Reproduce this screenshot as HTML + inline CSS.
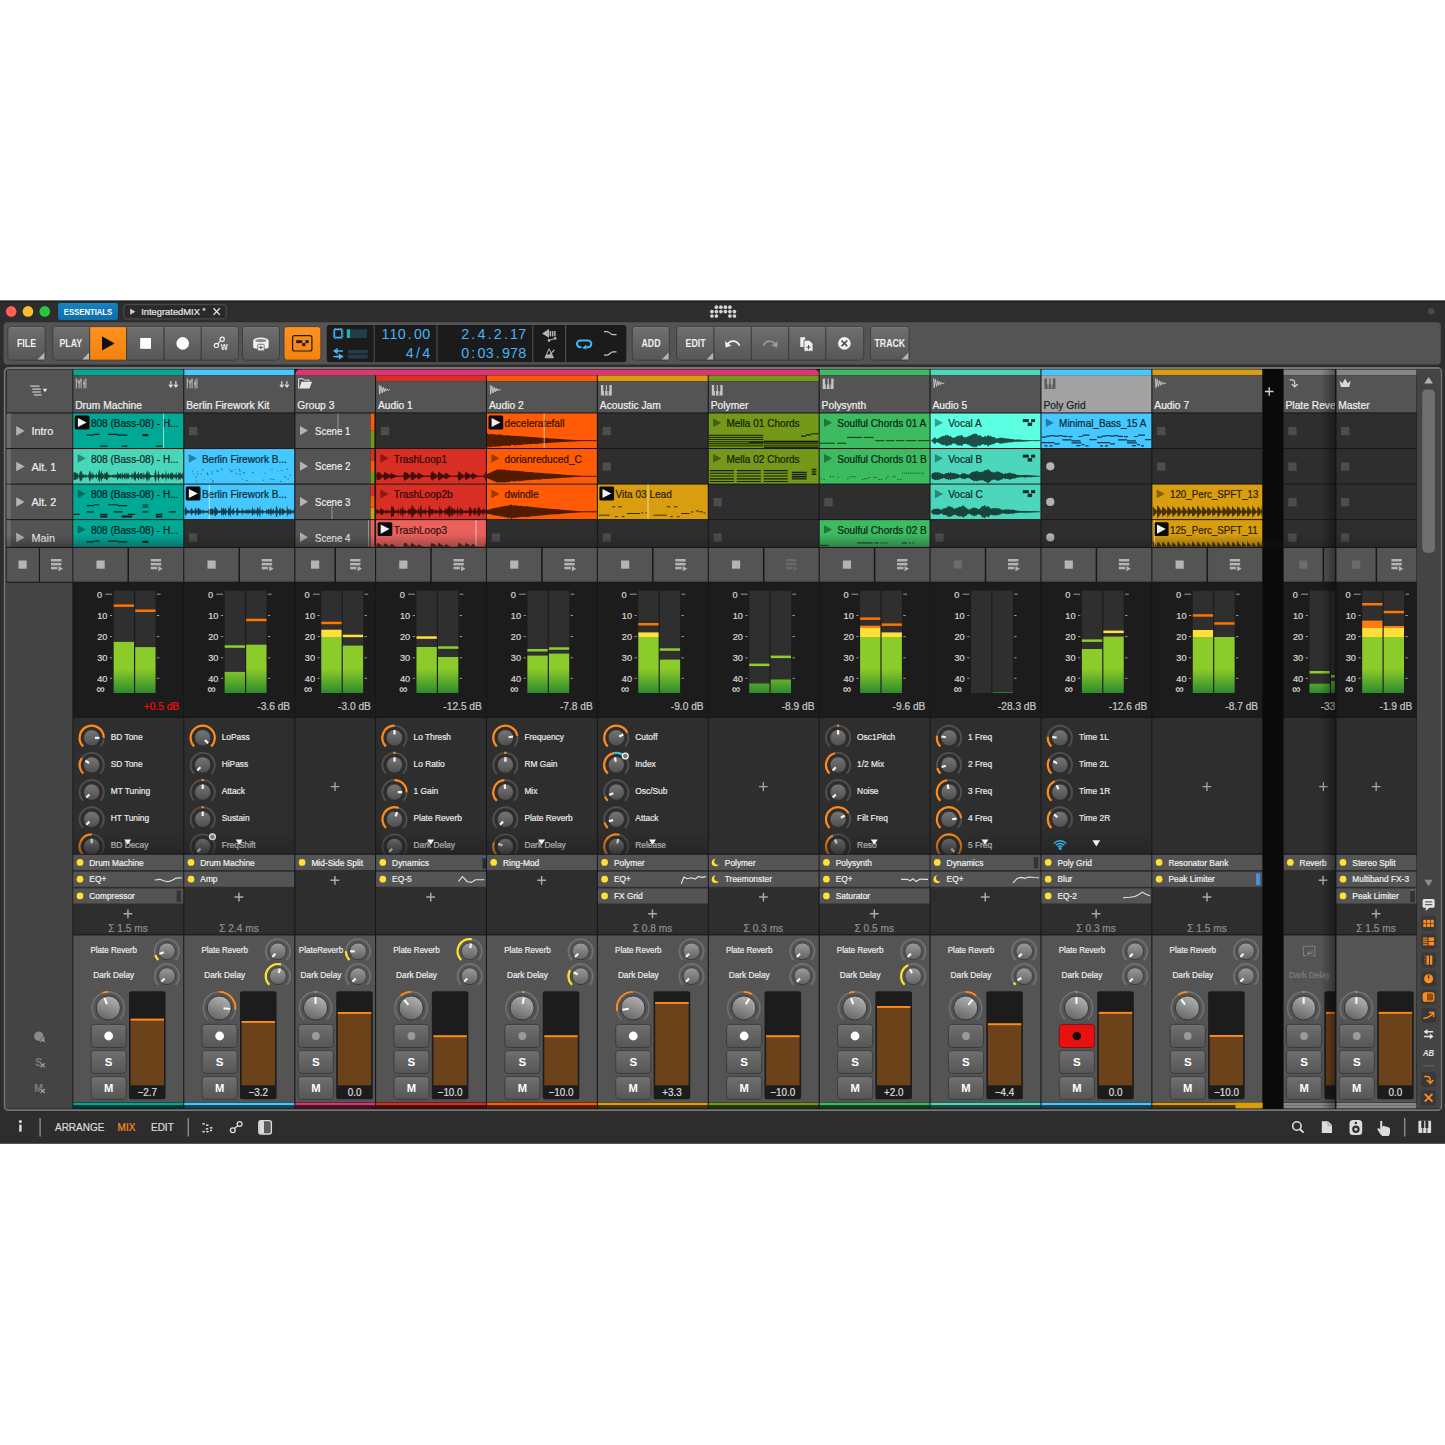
<!DOCTYPE html>
<html><head><meta charset="utf-8"><title>Bitwig Studio - IntegratedMIX</title>
<style>
html,body{margin:0;padding:0;background:#fff;}
svg{display:block;font-family:"Liberation Sans",sans-serif;}
text{font-family:"Liberation Sans",sans-serif;}
</style></head><body>
<svg width="1445" height="1445" viewBox="0 0 1445 1445">
<defs>
<linearGradient id="gBtn" x1="0" y1="0" x2="0" y2="1"><stop offset="0" stop-color="#717171"/><stop offset="0.2" stop-color="#6a6a6a"/><stop offset="1" stop-color="#565656"/></linearGradient>
<linearGradient id="gBtnO" x1="0" y1="0" x2="0" y2="1"><stop offset="0" stop-color="#ff9220"/><stop offset="1" stop-color="#f5820f"/></linearGradient>
<linearGradient id="gMeter" gradientUnits="userSpaceOnUse" x1="0" y1="669" x2="0" y2="693"><stop offset="0" stop-color="#8bcb2a"/><stop offset="1" stop-color="#2c8a2e"/></linearGradient>
<linearGradient id="gKnob" x1="0" y1="0" x2="0" y2="1"><stop offset="0" stop-color="#777"/><stop offset="1" stop-color="#4e4e4e"/></linearGradient>
<linearGradient id="gKnobL" x1="0" y1="0" x2="0" y2="1"><stop offset="0" stop-color="#9c9c9c"/><stop offset="1" stop-color="#626262"/></linearGradient>
<linearGradient id="gPan" x1="0.7" y1="0" x2="0.3" y2="1"><stop offset="0" stop-color="#b4b4b4"/><stop offset="1" stop-color="#646464"/></linearGradient>
<linearGradient id="gFadeK" gradientUnits="userSpaceOnUse" x1="0" y1="832" x2="0" y2="854"><stop offset="0" stop-color="#1c1c1c" stop-opacity="0"/><stop offset="1" stop-color="#1c1c1c" stop-opacity="0.5"/></linearGradient>
<linearGradient id="gFadeC" gradientUnits="userSpaceOnUse" x1="0" y1="534" x2="0" y2="547"><stop offset="0" stop-color="#1a1a1a" stop-opacity="0"/><stop offset="1" stop-color="#1a1a1a" stop-opacity="0.35"/></linearGradient>
<linearGradient id="gShadR" x1="0" y1="0" x2="1" y2="0"><stop offset="0" stop-color="#000" stop-opacity="0"/><stop offset="1" stop-color="#000" stop-opacity="0.38"/></linearGradient>
<linearGradient id="gEss" x1="0" y1="0" x2="0" y2="1"><stop offset="0" stop-color="#1583c4"/><stop offset="1" stop-color="#0f6ea8"/></linearGradient>
<clipPath id="clipMain"><rect x="5.6" y="368.8" width="1435" height="740"/></clipPath>
</defs>
<rect x="0" y="300.6" width="1445" height="843.2" fill="#2d2d2d"/>
<rect x="0" y="300.6" width="1445" height="1" fill="#1c1c1c"/>
<circle cx="11.2" cy="311.4" r="5.3" fill="#ff5f57"/>
<circle cx="27.95" cy="311.4" r="5.3" fill="#febc2e"/>
<circle cx="44.8" cy="311.4" r="5.3" fill="#2ac83f"/>
<rect x="58.1" y="302.9" width="59.8" height="17" rx="2.5" fill="url(#gEss)"/>
<text transform="translate(88 315.2) scale(0.865 1)" font-size="8.9" fill="#ffffff" text-anchor="middle" font-weight="bold">ESSENTIALS</text>
<rect x="123.9" y="304.7" width="102.3" height="14.2" rx="2.2" fill="#2a2a2a" stroke="#555" stroke-width="0.9"/>
<path d="M130.2 308.6L135.4 311.7L130.2 314.8Z" fill="#cfcfcf"/>
<text transform="translate(141.2 315.2) scale(0.945 1)" font-size="9.9" fill="#e8e8e8" stroke="#e8e8e8" stroke-width="0.22">IntegratedMIX</text>
<text transform="translate(202.6 313.4) scale(0.93 1)" font-size="8" fill="#e8e8e8" stroke="#e8e8e8" stroke-width="0.22">*</text>
<path d="M213.5 308.2L219.8 314.9M219.8 308.2L213.5 314.9" fill="none" stroke="#e8e8e8" stroke-width="1.3"/>
<circle cx="716.4" cy="307.2" r="1.85" fill="#d4d4d4"/>
<circle cx="720.9" cy="307.2" r="1.85" fill="#d4d4d4"/>
<circle cx="725.4" cy="307.2" r="1.85" fill="#d4d4d4"/>
<circle cx="729.9" cy="307.2" r="1.85" fill="#d4d4d4"/>
<circle cx="711.9" cy="311.6" r="1.85" fill="#d4d4d4"/>
<circle cx="716.4" cy="311.6" r="1.85" fill="#d4d4d4"/>
<circle cx="720.9" cy="311.6" r="1.85" fill="#d4d4d4"/>
<circle cx="725.4" cy="311.6" r="1.85" fill="#d4d4d4"/>
<circle cx="729.9" cy="311.6" r="1.85" fill="#d4d4d4"/>
<circle cx="734.4" cy="311.6" r="1.85" fill="#d4d4d4"/>
<circle cx="711.9" cy="316" r="1.85" fill="#d4d4d4"/>
<circle cx="716.4" cy="316" r="1.85" fill="#d4d4d4"/>
<circle cx="729.9" cy="316" r="1.85" fill="#d4d4d4"/>
<circle cx="734.4" cy="316" r="1.85" fill="#d4d4d4"/>
<circle cx="1431.2" cy="311.3" r="3.3" fill="#4a4a4a"/>
<rect x="3.6" y="322.3" width="1437.2" height="42.3" rx="4" fill="#545454"/>
<path d="M11 326.6H42Q45.2 326.6 45.2 329.8V357Q45.2 360.2 42 360.2H11Q7.8 360.2 7.8 357V329.8Q7.8 326.6 11 326.6Z" fill="url(#gBtn)" stroke="#3c3c3c" stroke-width="0.9"/>
<line x1="9.8" y1="327.5" x2="43.2" y2="327.5" stroke="#7c7c7c" stroke-width="0.8"/>
<text transform="translate(26.5 347.3) scale(0.88 1)" font-size="10" fill="#f0f0f0" text-anchor="middle" font-weight="bold">FILE</text>
<path d="M44.4 352.6L44.4 359.4L37.6 359.4Z" fill="#b4b4b4"/>
<path d="M55.9 326.6H89.7V360.2H55.9Q52.7 360.2 52.7 357V329.8Q52.7 326.6 55.9 326.6Z" fill="url(#gBtn)" stroke="#3c3c3c" stroke-width="0.9"/>
<line x1="54.7" y1="327.5" x2="89.2" y2="327.5" stroke="#7c7c7c" stroke-width="0.8"/>
<text transform="translate(70.8 347.3) scale(0.88 1)" font-size="10" fill="#f0f0f0" text-anchor="middle" font-weight="bold">PLAY</text>
<path d="M89.1 352.6L89.1 359.4L82.3 359.4Z" fill="#b4b4b4"/>
<path d="M89.7 326.6H126.6V360.2H89.7V326.6Z" fill="url(#gBtnO)" stroke="#3c3c3c" stroke-width="0.9"/>
<path d="M102 336.2L114.6 343.4L102 350.6Z" fill="#111"/>
<path d="M126.6 326.6H164.1V360.2H126.6V326.6Z" fill="url(#gBtn)" stroke="#3c3c3c" stroke-width="0.9"/>
<line x1="127.1" y1="327.5" x2="163.6" y2="327.5" stroke="#7c7c7c" stroke-width="0.8"/>
<rect x="140.2" y="338" width="10.8" height="10.8" fill="#fff"/>
<path d="M164.1 326.6H201.3V360.2H164.1V326.6Z" fill="url(#gBtn)" stroke="#3c3c3c" stroke-width="0.9"/>
<line x1="164.6" y1="327.5" x2="200.8" y2="327.5" stroke="#7c7c7c" stroke-width="0.8"/>
<circle cx="182.7" cy="343.4" r="6.3" fill="#fff"/>
<path d="M201.3 326.6H235.3Q238.5 326.6 238.5 329.8V357Q238.5 360.2 235.3 360.2H201.3V326.6Z" fill="url(#gBtn)" stroke="#3c3c3c" stroke-width="0.9"/>
<line x1="201.8" y1="327.5" x2="236.5" y2="327.5" stroke="#7c7c7c" stroke-width="0.8"/>
<circle cx="216.4" cy="345.4" r="2.1" fill="none" stroke="#eee" stroke-width="1.2"/>
<circle cx="222.2" cy="339.2" r="2.1" fill="none" stroke="#eee" stroke-width="1.2"/>
<line x1="217.8" y1="343.9" x2="220.8" y2="340.7" stroke="#eee" stroke-width="1.2"/>
<text transform="translate(224.2 349.6) scale(0.9 1)" font-size="8.2" fill="#eee" text-anchor="middle" font-weight="bold">W</text>
<path d="M245.7 326.6H276.3Q279.5 326.6 279.5 329.8V357Q279.5 360.2 276.3 360.2H245.7Q242.5 360.2 242.5 357V329.8Q242.5 326.6 245.7 326.6Z" fill="url(#gBtn)" stroke="#3c3c3c" stroke-width="0.9"/>
<line x1="244.5" y1="327.5" x2="277.5" y2="327.5" stroke="#7c7c7c" stroke-width="0.8"/>
<path d="M253.2 340.5V347.2C253.2 349.6 268.6 349.6 268.6 347.2V340.5Z" fill="#f0f0f0"/>
<ellipse cx="260.9" cy="340.5" rx="7.7" ry="3" fill="#f0f0f0"/>
<ellipse cx="260.9" cy="340.6" rx="5.6" ry="1.7" fill="#8a8a8a"/>
<rect x="257.7" y="344.3" width="6.5" height="6.5" rx="0.8" fill="#f0f0f0" stroke="#666" stroke-width="0.8"/>
<path d="M259.1 347.5H262.8M260.95 345.7V349.3" fill="none" stroke="#555" stroke-width="1"/>
<path d="M287.2 326.6H317.7Q320.9 326.6 320.9 329.8V357Q320.9 360.2 317.7 360.2H287.2Q284 360.2 284 357V329.8Q284 326.6 287.2 326.6Z" fill="url(#gBtnO)" stroke="#3c3c3c" stroke-width="0.9"/>
<rect x="292.6" y="335.7" width="19.3" height="15.3" rx="2" fill="none" stroke="#1a1a1a" stroke-width="1.2"/>
<rect x="296.2" y="340.2" width="6" height="2.9" fill="#1a1a1a"/>
<rect x="302.2" y="343.1" width="3.2" height="3" fill="#1a1a1a"/>
<rect x="305.4" y="340.2" width="3.2" height="2.9" fill="#1a1a1a"/>
<rect x="326.7" y="324.9" width="299.6" height="37.4" rx="3" fill="#1b1b1b"/>
<line x1="374.2" y1="324.9" x2="374.2" y2="362.3" stroke="#4c4c4c" stroke-width="1.2"/>
<line x1="437" y1="324.9" x2="437" y2="362.3" stroke="#4c4c4c" stroke-width="1.2"/>
<line x1="532.8" y1="324.9" x2="532.8" y2="362.3" stroke="#4c4c4c" stroke-width="1.2"/>
<line x1="565.6" y1="324.9" x2="565.6" y2="362.3" stroke="#4c4c4c" stroke-width="1.2"/>
<rect x="334.5" y="329.7" width="7.3" height="7.7" rx="0.8" fill="none" stroke="#46b4f5" stroke-width="1.3"/>
<rect x="333.3" y="328.5" width="9.7" height="10.1" rx="1.6" fill="none" stroke="#46b4f5" stroke-width="1.0" stroke-dasharray="0.9 0.75"/>
<rect x="346.8" y="329.3" width="20.2" height="8.7" fill="#233c4a"/>
<rect x="346.8" y="329.3" width="3.2" height="8.7" fill="#21b3a8"/>
<path d="M343 351H336.5M343.2 356.6H336" fill="none" stroke="#46b4f5" stroke-width="1.5"/>
<path d="M333 351L337.6 347.8V354.2ZM343.4 356.6L338.8 353.4V359.8Z" fill="#46b4f5"/>
<path d="M333.4 356.6H339" fill="none" stroke="#46b4f5" stroke-width="1.5"/>
<rect x="347.8" y="349.9" width="19.9" height="3.6" fill="#233c4a"/>
<rect x="347.8" y="354.7" width="19.9" height="3.8" fill="#233c4a"/>
<text x="381.4 389.55 397.7 407.84 414 422.15" y="339.3" font-size="14.3" fill="#46b4f5">110.00</text>
<text x="405.85 415.99 422.15" y="358.4" font-size="14.3" fill="#46b4f5">4/4</text>
<text x="461.2 471.34 477.5 487.64 493.8 503.94 510.1 518.25" y="339.3" font-size="14.3" fill="#46b4f5">2.4.2.17</text>
<text x="461.2 471.34 477.5 485.65 495.79 501.95 510.1 518.25" y="358.4" font-size="14.3" fill="#46b4f5">0:03.978</text>
<path d="M542.1 333.4L549 328.9V337.7Z" fill="#b4b4b4"/>
<rect x="549.6" y="331" width="1.5" height="5.3" fill="#b4b4b4"/>
<rect x="551.85" y="331" width="1.5" height="5.3" fill="#b4b4b4"/>
<rect x="554.1" y="331" width="1.5" height="5.3" fill="#b4b4b4"/>
<circle cx="549" cy="340.4" r="1.3" fill="#b4b4b4"/>
<circle cx="555.2" cy="338.4" r="1.3" fill="#b4b4b4"/>
<line x1="549" y1="340.4" x2="555.2" y2="338.4" stroke="#b4b4b4" stroke-width="1"/>
<path d="M545 357.8L549.1 348.8L553.4 357.8Z" fill="none" stroke="#b4b4b4" stroke-width="1"/>
<path d="M545 357.8L546.4 354.6H552L553.4 357.8Z" fill="#b4b4b4"/>
<line x1="549.4" y1="355.2" x2="554.4" y2="349.8" stroke="#b4b4b4" stroke-width="1.2"/>
<path d="M581.4 347.3H580.4A3.45 3.45 0 0 1 580.4 340.4H587.9A3.45 3.45 0 0 1 587.9 347.3H586.4" fill="none" stroke="#46b4f5" stroke-width="2"/>
<path d="M582.2 347.9L586.4 344.4V349.6Z" fill="#46b4f5"/>
<path d="M604 331.7H607C609.8 331.7 610.2 334.6 613 334.6H616.5" fill="none" stroke="#c4c4c4" stroke-width="1.2"/>
<path d="M604 355.1H607C609.8 355.1 610.2 351.9 613 351.9H616.5" fill="none" stroke="#c4c4c4" stroke-width="1.2"/>
<path d="M635.5 326.6H666.2Q669.4 326.6 669.4 329.8V357Q669.4 360.2 666.2 360.2H635.5Q632.3 360.2 632.3 357V329.8Q632.3 326.6 635.5 326.6Z" fill="url(#gBtn)" stroke="#3c3c3c" stroke-width="0.9"/>
<line x1="634.3" y1="327.5" x2="667.4" y2="327.5" stroke="#7c7c7c" stroke-width="0.8"/>
<text transform="translate(651 347.3) scale(0.88 1)" font-size="10" fill="#f0f0f0" text-anchor="middle" font-weight="bold">ADD</text>
<path d="M668.6 352.6L668.6 359.4L661.8 359.4Z" fill="#b4b4b4"/>
<path d="M679.8 326.6H714V360.2H679.8Q676.6 360.2 676.6 357V329.8Q676.6 326.6 679.8 326.6Z" fill="url(#gBtn)" stroke="#3c3c3c" stroke-width="0.9"/>
<line x1="678.6" y1="327.5" x2="713.5" y2="327.5" stroke="#7c7c7c" stroke-width="0.8"/>
<text transform="translate(695.6 347.3) scale(0.88 1)" font-size="10" fill="#f0f0f0" text-anchor="middle" font-weight="bold">EDIT</text>
<path d="M713.4 352.6L713.4 359.4L706.6 359.4Z" fill="#b4b4b4"/>
<path d="M714 326.6H751.4V360.2H714V326.6Z" fill="url(#gBtn)" stroke="#3c3c3c" stroke-width="0.9"/>
<line x1="714.5" y1="327.5" x2="750.9" y2="327.5" stroke="#7c7c7c" stroke-width="0.8"/>
<path d="M726.8 345.6C729.5 339.8 736.5 339.6 739.6 345.6" fill="none" stroke="#f0f0f0" stroke-width="1.8"/>
<path d="M725 341.3L725.6 347.6L731.4 345.8Z" fill="#f0f0f0"/>
<path d="M751.4 326.6H788.8V360.2H751.4V326.6Z" fill="url(#gBtn)" stroke="#3c3c3c" stroke-width="0.9"/>
<line x1="751.9" y1="327.5" x2="788.3" y2="327.5" stroke="#7c7c7c" stroke-width="0.8"/>
<path d="M763.2 345.6C766.3 339.6 773.3 339.8 776 345.6" fill="none" stroke="#9a9a9a" stroke-width="1.6"/>
<path d="M777.8 341.3L777.2 347.6L771.4 345.8Z" fill="#9a9a9a"/>
<path d="M788.8 326.6H825.9V360.2H788.8V326.6Z" fill="url(#gBtn)" stroke="#3c3c3c" stroke-width="0.9"/>
<line x1="789.3" y1="327.5" x2="825.4" y2="327.5" stroke="#7c7c7c" stroke-width="0.8"/>
<path d="M800.3 337.2H805.2V347H800.3Z" fill="#f0f0f0"/>
<path d="M804 340.2H809.4L813 343.8V351.2H804Z" fill="#f0f0f0" stroke="#5a5a5a" stroke-width="0.8"/>
<path d="M806.3 347.2H810.7M808.5 345V349.4" fill="none" stroke="#555" stroke-width="1"/>
<path d="M825.9 326.6H860.5Q863.7 326.6 863.7 329.8V357Q863.7 360.2 860.5 360.2H825.9V326.6Z" fill="url(#gBtn)" stroke="#3c3c3c" stroke-width="0.9"/>
<line x1="826.4" y1="327.5" x2="861.7" y2="327.5" stroke="#7c7c7c" stroke-width="0.8"/>
<circle cx="844.4" cy="343.4" r="6.3" fill="#f0f0f0"/>
<path d="M841.5 340.5L847.3 346.3M847.3 340.5L841.5 346.3" fill="none" stroke="#444" stroke-width="1.6"/>
<path d="M873.7 326.6H906Q909.2 326.6 909.2 329.8V357Q909.2 360.2 906 360.2H873.7Q870.5 360.2 870.5 357V329.8Q870.5 326.6 873.7 326.6Z" fill="url(#gBtn)" stroke="#3c3c3c" stroke-width="0.9"/>
<line x1="872.5" y1="327.5" x2="907.2" y2="327.5" stroke="#7c7c7c" stroke-width="0.8"/>
<text transform="translate(889.8 347.3) scale(0.88 1)" font-size="10" fill="#f0f0f0" text-anchor="middle" font-weight="bold">TRACK</text>
<path d="M908.4 352.6L908.4 359.4L901.6 359.4Z" fill="#b4b4b4"/>
<rect x="4.7" y="368" width="1436.6" height="742.2" rx="4" fill="#181818" stroke="#757575" stroke-width="1.8"/>
<rect x="6.6" y="369.5" width="65.8" height="42.9" fill="#545454"/>
<line x1="30.2" y1="386.1" x2="39.6" y2="386.1" stroke="#d8d8d8" stroke-width="1.1"/>
<line x1="32.3" y1="389.05" x2="40.8" y2="389.05" stroke="#d8d8d8" stroke-width="1.1"/>
<line x1="32.3" y1="392" x2="40.8" y2="392" stroke="#d8d8d8" stroke-width="1.1"/>
<line x1="33.8" y1="394.95" x2="41.8" y2="394.95" stroke="#d8d8d8" stroke-width="1.1"/>
<path d="M42.8 388.7H47.2L45 392.2Z" fill="#e8e8e8"/>
<rect x="6.6" y="413.5" width="65.8" height="34.5" fill="#545454"/>
<rect x="6.6" y="413.5" width="4.2" height="34.5" fill="#6c6c6c"/>
<path d="M16.2 426.1L24.6 430.9L16.2 435.7Z" fill="#b4b4b4"/>
<text transform="translate(31.5 435.1) scale(0.98 1)" font-size="11.1" fill="#ececec" stroke="#ececec" stroke-width="0.22">Intro</text>
<rect x="6.6" y="449.05" width="65.8" height="34.5" fill="#545454"/>
<rect x="6.6" y="449.05" width="4.2" height="34.5" fill="#6c6c6c"/>
<path d="M16.2 461.65L24.6 466.45L16.2 471.25Z" fill="#b4b4b4"/>
<text transform="translate(31.5 470.65) scale(0.98 1)" font-size="11.1" fill="#ececec" stroke="#ececec" stroke-width="0.22">Alt. 1</text>
<rect x="6.6" y="484.6" width="65.8" height="34.5" fill="#545454"/>
<rect x="6.6" y="484.6" width="4.2" height="34.5" fill="#6c6c6c"/>
<path d="M16.2 497.2L24.6 502L16.2 506.8Z" fill="#b4b4b4"/>
<text transform="translate(31.5 506.2) scale(0.98 1)" font-size="11.1" fill="#ececec" stroke="#ececec" stroke-width="0.22">Alt. 2</text>
<rect x="6.6" y="520.15" width="65.8" height="26.7" fill="#545454"/>
<rect x="6.6" y="520.15" width="4.2" height="26.7" fill="#6c6c6c"/>
<path d="M16.2 532.75L24.6 537.55L16.2 542.35Z" fill="#b4b4b4"/>
<text transform="translate(31.5 541.75) scale(0.98 1)" font-size="11.1" fill="#ececec" stroke="#ececec" stroke-width="0.22">Main</text>
<rect x="6.6" y="548" width="32.3" height="33.7" fill="#545454"/>
<rect x="40" y="548" width="32.4" height="33.7" fill="#545454"/>
<rect x="18.5" y="560.5" width="8.2" height="8.2" fill="#b4b4b4"/>
<rect x="51" y="559" width="10.4" height="2.5" fill="#b4b4b4"/>
<rect x="51" y="562.9" width="10.4" height="2.5" fill="#b4b4b4"/>
<rect x="51" y="566.8" width="6.4" height="2.5" fill="#b4b4b4"/>
<path d="M58.5 566.1L63 568.7L58.5 571.3Z" fill="#b4b4b4"/>
<rect x="5.7" y="582.7" width="66.7" height="525.9" fill="#444444"/>
<circle cx="38.8" cy="1036.2" r="4.7" fill="#8a8a8a"/>
<path d="M40.5 1037.8L44.8 1041.8M44.8 1037.8L40.5 1041.8" fill="none" stroke="#444" stroke-width="2.4"/>
<path d="M40.5 1037.8L44.8 1041.8M44.8 1037.8L40.5 1041.8" fill="none" stroke="#a0a0a0" stroke-width="1.2"/>
<text transform="translate(38.8 1066.2) scale(0.95 1)" font-size="11.2" fill="#7c7c7c" text-anchor="middle" font-weight="bold">S</text>
<path d="M40.5 1063.3L44.8 1067.3M44.8 1063.3L40.5 1067.3" fill="none" stroke="#444" stroke-width="2.4"/>
<path d="M40.5 1063.3L44.8 1067.3M44.8 1063.3L40.5 1067.3" fill="none" stroke="#a0a0a0" stroke-width="1.2"/>
<text transform="translate(38.6 1092.4) scale(0.92 1)" font-size="11.4" fill="#7c7c7c" text-anchor="middle" font-weight="bold">M</text>
<path d="M40.5 1089L44.8 1093M44.8 1089L40.5 1093" fill="none" stroke="#444" stroke-width="2.4"/>
<path d="M40.5 1089L44.8 1093M44.8 1089L40.5 1093" fill="none" stroke="#a0a0a0" stroke-width="1.2"/>
<rect x="1416.8" y="368.9" width="23.5" height="739.7" fill="#444444"/>
<rect x="1422.3" y="389.4" width="12.6" height="163.4" rx="4.5" fill="#707070"/>
<path d="M1428.6 377L1433 383.6H1424.2Z" fill="#b0b0b0"/>
<rect x="1262.6" y="368.9" width="21" height="739.7" fill="#0a0a0a"/>
<path d="M1264.9 391.5H1273.5M1269.2 387.2V395.8" fill="none" stroke="#d0d0d0" stroke-width="1.4"/>
<g clip-path="url(#clipMain)">
<rect x="73.3" y="369.5" width="109.9" height="5.7" fill="#00a896"/>
<rect x="73.3" y="375.2" width="109.9" height="37.2" fill="#545454"/>
<rect x="184.3" y="369.5" width="109.9" height="5.7" fill="#44c8ff"/>
<rect x="184.3" y="375.2" width="109.9" height="37.2" fill="#545454"/>
<rect x="295.4" y="375.2" width="79.6" height="37.2" fill="#545454"/>
<rect x="376.1" y="375.4" width="109.8" height="5.8" fill="#d92e24"/>
<rect x="376.1" y="381.2" width="109.8" height="31.2" fill="#545454"/>
<rect x="487" y="375.4" width="109.8" height="5.8" fill="#ff5a05"/>
<rect x="487" y="381.2" width="109.8" height="31.2" fill="#545454"/>
<rect x="597.9" y="375.4" width="109.8" height="5.8" fill="#d99d10"/>
<rect x="597.9" y="381.2" width="109.8" height="31.2" fill="#545454"/>
<rect x="708.8" y="375.4" width="109.8" height="5.8" fill="#73981a"/>
<rect x="708.8" y="381.2" width="109.8" height="31.2" fill="#545454"/>
<rect x="819.7" y="369.5" width="109.8" height="5.7" fill="#3cbb60"/>
<rect x="819.7" y="375.2" width="109.8" height="37.2" fill="#545454"/>
<rect x="930.6" y="369.5" width="109.8" height="5.7" fill="#4cd6bb"/>
<rect x="930.6" y="375.2" width="109.8" height="37.2" fill="#545454"/>
<rect x="1041.5" y="369.5" width="109.8" height="5.7" fill="#44c8ff"/>
<rect x="1041.5" y="375.2" width="109.8" height="37.2" fill="#a2a2a2"/>
<rect x="1152.4" y="369.5" width="109.8" height="5.7" fill="#d99d10"/>
<rect x="1152.4" y="375.2" width="109.8" height="37.2" fill="#545454"/>
<rect x="1283.6" y="369.5" width="51.4" height="5.7" fill="#858585"/>
<rect x="1283.6" y="375.2" width="51.4" height="37.2" fill="#545454"/>
<rect x="1336.3" y="369.5" width="80.1" height="5.7" fill="#858585"/>
<rect x="1336.3" y="375.2" width="80.1" height="37.2" fill="#545454"/>
<path d="M295.4 375.3V374.6Q295.4 369.4 300.6 369.4H813.8Q818.9 369.4 818.9 374.6V375.3Z" fill="#d93672"/>
<line x1="76.3" y1="378.4" x2="76.3" y2="388.4" stroke="#bdbdbd" stroke-width="1"/>
<line x1="79.1" y1="379.8" x2="79.1" y2="388.4" stroke="#bdbdbd" stroke-width="1"/>
<line x1="81.1" y1="378.4" x2="81.1" y2="388.4" stroke="#bdbdbd" stroke-width="1"/>
<line x1="84.1" y1="379.8" x2="84.1" y2="388.4" stroke="#bdbdbd" stroke-width="1"/>
<line x1="85.9" y1="378.4" x2="85.9" y2="388.4" stroke="#bdbdbd" stroke-width="1"/>
<path d="M76.3 379.4L79.1 383.4L81.1 379.4" fill="none" stroke="#bdbdbd" stroke-width="0.9"/>
<path d="M83.1 383.6H85.1" fill="none" stroke="#bdbdbd" stroke-width="1.6"/>
<path d="M170.8 381V386.6M168.9 384.6L170.8 387L172.7 384.6" fill="none" stroke="#e0e0e0" stroke-width="1.1"/>
<path d="M175.9 381V386.6M174 384.6L175.9 387L177.8 384.6" fill="none" stroke="#e0e0e0" stroke-width="1.1"/>
<text transform="translate(75.2 408.7) scale(0.925 1)" font-size="11.1" fill="#f0f0f0" stroke="#f0f0f0" stroke-width="0.22">Drum Machine</text>
<line x1="187.3" y1="378.4" x2="187.3" y2="388.4" stroke="#bdbdbd" stroke-width="1"/>
<line x1="190.1" y1="379.8" x2="190.1" y2="388.4" stroke="#bdbdbd" stroke-width="1"/>
<line x1="192.1" y1="378.4" x2="192.1" y2="388.4" stroke="#bdbdbd" stroke-width="1"/>
<line x1="195.1" y1="379.8" x2="195.1" y2="388.4" stroke="#bdbdbd" stroke-width="1"/>
<line x1="196.9" y1="378.4" x2="196.9" y2="388.4" stroke="#bdbdbd" stroke-width="1"/>
<path d="M187.3 379.4L190.1 383.4L192.1 379.4" fill="none" stroke="#bdbdbd" stroke-width="0.9"/>
<path d="M194.1 383.6H196.1" fill="none" stroke="#bdbdbd" stroke-width="1.6"/>
<path d="M281.8 381V386.6M279.9 384.6L281.8 387L283.7 384.6" fill="none" stroke="#e0e0e0" stroke-width="1.1"/>
<path d="M286.9 381V386.6M285 384.6L286.9 387L288.8 384.6" fill="none" stroke="#e0e0e0" stroke-width="1.1"/>
<text transform="translate(186.2 408.7) scale(0.925 1)" font-size="11.1" fill="#f0f0f0" stroke="#f0f0f0" stroke-width="0.22">Berlin Firework Kit</text>
<path d="M298.6 388.6V378.8H303L304.2 380.1H309.2V381.2" fill="none" stroke="#e6e6e6" stroke-width="1"/>
<path d="M299.2 388.6L301.6 381.7H312L309.6 388.6Z" fill="#e6e6e6"/>
<text transform="translate(297.3 408.7) scale(0.925 1)" font-size="11.1" fill="#f0f0f0" stroke="#f0f0f0" stroke-width="0.22">Group 3</text>
<path d="M379.2 384.9L379.7 394.2L380.9 385.9L382.1 393L383.2 387.3L384.2 391.9L385.2 388.3L386.2 391L387.2 389L388.2 390.3L389.8 389.6" fill="none" stroke="#c8c8c8" stroke-width="0.95" stroke-linejoin="round"/>
<text transform="translate(378 408.7) scale(0.925 1)" font-size="11.1" fill="#f0f0f0" stroke="#f0f0f0" stroke-width="0.22">Audio 1</text>
<path d="M490.1 384.9L490.6 394.2L491.8 385.9L493 393L494.1 387.3L495.1 391.9L496.1 388.3L497.1 391L498.1 389L499.1 390.3L500.7 389.6" fill="none" stroke="#c8c8c8" stroke-width="0.95" stroke-linejoin="round"/>
<text transform="translate(488.9 408.7) scale(0.925 1)" font-size="11.1" fill="#f0f0f0" stroke="#f0f0f0" stroke-width="0.22">Audio 2</text>
<rect x="600.9" y="385" width="10.9" height="10.6" rx="0.6" fill="#c4c4c4"/>
<rect x="604" y="384.8" width="1.1" height="10.4" fill="#545454"/>
<rect x="607.6" y="384.8" width="1.1" height="10.4" fill="#545454"/>
<rect x="603.3" y="384.8" width="2.5" height="6.2" fill="#545454"/>
<rect x="606.9" y="384.8" width="2.5" height="6.2" fill="#545454"/>
<text transform="translate(599.8 408.7) scale(0.925 1)" font-size="11.1" fill="#f0f0f0" stroke="#f0f0f0" stroke-width="0.22">Acoustic Jam</text>
<rect x="711.8" y="385" width="10.9" height="10.6" rx="0.6" fill="#c4c4c4"/>
<rect x="714.9" y="384.8" width="1.1" height="10.4" fill="#545454"/>
<rect x="718.5" y="384.8" width="1.1" height="10.4" fill="#545454"/>
<rect x="714.2" y="384.8" width="2.5" height="6.2" fill="#545454"/>
<rect x="717.8" y="384.8" width="2.5" height="6.2" fill="#545454"/>
<text transform="translate(710.7 408.7) scale(0.925 1)" font-size="11.1" fill="#f0f0f0" stroke="#f0f0f0" stroke-width="0.22">Polymer</text>
<rect x="822.7" y="378.4" width="10.9" height="10.6" rx="0.6" fill="#c4c4c4"/>
<rect x="825.8" y="378.2" width="1.1" height="10.4" fill="#545454"/>
<rect x="829.4" y="378.2" width="1.1" height="10.4" fill="#545454"/>
<rect x="825.1" y="378.2" width="2.5" height="6.2" fill="#545454"/>
<rect x="828.7" y="378.2" width="2.5" height="6.2" fill="#545454"/>
<text transform="translate(821.6 408.7) scale(0.925 1)" font-size="11.1" fill="#f0f0f0" stroke="#f0f0f0" stroke-width="0.22">Polysynth</text>
<path d="M933.7 378.3L934.2 387.6L935.4 379.3L936.6 386.4L937.7 380.7L938.7 385.3L939.7 381.7L940.7 384.4L941.7 382.4L942.7 383.7L944.3 383" fill="none" stroke="#c8c8c8" stroke-width="0.95" stroke-linejoin="round"/>
<text transform="translate(932.5 408.7) scale(0.925 1)" font-size="11.1" fill="#f0f0f0" stroke="#f0f0f0" stroke-width="0.22">Audio 5</text>
<rect x="1044.5" y="378.4" width="10.9" height="10.6" rx="0.6" fill="#5a5a5a"/>
<rect x="1047.6" y="378.2" width="1.1" height="10.4" fill="#a2a2a2"/>
<rect x="1051.2" y="378.2" width="1.1" height="10.4" fill="#a2a2a2"/>
<rect x="1046.9" y="378.2" width="2.5" height="6.2" fill="#a2a2a2"/>
<rect x="1050.5" y="378.2" width="2.5" height="6.2" fill="#a2a2a2"/>
<text transform="translate(1043.4 408.7) scale(0.925 1)" font-size="11.1" fill="#1c1c1c" stroke="#1c1c1c" stroke-width="0.22">Poly Grid</text>
<path d="M1155.5 378.3L1156 387.6L1157.2 379.3L1158.4 386.4L1159.5 380.7L1160.5 385.3L1161.5 381.7L1162.5 384.4L1163.5 382.4L1164.5 383.7L1166.1 383" fill="none" stroke="#c8c8c8" stroke-width="0.95" stroke-linejoin="round"/>
<text transform="translate(1154.3 408.7) scale(0.925 1)" font-size="11.1" fill="#f0f0f0" stroke="#f0f0f0" stroke-width="0.22">Audio 7</text>
<path d="M1289.6 379.8H1292.2C1294.8 379.8 1294.8 382.2 1294.8 386.4" fill="none" stroke="#d4d4d4" stroke-width="1.2"/>
<path d="M1291.8 384L1294.8 387L1297.8 384" fill="none" stroke="#d4d4d4" stroke-width="1.2"/>
<clipPath id="cpPR"><rect x="1283.6" y="368" width="51.4" height="742"/></clipPath><g clip-path="url(#cpPR)">
<text transform="translate(1285.5 408.7) scale(0.925 1)" font-size="11.1" fill="#f0f0f0" stroke="#f0f0f0" stroke-width="0.22">Plate Reverb</text>
</g>
<path d="M1339.5 380.8L1342.5 383.2L1345.1 378.6L1347.7 383.2L1350.7 380.8L1349.3 387H1340.9Z" fill="#d8d8d8"/>
<text transform="translate(1338.2 408.7) scale(0.925 1)" font-size="11.1" fill="#f0f0f0" stroke="#f0f0f0" stroke-width="0.22">Master</text>
<rect x="73.3" y="413.5" width="109.9" height="34.5" fill="#2e2e2e"/>
<rect x="78" y="426.9" width="8.3" height="8.3" fill="#4d4d4d"/>
<rect x="73.3" y="449.05" width="109.9" height="34.5" fill="#2e2e2e"/>
<rect x="78" y="462.45" width="8.3" height="8.3" fill="#4d4d4d"/>
<rect x="73.3" y="484.6" width="109.9" height="34.5" fill="#2e2e2e"/>
<rect x="78" y="498" width="8.3" height="8.3" fill="#4d4d4d"/>
<rect x="73.3" y="520.15" width="109.9" height="26.7" fill="#2e2e2e"/>
<rect x="78" y="533.55" width="8.3" height="8.3" fill="#4d4d4d"/>
<rect x="184.3" y="413.5" width="109.9" height="34.5" fill="#2e2e2e"/>
<rect x="189" y="426.9" width="8.3" height="8.3" fill="#4d4d4d"/>
<rect x="184.3" y="449.05" width="109.9" height="34.5" fill="#2e2e2e"/>
<rect x="189" y="462.45" width="8.3" height="8.3" fill="#4d4d4d"/>
<rect x="184.3" y="484.6" width="109.9" height="34.5" fill="#2e2e2e"/>
<rect x="189" y="498" width="8.3" height="8.3" fill="#4d4d4d"/>
<rect x="184.3" y="520.15" width="109.9" height="26.7" fill="#2e2e2e"/>
<rect x="189" y="533.55" width="8.3" height="8.3" fill="#4d4d4d"/>
<rect x="376.1" y="413.5" width="109.8" height="34.5" fill="#2e2e2e"/>
<rect x="380.8" y="426.9" width="8.3" height="8.3" fill="#4d4d4d"/>
<rect x="376.1" y="449.05" width="109.8" height="34.5" fill="#2e2e2e"/>
<rect x="380.8" y="462.45" width="8.3" height="8.3" fill="#4d4d4d"/>
<rect x="376.1" y="484.6" width="109.8" height="34.5" fill="#2e2e2e"/>
<rect x="380.8" y="498" width="8.3" height="8.3" fill="#4d4d4d"/>
<rect x="376.1" y="520.15" width="109.8" height="26.7" fill="#2e2e2e"/>
<rect x="380.8" y="533.55" width="8.3" height="8.3" fill="#4d4d4d"/>
<rect x="487" y="413.5" width="109.8" height="34.5" fill="#2e2e2e"/>
<rect x="491.7" y="426.9" width="8.3" height="8.3" fill="#4d4d4d"/>
<rect x="487" y="449.05" width="109.8" height="34.5" fill="#2e2e2e"/>
<rect x="491.7" y="462.45" width="8.3" height="8.3" fill="#4d4d4d"/>
<rect x="487" y="484.6" width="109.8" height="34.5" fill="#2e2e2e"/>
<rect x="491.7" y="498" width="8.3" height="8.3" fill="#4d4d4d"/>
<rect x="487" y="520.15" width="109.8" height="26.7" fill="#2e2e2e"/>
<rect x="491.7" y="533.55" width="8.3" height="8.3" fill="#4d4d4d"/>
<rect x="597.9" y="413.5" width="109.8" height="34.5" fill="#2e2e2e"/>
<rect x="602.6" y="426.9" width="8.3" height="8.3" fill="#4d4d4d"/>
<rect x="597.9" y="449.05" width="109.8" height="34.5" fill="#2e2e2e"/>
<rect x="602.6" y="462.45" width="8.3" height="8.3" fill="#4d4d4d"/>
<rect x="597.9" y="484.6" width="109.8" height="34.5" fill="#2e2e2e"/>
<rect x="602.6" y="498" width="8.3" height="8.3" fill="#4d4d4d"/>
<rect x="597.9" y="520.15" width="109.8" height="26.7" fill="#2e2e2e"/>
<rect x="602.6" y="533.55" width="8.3" height="8.3" fill="#4d4d4d"/>
<rect x="708.8" y="413.5" width="109.8" height="34.5" fill="#2e2e2e"/>
<rect x="713.5" y="426.9" width="8.3" height="8.3" fill="#4d4d4d"/>
<rect x="708.8" y="449.05" width="109.8" height="34.5" fill="#2e2e2e"/>
<rect x="713.5" y="462.45" width="8.3" height="8.3" fill="#4d4d4d"/>
<rect x="708.8" y="484.6" width="109.8" height="34.5" fill="#2e2e2e"/>
<rect x="713.5" y="498" width="8.3" height="8.3" fill="#4d4d4d"/>
<rect x="708.8" y="520.15" width="109.8" height="26.7" fill="#2e2e2e"/>
<rect x="713.5" y="533.55" width="8.3" height="8.3" fill="#4d4d4d"/>
<rect x="819.7" y="413.5" width="109.8" height="34.5" fill="#2e2e2e"/>
<rect x="824.4" y="426.9" width="8.3" height="8.3" fill="#4d4d4d"/>
<rect x="819.7" y="449.05" width="109.8" height="34.5" fill="#2e2e2e"/>
<rect x="824.4" y="462.45" width="8.3" height="8.3" fill="#4d4d4d"/>
<rect x="819.7" y="484.6" width="109.8" height="34.5" fill="#2e2e2e"/>
<rect x="824.4" y="498" width="8.3" height="8.3" fill="#4d4d4d"/>
<rect x="819.7" y="520.15" width="109.8" height="26.7" fill="#2e2e2e"/>
<rect x="824.4" y="533.55" width="8.3" height="8.3" fill="#4d4d4d"/>
<rect x="930.6" y="413.5" width="109.8" height="34.5" fill="#2e2e2e"/>
<rect x="935.3" y="426.9" width="8.3" height="8.3" fill="#4d4d4d"/>
<rect x="930.6" y="449.05" width="109.8" height="34.5" fill="#2e2e2e"/>
<rect x="935.3" y="462.45" width="8.3" height="8.3" fill="#4d4d4d"/>
<rect x="930.6" y="484.6" width="109.8" height="34.5" fill="#2e2e2e"/>
<rect x="935.3" y="498" width="8.3" height="8.3" fill="#4d4d4d"/>
<rect x="930.6" y="520.15" width="109.8" height="26.7" fill="#2e2e2e"/>
<rect x="935.3" y="533.55" width="8.3" height="8.3" fill="#4d4d4d"/>
<rect x="1041.5" y="413.5" width="109.8" height="34.5" fill="#2e2e2e"/>
<rect x="1046.2" y="426.9" width="8.3" height="8.3" fill="#4d4d4d"/>
<rect x="1041.5" y="449.05" width="109.8" height="34.5" fill="#2e2e2e"/>
<circle cx="1050.3" cy="466.35" r="4.1" fill="#b4b4b4"/>
<rect x="1041.5" y="484.6" width="109.8" height="34.5" fill="#2e2e2e"/>
<circle cx="1050.3" cy="501.9" r="4.1" fill="#b4b4b4"/>
<rect x="1041.5" y="520.15" width="109.8" height="26.7" fill="#2e2e2e"/>
<circle cx="1050.3" cy="537.45" r="4.1" fill="#b4b4b4"/>
<rect x="1152.4" y="413.5" width="109.8" height="34.5" fill="#2e2e2e"/>
<rect x="1157.1" y="426.9" width="8.3" height="8.3" fill="#4d4d4d"/>
<rect x="1152.4" y="449.05" width="109.8" height="34.5" fill="#2e2e2e"/>
<rect x="1157.1" y="462.45" width="8.3" height="8.3" fill="#4d4d4d"/>
<rect x="1152.4" y="484.6" width="109.8" height="34.5" fill="#2e2e2e"/>
<rect x="1157.1" y="498" width="8.3" height="8.3" fill="#4d4d4d"/>
<rect x="1152.4" y="520.15" width="109.8" height="26.7" fill="#2e2e2e"/>
<rect x="1157.1" y="533.55" width="8.3" height="8.3" fill="#4d4d4d"/>
<rect x="1283.6" y="413.5" width="51.4" height="34.5" fill="#2e2e2e"/>
<rect x="1288.3" y="426.9" width="8.3" height="8.3" fill="#4d4d4d"/>
<rect x="1283.6" y="449.05" width="51.4" height="34.5" fill="#2e2e2e"/>
<rect x="1288.3" y="462.45" width="8.3" height="8.3" fill="#4d4d4d"/>
<rect x="1283.6" y="484.6" width="51.4" height="34.5" fill="#2e2e2e"/>
<rect x="1288.3" y="498" width="8.3" height="8.3" fill="#4d4d4d"/>
<rect x="1283.6" y="520.15" width="51.4" height="26.7" fill="#2e2e2e"/>
<rect x="1288.3" y="533.55" width="8.3" height="8.3" fill="#4d4d4d"/>
<rect x="1336.3" y="413.5" width="80.1" height="34.5" fill="#2e2e2e"/>
<rect x="1341" y="426.9" width="8.3" height="8.3" fill="#4d4d4d"/>
<rect x="1336.3" y="449.05" width="80.1" height="34.5" fill="#2e2e2e"/>
<rect x="1341" y="462.45" width="8.3" height="8.3" fill="#4d4d4d"/>
<rect x="1336.3" y="484.6" width="80.1" height="34.5" fill="#2e2e2e"/>
<rect x="1341" y="498" width="8.3" height="8.3" fill="#4d4d4d"/>
<rect x="1336.3" y="520.15" width="80.1" height="26.7" fill="#2e2e2e"/>
<rect x="1341" y="533.55" width="8.3" height="8.3" fill="#4d4d4d"/>
<rect x="73.3" y="413.5" width="109.9" height="34.5" fill="#00a896"/>
<clipPath id="cl0_0"><rect x="73.3" y="413.5" width="109.9" height="34.5"/></clipPath>
<g clip-path="url(#cl0_0)">
<line x1="86.7" y1="435.2" x2="93.9" y2="435.2" stroke="#00211e" stroke-width="1.2"/>
<line x1="93.9" y1="434.4" x2="99.4" y2="434.4" stroke="#00211e" stroke-width="1.2"/>
<line x1="108.2" y1="434.4" x2="117.7" y2="434.4" stroke="#00211e" stroke-width="1.2"/>
<line x1="117.7" y1="435.2" x2="127.3" y2="435.2" stroke="#00211e" stroke-width="1.2"/>
<line x1="142.4" y1="435.2" x2="148.3" y2="435.2" stroke="#00211e" stroke-width="2.2"/>
<line x1="100.2" y1="446.1" x2="107.4" y2="446.1" stroke="#00211e" stroke-width="1.2"/>
<line x1="121.7" y1="446.1" x2="127.3" y2="446.1" stroke="#00211e" stroke-width="1.2"/>
<line x1="155.9" y1="446.1" x2="162.3" y2="446.1" stroke="#00211e" stroke-width="1.2"/>
<rect x="74.8" y="415.5" width="14.7" height="13.9" rx="1.5" fill="#0a0a0a"/>
<path d="M77.9 417.9L86.7 422.45L77.9 427Z" fill="#f4f4f4"/>
<text transform="translate(90.9 427.2) scale(0.915 1)" font-size="11" fill="#00211e" stroke="#00211e" stroke-width="0.22">808 (Bass-08) - H...</text>
<line x1="163.6" y1="413.5" x2="163.6" y2="448" stroke="#ffffff" stroke-width="0.8" opacity="0.75"/>
</g>
<rect x="73.3" y="449.05" width="109.9" height="34.5" fill="#4ad6b8"/>
<clipPath id="cl0_1"><rect x="73.3" y="449.05" width="109.9" height="34.5"/></clipPath>
<g clip-path="url(#cl0_1)">
<path d="M73.3 472.81L74.15 472.29L75 472.5L75.85 472.15L76.7 473.71L77.55 472.7L78.4 475.7L79.25 474.41L80.1 470.51L80.95 472.6L81.8 470.14L82.65 475.3L83.5 474.11L84.35 475.24L85.2 474.4L86.05 474.47L86.9 475.76L87.75 475.44L88.6 475.12L89.45 470.73L90.3 471.61L91.15 475.15L92 471.39L92.85 475.36L93.7 473.68L94.55 475.62L95.4 475.77L96.25 472.97L97.1 475.45L97.95 475.29L98.8 470.06L99.65 470.59L100.5 474.71L101.35 469.8L102.2 473.74L103.05 473.35L103.9 475.5L104.75 472.62L105.6 473.92L106.45 471.85L107.3 471.62L108.15 474.84L109 474.42L109.85 475.14L110.7 475.24L111.55 475.48L112.4 475.11L113.25 474.17L114.1 475.77L114.95 473.97L115.8 475.1L116.65 474.99L117.5 471.53L118.35 473.74L119.2 474.59L120.05 473.83L120.9 472.69L121.75 475.61L122.6 472.07L123.45 475.77L124.3 473.6L125.15 472.62L126 475.57L126.85 471.76L127.7 474.38L128.55 473.03L129.4 475.44L130.25 475.51L131.1 475.43L131.95 472.23L132.8 475.59L133.65 473.56L134.5 472.01L135.35 471.11L136.2 474.63L137.05 474.43L137.9 473.41L138.75 471.68L139.6 475.44L140.45 473.01L141.3 473.22L142.15 473.12L143 475.74L143.85 471.86L144.7 475.5L145.55 474.63L146.4 472.83L147.25 469.99L148.1 474.6L148.95 471.03L149.8 474.17L150.65 475.27L151.5 475.33L152.35 475.59L153.2 475.63L154.05 475.4L154.9 472.5L155.75 469.17L156.6 475.16L157.45 475.42L158.3 470.5L159.15 474.25L160 475L160.85 475.51L161.7 474.3L162.55 472.63L163.4 474.32L164.25 474.23L165.1 475.36L165.95 470.03L166.8 475.44L167.65 474.11L168.5 472.51L169.35 475.65L170.2 473.79L171.05 472.36L171.9 473.78L172.75 472.22L173.6 475.35L174.45 473.99L175.3 475.19L176.15 471.15L177 474.99L177.85 474.63L178.7 472.06L179.55 473.16L180.4 472.17L181.25 474.61L182.1 474.13L182.95 472.12L182.95 480.06L182.1 478.15L181.25 477.75L180.4 479.81L179.55 479.05L178.7 480.44L177.85 477.86L177 477.44L176.15 480.96L175.3 477.2L174.45 478.2L173.6 477.05L172.75 480.15L171.9 478.67L171.05 479.77L170.2 478.63L169.35 476.83L168.5 479.82L167.65 478.28L166.8 477.03L165.95 481.88L165.1 477.1L164.25 478.06L163.4 478.03L162.55 479.75L161.7 478.11L160.85 476.91L160 477.49L159.15 478.15L158.3 481.64L157.45 476.96L156.6 477.27L155.75 482.53L154.9 479.82L154.05 477.03L153.2 476.86L152.35 476.88L151.5 477.14L150.65 477.13L149.8 478.22L148.95 481.27L148.1 477.86L147.25 481.9L146.4 479.59L145.55 477.83L144.7 476.96L143.85 480.63L143 476.75L142.15 479.16L141.3 479.07L140.45 479.08L139.6 477.04L138.75 480.78L137.9 478.86L137.05 477.98L136.2 477.8L135.35 481.18L134.5 479.96L133.65 478.85L132.8 476.87L131.95 480.07L131.1 476.99L130.25 476.95L129.4 477.04L128.55 479.29L127.7 478.04L126.85 480.08L126 476.84L125.15 479.58L124.3 478.76L123.45 476.67L122.6 480.24L121.75 476.86L120.9 479.29L120.05 478.48L119.2 477.71L118.35 478.4L117.5 480.36L116.65 477.38L115.8 477.26L114.95 478.25L114.1 476.66L113.25 478.16L112.4 477.29L111.55 476.97L110.7 477.2L109.85 477.24L109 478.06L108.15 477.45L107.3 480.46L106.45 480.18L105.6 478.38L104.75 479.39L103.9 476.98L103.05 478.88L102.2 478.39L101.35 482.33L100.5 477.58L99.65 481.53L98.8 481.83L97.95 477.15L97.1 477.04L96.25 479.44L95.4 476.69L94.55 476.86L93.7 478.68L92.85 477.06L92 480.48L91.15 477.28L90.3 480.59L89.45 481.73L88.6 477.38L87.75 477.01L86.9 476.69L86.05 478L85.2 477.82L84.35 477.12L83.5 478.25L82.65 477.15L81.8 481.58L80.95 479.7L80.1 481.89L79.25 477.92L78.4 476.75L77.55 479.39L76.7 478.52L75.85 480.34L75 479.65L74.15 480.19L73.3 479.64Z" fill="#17443a"/>
<line x1="73.3" y1="476.25" x2="183.2" y2="476.25" stroke="#17443a" stroke-width="0.8"/>
<path d="M77.6 454.05L85.8 458.35L77.6 462.65Z" fill="#2d8472"/>
<text transform="translate(90.9 462.75) scale(0.915 1)" font-size="11" fill="#0e2a24" stroke="#0e2a24" stroke-width="0.22">808 (Bass-08) - H...</text>
</g>
<rect x="73.3" y="484.6" width="109.9" height="34.5" fill="#00a896"/>
<clipPath id="cl0_2"><rect x="73.3" y="484.6" width="109.9" height="34.5"/></clipPath>
<g clip-path="url(#cl0_2)">
<line x1="86.7" y1="505.6" x2="93.9" y2="505.6" stroke="#00211e" stroke-width="1.1"/>
<line x1="93.9" y1="504.8" x2="99.4" y2="504.8" stroke="#00211e" stroke-width="1.1"/>
<line x1="108.2" y1="504.8" x2="117.7" y2="504.8" stroke="#00211e" stroke-width="1.1"/>
<line x1="117.7" y1="505.6" x2="127.3" y2="505.6" stroke="#00211e" stroke-width="1.1"/>
<line x1="142.4" y1="505" x2="148.3" y2="505" stroke="#00211e" stroke-width="1.1"/>
<line x1="142.4" y1="507" x2="148.3" y2="507" stroke="#00211e" stroke-width="1.1"/>
<line x1="86.7" y1="511.9" x2="93.9" y2="511.9" stroke="#00211e" stroke-width="1.1"/>
<line x1="113.8" y1="511.9" x2="122.5" y2="511.9" stroke="#00211e" stroke-width="1.1"/>
<line x1="142.4" y1="511.9" x2="148.3" y2="511.9" stroke="#00211e" stroke-width="1.1"/>
<line x1="168.7" y1="511.9" x2="175.9" y2="511.9" stroke="#00211e" stroke-width="1.1"/>
<line x1="73.3" y1="514.4" x2="79.7" y2="514.4" stroke="#00211e" stroke-width="1.1"/>
<line x1="100.2" y1="514.4" x2="107.4" y2="514.4" stroke="#00211e" stroke-width="1.1"/>
<line x1="128.1" y1="514.4" x2="135.3" y2="514.4" stroke="#00211e" stroke-width="1.1"/>
<line x1="155.9" y1="514.4" x2="162.3" y2="514.4" stroke="#00211e" stroke-width="1.1"/>
<line x1="100.2" y1="516.5" x2="107.4" y2="516.5" stroke="#00211e" stroke-width="1.9"/>
<line x1="121.7" y1="516.5" x2="132.1" y2="516.5" stroke="#00211e" stroke-width="1.9"/>
<line x1="155.9" y1="516.5" x2="162.3" y2="516.5" stroke="#00211e" stroke-width="1.9"/>
<path d="M77.6 489.6L85.8 493.9L77.6 498.2Z" fill="#00685d"/>
<text transform="translate(90.9 498.3) scale(0.915 1)" font-size="11" fill="#00211e" stroke="#00211e" stroke-width="0.22">808 (Bass-08) - H...</text>
</g>
<rect x="73.3" y="520.15" width="109.9" height="26.7" fill="#00a896"/>
<clipPath id="cl0_3"><rect x="73.3" y="520.15" width="109.9" height="26.7"/></clipPath>
<g clip-path="url(#cl0_3)">
<line x1="86.7" y1="541.85" x2="93.9" y2="541.85" stroke="#00211e" stroke-width="1.2"/>
<line x1="93.9" y1="541.05" x2="99.4" y2="541.05" stroke="#00211e" stroke-width="1.2"/>
<line x1="108.2" y1="541.05" x2="117.7" y2="541.05" stroke="#00211e" stroke-width="1.2"/>
<line x1="117.7" y1="541.85" x2="127.3" y2="541.85" stroke="#00211e" stroke-width="1.2"/>
<line x1="142.4" y1="541.85" x2="148.3" y2="541.85" stroke="#00211e" stroke-width="2.2"/>
<line x1="100.2" y1="552.75" x2="107.4" y2="552.75" stroke="#00211e" stroke-width="1.2"/>
<line x1="121.7" y1="552.75" x2="127.3" y2="552.75" stroke="#00211e" stroke-width="1.2"/>
<line x1="155.9" y1="552.75" x2="162.3" y2="552.75" stroke="#00211e" stroke-width="1.2"/>
<path d="M77.6 525.15L85.8 529.45L77.6 533.75Z" fill="#00685d"/>
<text transform="translate(90.9 533.85) scale(0.915 1)" font-size="11" fill="#00211e" stroke="#00211e" stroke-width="0.22">808 (Bass-08) - H...</text>
</g>
<rect x="184.3" y="449.05" width="109.9" height="34.5" fill="#44c8ff"/>
<clipPath id="cl1_1"><rect x="184.3" y="449.05" width="109.9" height="34.5"/></clipPath>
<g clip-path="url(#cl1_1)">
<path d="M197.12 474.2h1.04M193.28 474.27h0.95M269.69 479h1.72M242.59 472.65h1.02M197.44 471.84h0.97M272.65 479.54h1.73M206.48 473.08h1.6M262.76 480.16h1.43M195.34 476.93h1.68M239.14 471.36h1.47M195.65 481.2h1.27M243.38 472.95h1.67M245.94 480.52h1.71M239.3 474.43h1.65M231.34 471.15h1.4M271.46 469.61h1.11M252.1 472.7h0.85M235.58 473.51h1.33M206.66 474.42h1.8M252.66 472.64h1M264.54 473.22h1.16M280.84 470.36h1.36M210.34 479h0.86M211.11 473.35h1.42M234.46 469.61h0.98M279.84 481.46h1.5M286.48 469.29h1.53M287.55 479.13h1.09M285.05 477.12h1.21M216.9 471.54h1.62M200.58 474.01h1.24M220.8 469.17h1.76M204.11 479.24h0.84M216.71 470.31h1.16M230.44 471.75h1.78M192.11 471.24h0.86M201.93 469.58h1.48M212.35 482.02h1.29M241.86 479.11h0.92M289.7 475.26h1.21M229.36 469.53h1.04M212.32 480.61h1.22M238.29 469.46h1.63M211.71 471.75h1.05M277.51 470.89h1.03M283.79 476.4h0.85" fill="none" stroke="#256e8c" stroke-width="1"/>
<path d="M188.6 454.05L196.8 458.35L188.6 462.65Z" fill="#2a7c9e"/>
<text transform="translate(201.9 462.75) scale(0.915 1)" font-size="11" fill="#0d2833" stroke="#0d2833" stroke-width="0.22">Berlin Firework B...</text>
</g>
<rect x="184.3" y="484.6" width="109.9" height="34.5" fill="#44c8ff"/>
<clipPath id="cl1_2"><rect x="184.3" y="484.6" width="109.9" height="34.5"/></clipPath>
<g clip-path="url(#cl1_2)">
<path d="M184.3 509.42L185.15 508.82L186 506.29L186.85 509.98L187.7 510.09L188.55 509.96L189.4 511.15L190.25 510.05L191.1 509.09L191.95 507.39L192.8 510.88L193.65 510.2L194.5 510.89L195.35 507.33L196.2 508.76L197.05 511.25L197.9 507.91L198.75 507.97L199.6 509.37L200.45 509.15L201.3 510.84L202.15 510.96L203 508.93L203.85 510.94L204.7 510.79L205.55 510.81L206.4 511.26L207.25 510.44L208.1 510.49L208.95 508.26L209.8 509.66L210.65 508.52L211.5 509.19L212.35 507.92L213.2 509.5L214.05 510.53L214.9 506.62L215.75 507.43L216.6 508.76L217.45 509.38L218.3 510.73L219.15 510.79L220 510.43L220.85 510.9L221.7 507.02L222.55 509.82L223.4 507.11L224.25 510.36L225.1 507.71L225.95 508.72L226.8 511.31L227.65 510.99L228.5 506.99L229.35 509.57L230.2 504.97L231.05 509.74L231.9 510.93L232.75 508.77L233.6 508.32L234.45 510.92L235.3 511.28L236.15 510.81L237 507.34L237.85 508.13L238.7 510.9L239.55 510.45L240.4 510.84L241.25 510.95L242.1 507.58L242.95 510.99L243.8 509.95L244.65 510.5L245.5 511.12L246.35 508.84L247.2 510.99L248.05 508.42L248.9 510.82L249.75 509.61L250.6 510.62L251.45 510.59L252.3 507L253.15 508.74L254 510.91L254.85 508.37L255.7 510.97L256.55 510.18L257.4 506.67L258.25 508.13L259.1 510.84L259.95 505.2L260.8 510.77L261.65 510.82L262.5 508.93L263.35 510.85L264.2 510.89L265.05 511.18L265.9 511.04L266.75 508.81L267.6 510.46L268.45 508.42L269.3 510.01L270.15 509.86L271 507.17L271.85 510.28L272.7 510.04L273.55 508.44L274.4 511.01L275.25 510.93L276.1 506.1L276.95 506.58L277.8 510.43L278.65 510.71L279.5 508.13L280.35 507.34L281.2 511.1L282.05 508.15L282.9 508.33L283.75 509.46L284.6 510.02L285.45 510.9L286.3 510.92L287.15 505.09L288 510.57L288.85 508.4L289.7 510.84L290.55 508.69L291.4 509.95L292.25 510.88L293.1 511.01L293.95 508.23L293.95 514.87L293.1 512.49L292.25 512.66L291.4 513.61L290.55 514.73L289.7 512.65L288.85 515.16L288 512.89L287.15 517.52L286.3 512.58L285.45 512.62L284.6 513.33L283.75 513.85L282.9 514.94L282.05 515.22L281.2 512.41L280.35 515.83L279.5 515.41L278.65 512.89L277.8 513.1L276.95 516.78L276.1 517.14L275.25 512.56L274.4 512.47L273.55 514.66L272.7 513.54L271.85 513.25L271 516.41L270.15 513.46L269.3 513.49L268.45 514.91L267.6 513.09L266.75 514.48L265.9 512.56L265.05 512.33L264.2 512.65L263.35 512.71L262.5 514.63L261.65 512.74L260.8 512.78L259.95 518.19L259.1 512.75L258.25 515.11L257.4 516.69L256.55 513.4L255.7 512.62L254.85 514.93L254 512.66L253.15 514.8L252.3 516.29L251.45 512.94L250.6 512.87L249.75 513.85L248.9 512.72L248.05 514.71L247.2 512.56L246.35 514.76L245.5 512.47L244.65 513.04L243.8 513.48L242.95 512.58L242.1 515.75L241.25 512.58L240.4 512.74L239.55 512.96L238.7 512.67L237.85 514.94L237 516L236.15 512.72L235.3 512.26L234.45 512.64L233.6 515.02L232.75 514.65L231.9 512.66L231.05 513.63L230.2 517.62L229.35 513.8L228.5 516.37L227.65 512.51L226.8 512.23L225.95 514.83L225.1 515.68L224.25 513.12L223.4 516.41L222.55 513.58L221.7 516.34L220.85 512.59L220 513.06L219.15 512.78L218.3 512.86L217.45 514.17L216.6 514.56L215.75 515.9L214.9 516.45L214.05 512.91L213.2 513.92L212.35 515.58L211.5 514.35L210.65 514.94L209.8 513.92L208.95 514.96L208.1 512.94L207.25 513.05L206.4 512.28L205.55 512.67L204.7 512.72L203.85 512.62L203 514.45L202.15 512.56L201.3 512.74L200.45 514.44L199.6 514.03L198.75 515.1L197.9 515.13L197.05 512.34L196.2 514.4L195.35 516.07L194.5 512.65L193.65 513.24L192.8 512.69L191.95 515.56L191.1 514.16L190.25 513.4L189.4 512.36L188.55 513.59L187.7 513.31L186.85 513.39L186 516.52L185.15 514.61L184.3 513.99Z" fill="#154051"/>
<line x1="184.3" y1="511.8" x2="294.2" y2="511.8" stroke="#154051" stroke-width="0.8"/>
<rect x="185.8" y="486.6" width="14.7" height="13.9" rx="1.5" fill="#0a0a0a"/>
<path d="M188.9 489L197.7 493.55L188.9 498.1Z" fill="#f4f4f4"/>
<text transform="translate(201.9 498.3) scale(0.915 1)" font-size="11" fill="#0d2833" stroke="#0d2833" stroke-width="0.22">Berlin Firework B...</text>
<line x1="209.3" y1="484.6" x2="209.3" y2="519.1" stroke="#ffffff" stroke-width="0.8" opacity="0.75"/>
</g>
<rect x="376.1" y="449.05" width="109.8" height="34.5" fill="#d92e24"/>
<clipPath id="cl3_1"><rect x="376.1" y="449.05" width="109.8" height="34.5"/></clipPath>
<g clip-path="url(#cl3_1)">
<path d="M376.1 475.78L376.95 472.22L377.8 472.32L378.65 472.77L379.5 472.35L380.35 473.15L381.2 473.92L382.05 474.87L382.9 475.57L383.75 473.68L384.6 471.54L385.45 472.7L386.3 472.86L387.15 473.47L388 473.8L388.85 474.36L389.7 475.25L390.55 473.62L391.4 473.08L392.25 473.65L393.1 474.24L393.95 474.61L394.8 474.77L395.65 475.32L396.5 475.86L397.35 475.79L398.2 475.84L399.05 475.84L399.9 475.88L400.75 475.91L401.6 475.87L402.45 475.9L403.3 475.59L404.15 471.65L405 471.39L405.85 472.7L406.7 472.38L407.55 473.2L408.4 473.98L409.25 474.69L410.1 475.69L410.95 473.03L411.8 471.98L412.65 471.63L413.5 472.31L414.35 473.79L415.2 473.88L416.05 474.63L416.9 475.52L417.75 473.33L418.6 473.09L419.45 473.07L420.3 473.91L421.15 474.13L422 474.89L422.85 475.21L423.7 475.79L424.55 475.85L425.4 475.84L426.25 475.79L427.1 475.81L427.95 475.85L428.8 475.89L429.65 475.87L430.5 474.98L431.35 472.42L432.2 471.11L433.05 472.66L433.9 472.47L434.75 473.76L435.6 473.94L436.45 474.91L437.3 475.84L438.15 472.88L439 471.6L439.85 472.26L440.7 473.17L441.55 473.82L442.4 474.16L443.25 474.64L444.1 475.19L444.95 473.55L445.8 472.78L446.65 473.33L447.5 473.64L448.35 474.62L449.2 474.77L450.05 475.54L450.9 475.82L451.75 475.88L452.6 475.88L453.45 475.79L454.3 475.9L455.15 475.84L456 475.79L456.85 475.88L457.7 474.72L458.55 470.87L459.4 471.96L460.25 472.14L461.1 473.57L461.95 473.8L462.8 474.58L463.65 475.05L464.5 475.67L465.35 471.89L466.2 472.64L467.05 472.16L467.9 473.58L468.75 473.86L469.6 474.05L470.45 475.12L471.3 475.04L472.15 472.57L473 473.32L473.85 474.03L474.7 473.65L475.55 474.7L476.4 475.18L477.25 475.54L478.1 475.83L478.95 475.81L479.8 475.9L480.65 475.87L481.5 475.91L482.35 475.85L483.2 475.81L484.05 475.81L484.9 473.74L485.75 470.92L485.75 481.47L484.9 478.65L484.05 476.65L483.2 476.64L482.35 476.63L481.5 476.55L480.65 476.58L479.8 476.57L478.95 476.68L478.1 476.62L477.25 476.92L476.4 477.23L475.55 477.69L474.7 478.51L473.85 478.45L473 478.85L472.15 479.72L471.3 477.36L470.45 477.22L469.6 478.3L468.75 478.33L467.9 478.54L467.05 479.75L466.2 479.41L465.35 480.02L464.5 476.8L463.65 477.37L462.8 477.92L461.95 478.67L461.1 478.93L460.25 479.89L459.4 480.18L458.55 481.02L457.7 477.68L456.85 476.6L456 476.69L455.15 476.64L454.3 476.56L453.45 476.67L452.6 476.59L451.75 476.57L450.9 476.61L450.05 476.89L449.2 477.53L448.35 477.82L447.5 478.56L446.65 478.78L445.8 479.29L444.95 478.64L444.1 477.18L443.25 477.74L442.4 478.17L441.55 478.43L440.7 479.17L439.85 479.77L439 480.84L438.15 479.6L437.3 476.64L436.45 477.48L435.6 478.39L434.75 478.58L433.9 479.49L433.05 479.52L432.2 481.02L431.35 479.61L430.5 477.35L429.65 476.62L428.8 476.58L427.95 476.62L427.1 476.68L426.25 476.69L425.4 476.62L424.55 476.65L423.7 476.67L422.85 477.14L422 477.54L421.15 478.09L420.3 478.35L419.45 479.35L418.6 479.26L417.75 478.74L416.9 476.92L416.05 477.72L415.2 478.44L414.35 478.42L413.5 479.95L412.65 480.23L411.8 480.06L410.95 479.16L410.1 476.81L409.25 477.6L408.4 478.44L407.55 478.93L406.7 479.87L405.85 479.47L405 480.72L404.15 480.68L403.3 476.85L402.45 476.56L401.6 476.58L400.75 476.54L399.9 476.61L399.05 476.64L398.2 476.66L397.35 476.69L396.5 476.59L395.65 477.14L394.8 477.68L393.95 477.82L393.1 478.11L392.25 478.6L391.4 479.16L390.55 478.8L389.7 477.14L388.85 478L388 478.51L387.15 479.01L386.3 479.54L385.45 479.76L384.6 480.84L383.75 478.55L382.9 476.85L382.05 477.53L381.2 478.32L380.35 479.08L379.5 479.96L378.65 479.69L377.8 479.94L376.95 480.17L376.1 476.66Z" fill="#450e0b"/>
<line x1="376.1" y1="476.25" x2="485.9" y2="476.25" stroke="#450e0b" stroke-width="0.8"/>
<path d="M380.4 454.05L388.6 458.35L380.4 462.65Z" fill="#861c16"/>
<text transform="translate(393.7 462.75) scale(0.915 1)" font-size="11" fill="#2b0907" stroke="#2b0907" stroke-width="0.22">TrashLoop1</text>
</g>
<rect x="376.1" y="484.6" width="109.8" height="34.5" fill="#d92e24"/>
<clipPath id="cl3_2"><rect x="376.1" y="484.6" width="109.8" height="34.5"/></clipPath>
<g clip-path="url(#cl3_2)">
<path d="M376.1 510.84L376.95 508.76L377.8 509.52L378.65 510.38L379.5 511.09L380.35 508.62L381.2 507.92L382.05 509.38L382.9 509.17L383.75 510.46L384.6 510.97L385.45 510.14L386.3 509.4L387.15 511.23L388 508.99L388.85 511.06L389.7 510.96L390.55 511.13L391.4 505.48L392.25 507.39L393.1 505.96L393.95 508.44L394.8 511.05L395.65 510.55L396.5 510.16L397.35 511.25L398.2 508.04L399.05 510.57L399.9 510.97L400.75 507.13L401.6 510.81L402.45 505.4L403.3 509.53L404.15 509.22L405 510.51L405.85 510.22L406.7 511.15L407.55 511.3L408.4 508.08L409.25 510.78L410.1 507.42L410.95 510.59L411.8 504.96L412.65 506.07L413.5 507.86L414.35 508.4L415.2 509.83L416.05 509.34L416.9 511.23L417.75 510.15L418.6 507.65L419.45 510.71L420.3 505.58L421.15 505.84L422 509.78L422.85 510.21L423.7 510.11L424.55 510.59L425.4 507.86L426.25 510.65L427.1 511.23L427.95 511.06L428.8 507.87L429.65 504.81L430.5 509.15L431.35 509.33L432.2 509.29L433.05 508.55L433.9 511.03L434.75 509.89L435.6 510.04L436.45 509.44L437.3 510.89L438.15 510.78L439 510.02L439.85 505.44L440.7 510.11L441.55 509.02L442.4 510.67L443.25 511.22L444.1 511.3L444.95 508.78L445.8 508.54L446.65 510.26L447.5 508.1L448.35 507.86L449.2 505.74L450.05 505.53L450.9 510.06L451.75 506.9L452.6 507.79L453.45 509.97L454.3 508.36L455.15 510.03L456 510.24L456.85 510.54L457.7 506.01L458.55 510.7L459.4 510.95L460.25 507.61L461.1 508.46L461.95 510.28L462.8 508.79L463.65 511.28L464.5 510.84L465.35 510.56L466.2 509.78L467.05 510.68L467.9 510.89L468.75 510.17L469.6 506.88L470.45 507.02L471.3 509.11L472.15 510.4L473 510.98L473.85 507.19L474.7 509.49L475.55 507.68L476.4 510.93L477.25 510.56L478.1 506.77L478.95 507.75L479.8 507.81L480.65 509.82L481.5 510.57L482.35 509.88L483.2 507.95L484.05 510.47L484.9 509.09L485.75 510.32L485.75 513.23L484.9 514.11L484.05 513.06L483.2 515.63L482.35 513.44L481.5 512.95L480.65 513.67L479.8 515.71L478.95 515.6L478.1 516.27L477.25 512.93L476.4 512.66L475.55 515.86L474.7 513.81L473.85 515.78L473 512.51L472.15 513L471.3 514.27L470.45 515.96L469.6 516.62L468.75 513.34L467.9 512.59L467.05 512.84L466.2 513.61L465.35 512.95L464.5 512.65L463.65 512.26L462.8 514.44L461.95 513.17L461.1 514.99L460.25 515.71L459.4 512.53L458.55 512.85L457.7 517.48L456.85 513.02L456 513.31L455.15 513.3L454.3 514.97L453.45 513.37L452.6 515.66L451.75 516.09L450.9 513.46L450.05 517.37L449.2 517.58L448.35 515.34L447.5 514.97L446.65 513.2L445.8 514.73L444.95 514.78L444.1 512.25L443.25 512.33L442.4 512.85L441.55 514.56L440.7 513.26L439.85 517.78L439 513.45L438.15 512.78L437.3 512.7L436.45 513.92L435.6 513.49L434.75 513.57L433.9 512.52L433.05 514.6L432.2 514.24L431.35 514.26L430.5 514.19L429.65 518.08L428.8 515.72L427.95 512.44L427.1 512.29L426.25 512.79L425.4 515.63L424.55 512.97L423.7 513.35L422.85 513.3L422 513.52L421.15 517.44L420.3 517.5L419.45 512.81L418.6 515.57L417.75 513.3L416.9 512.31L416.05 513.91L415.2 513.6L414.35 514.82L413.5 515.57L412.65 517.37L411.8 518.35L410.95 512.91L410.1 515.68L409.25 512.73L408.4 515.24L407.55 512.27L406.7 512.45L405.85 513.16L405 512.99L404.15 514.18L403.3 513.98L402.45 518.09L401.6 512.76L400.75 516.21L399.9 512.6L399.05 512.97L398.2 515.48L397.35 512.33L396.5 513.36L395.65 512.91L394.8 512.54L393.95 514.85L393.1 517.31L392.25 516.09L391.4 518.08L390.55 512.47L389.7 512.52L388.85 512.47L388 514.32L387.15 512.32L386.3 513.9L385.45 513.35L384.6 512.51L383.75 513L382.9 514.41L382.05 514.13L381.2 515.37L380.35 514.56L379.5 512.51L378.65 513.16L377.8 513.81L376.95 514.53L376.1 512.71Z" fill="#450e0b"/>
<line x1="376.1" y1="511.8" x2="485.9" y2="511.8" stroke="#450e0b" stroke-width="0.8"/>
<path d="M380.4 489.6L388.6 493.9L380.4 498.2Z" fill="#861c16"/>
<text transform="translate(393.7 498.3) scale(0.915 1)" font-size="11" fill="#2b0907" stroke="#2b0907" stroke-width="0.22">TrashLoop2b</text>
</g>
<rect x="376.1" y="520.15" width="109.8" height="26.7" fill="#ea615c"/>
<clipPath id="cl3_3"><rect x="376.1" y="520.15" width="109.8" height="26.7"/></clipPath>
<g clip-path="url(#cl3_3)">
<path d="M376.1 546.95L376.95 544.03L377.8 543.29L378.65 542.74L379.5 544.47L380.35 544.49L381.2 544.84L382.05 546.09L382.9 546.68L383.75 544.77L384.6 543.51L385.45 543.49L386.3 543.63L387.15 544.51L388 544.9L388.85 545.94L389.7 546.57L390.55 545.12L391.4 544.11L392.25 544.1L393.1 544.87L393.95 545.19L394.8 545.91L395.65 546.27L396.5 547L397.35 546.98L398.2 546.92L399.05 546.91L399.9 546.96L400.75 547L401.6 546.98L402.45 546.99L403.3 546.74L404.15 543.01L405 543.26L405.85 542.81L406.7 543.5L407.55 545.02L408.4 545.34L409.25 545.99L410.1 546.92L410.95 544.51L411.8 542.21L412.65 543.94L413.5 543.85L414.35 544.93L415.2 545.12L416.05 545.64L416.9 546.69L417.75 544.96L418.6 544.64L419.45 544.55L420.3 545.41L421.15 545.73L422 545.92L422.85 546.3L423.7 546.96L424.55 546.96L425.4 546.93L426.25 547L427.1 546.93L427.95 546.99L428.8 546.93L429.65 546.88L430.5 546.35L431.35 542.93L432.2 542.69L433.05 543.93L433.9 544.32L434.75 544.22L435.6 545.01L436.45 546.26L437.3 546.92L438.15 543.47L439 543.34L439.85 543.33L440.7 544.58L441.55 544.77L442.4 545.14L443.25 545.91L444.1 546.24L444.95 544.64L445.8 544.4L446.65 544.3L447.5 545L448.35 545.55L449.2 546.04L450.05 546.37L450.9 546.93L451.75 547.01L452.6 546.9L453.45 546.97L454.3 546.95L455.15 546.99L456 546.95L456.85 546.97L457.7 545.9L458.55 542.39L459.4 543.56L460.25 543.15L461.1 544.68L461.95 544.52L462.8 545.26L463.65 546.22L464.5 546.62L465.35 543.92L466.2 542.65L467.05 543.66L467.9 544.44L468.75 544.3L469.6 545.44L470.45 546.12L471.3 545.81L472.15 544.06L473 544.12L473.85 545.01L474.7 544.87L475.55 545.73L476.4 546.27L477.25 546.47L478.1 546.99L478.95 546.88L479.8 546.88L480.65 546.93L481.5 547.02L482.35 547.01L483.2 546.99L484.05 546.96L484.9 545.07L485.75 541.66L485.75 552.49L484.9 549.34L484.05 547.71L483.2 547.67L482.35 547.65L481.5 547.66L480.65 547.75L479.8 547.76L478.95 547.78L478.1 547.69L477.25 548.2L476.4 548.33L475.55 548.94L474.7 549.52L473.85 549.59L473 550.47L472.15 550.58L471.3 548.77L470.45 548.41L469.6 548.99L468.75 550.18L467.9 549.9L467.05 550.83L466.2 551.41L465.35 550.66L464.5 547.99L463.65 548.32L462.8 549.18L461.95 549.95L461.1 549.85L460.25 551.17L459.4 550.67L458.55 551.92L457.7 548.79L456.85 547.7L456 547.74L455.15 547.66L454.3 547.74L453.45 547.72L452.6 547.77L451.75 547.66L450.9 547.74L450.05 548.32L449.2 548.48L448.35 549.06L447.5 549.54L446.65 550.08L445.8 550.17L444.95 549.95L444.1 548.31L443.25 548.73L442.4 549.38L441.55 549.73L440.7 549.97L439.85 550.8L439 551.12L438.15 550.86L437.3 547.78L436.45 548.31L435.6 549.63L434.75 550.36L433.9 550.21L433.05 550.71L432.2 551.33L431.35 551.5L430.5 548.29L429.65 547.8L428.8 547.73L427.95 547.66L427.1 547.72L426.25 547.68L425.4 547.72L424.55 547.69L423.7 547.71L422.85 548.32L422 548.68L421.15 548.74L420.3 549.23L419.45 549.87L418.6 549.97L417.75 549.38L416.9 548.01L416.05 548.96L415.2 549.58L414.35 549.77L413.5 550.77L412.65 550.3L411.8 551.99L410.95 549.86L410.1 547.77L409.25 548.55L408.4 549.12L407.55 549.37L406.7 550.69L405.85 551.85L405 551.42L404.15 551.28L403.3 547.94L402.45 547.68L401.6 547.69L400.75 547.66L399.9 547.72L399.05 547.74L398.2 547.73L397.35 547.7L396.5 547.66L395.65 548.34L394.8 548.78L393.95 549.19L393.1 549.5L392.25 550.5L391.4 550.13L390.55 549.33L389.7 548.11L388.85 548.68L388 549.51L387.15 549.79L386.3 550.67L385.45 550.81L384.6 551.07L383.75 549.92L382.9 548L382.05 548.59L381.2 549.83L380.35 550.16L379.5 550.19L378.65 551.94L377.8 550.86L376.95 550.33L376.1 547.7Z" fill="#4a1f1d"/>
<line x1="376.1" y1="547.35" x2="485.9" y2="547.35" stroke="#4a1f1d" stroke-width="0.8"/>
<rect x="377.6" y="522.15" width="14.7" height="13.9" rx="1.5" fill="#0a0a0a"/>
<path d="M380.7 524.55L389.5 529.1L380.7 533.65Z" fill="#f4f4f4"/>
<text transform="translate(393.7 533.85) scale(0.915 1)" font-size="11" fill="#2e1312" stroke="#2e1312" stroke-width="0.22">TrashLoop3</text>
<line x1="476" y1="520.15" x2="476" y2="546.85" stroke="#ffffff" stroke-width="0.8" opacity="0.75"/>
</g>
<rect x="487" y="413.5" width="109.8" height="34.5" fill="#ff5a05"/>
<clipPath id="cl4_0"><rect x="487" y="413.5" width="109.8" height="34.5"/></clipPath>
<g clip-path="url(#cl4_0)">
<path d="M487 433.35L487.85 433.42L488.7 434.4L489.55 434.43L490.4 433.74L491.25 433.9L492.1 434.03L492.95 434.45L493.8 434.22L494.65 434.29L495.5 434.38L496.35 434.83L497.2 434.64L498.05 434.74L498.9 434.5L499.75 434.33L500.6 434.43L501.45 434.86L502.3 435L503.15 435.22L504 435.47L504.85 435.54L505.7 435.24L506.55 435.42L507.4 435.43L508.25 435.08L509.1 435.44L509.95 435.47L510.8 435.78L511.65 436.01L512.5 435.84L513.35 436.04L514.2 435.82L515.05 435.53L515.9 435.83L516.75 436.24L517.6 435.8L518.45 435.93L519.3 436.04L520.15 435.99L521 436.15L521.85 436.19L522.7 436.54L523.55 436.2L524.4 436.28L525.25 436.83L526.1 436.53L526.95 436.62L527.8 436.83L528.65 436.85L529.5 436.94L530.35 436.75L531.2 437.05L532.05 436.93L532.9 437.25L533.75 437.03L534.6 437.08L535.45 437.37L536.3 437.38L537.15 437.26L538 437.42L538.85 437.59L539.7 437.78L540.55 437.79L541.4 437.68L542.25 437.97L543.1 437.71L543.95 438.04L544.8 437.83L545.65 438.14L546.5 437.94L547.35 438.1L548.2 438.23L549.05 438.29L549.9 438.3L550.75 438.38L551.6 438.53L552.45 438.62L553.3 438.58L554.15 438.5L555 438.66L555.85 438.88L556.7 438.72L557.55 438.8L558.4 438.81L559.25 439.06L560.1 438.97L560.95 439.2L561.8 439.11L562.65 439.25L563.5 439.32L564.35 439.23L565.2 439.45L566.05 439.42L566.9 439.41L567.75 439.58L568.6 439.63L569.45 439.58L570.3 439.7L571.15 439.72L572 439.86L572.85 439.87L573.7 439.94L574.55 439.94L575.4 440.05L576.25 440.02L577.1 440.15L577.95 440.14L578.8 440.25L579.65 440.28L580.5 440.29L581.35 440.37L582.2 440.37L583.05 440.35L583.9 440.36L584.75 440.38L585.6 440.33L586.45 440.37L587.3 440.38L588.15 440.36L589 440.35L589.85 440.34L590.7 440.38L591.55 440.36L592.4 440.38L593.25 440.36L594.1 440.34L594.95 440.34L595.8 440.34L596.65 440.34L596.65 441.05L595.8 441.05L594.95 441.03L594.1 441.02L593.25 441.02L592.4 440.99L591.55 440.99L590.7 441L589.85 441.05L589 441L588.15 441.02L587.3 440.99L586.45 441L585.6 441.02L584.75 441.02L583.9 441L583.05 441.03L582.2 441L581.35 440.98L580.5 441.08L579.65 441.07L578.8 441.09L577.95 441.18L577.1 441.18L576.25 441.29L575.4 441.31L574.55 441.41L573.7 441.45L572.85 441.52L572 441.54L571.15 441.57L570.3 441.61L569.45 441.7L568.6 441.7L567.75 441.76L566.9 441.95L566.05 441.93L565.2 441.81L564.35 442.04L563.5 441.99L562.65 441.93L561.8 442.06L560.95 442.07L560.1 442.2L559.25 442.27L558.4 442.37L557.55 442.34L556.7 442.44L555.85 442.31L555 442.5L554.15 442.74L553.3 442.65L552.45 442.57L551.6 442.75L550.75 442.75L549.9 443.07L549.05 443.1L548.2 443.07L547.35 443.08L546.5 443.26L545.65 443.1L544.8 443.16L543.95 443.13L543.1 443.48L542.25 443.1L541.4 443.31L540.55 443.53L539.7 443.35L538.85 443.58L538 443.94L537.15 443.93L536.3 443.67L535.45 444.02L534.6 443.97L533.75 443.83L532.9 443.99L532.05 443.96L531.2 443.97L530.35 444.55L529.5 444.28L528.65 443.98L527.8 444.25L526.95 444.42L526.1 444.55L525.25 444.11L524.4 444.85L523.55 444.57L522.7 444.42L521.85 444.78L521 445.21L520.15 444.76L519.3 445.19L518.45 444.89L517.6 445.28L516.75 444.75L515.9 445.18L515.05 445.68L514.2 445.14L513.35 444.75L512.5 444.92L511.65 444.75L510.8 445.5L509.95 445.65L509.1 445.93L508.25 446.06L507.4 445.2L506.55 445.71L505.7 445.98L504.85 445.65L504 445.53L503.15 445.65L502.3 445.93L501.45 446.37L500.6 446.28L499.75 446.62L498.9 446.41L498.05 446.62L497.2 446.58L496.35 446.51L495.5 446.87L494.65 446.44L493.8 446.43L492.95 446.47L492.1 446.63L491.25 446.91L490.4 447.33L489.55 446.9L488.7 446.61L487.85 447.78L487 447.06Z" fill="#511c01"/>
<line x1="487" y1="440.7" x2="596.8" y2="440.7" stroke="#511c01" stroke-width="0.8"/>
<rect x="488.5" y="415.5" width="14.7" height="13.9" rx="1.5" fill="#0a0a0a"/>
<path d="M491.6 417.9L500.4 422.45L491.6 427Z" fill="#f4f4f4"/>
<text transform="translate(504.6 427.2) scale(0.915 1)" font-size="11" fill="#331201" stroke="#331201" stroke-width="0.22">deceleratefall</text>
<line x1="544.2" y1="413.5" x2="544.2" y2="448" stroke="#ffffff" stroke-width="0.8" opacity="0.75"/>
</g>
<rect x="487" y="449.05" width="109.8" height="34.5" fill="#ff5a05"/>
<clipPath id="cl4_1"><rect x="487" y="449.05" width="109.8" height="34.5"/></clipPath>
<g clip-path="url(#cl4_1)">
<path d="M487 474.45L487.85 473.75L488.7 473.37L489.55 473.04L490.4 472.79L491.25 472.01L492.1 471.75L492.95 471.17L493.8 471.11L494.65 470.43L495.5 470.52L496.35 469.7L497.2 469.43L498.05 469.46L498.9 469.41L499.75 469.33L500.6 469.9L501.45 469.61L502.3 469.43L503.15 470.03L504 469.58L504.85 469.77L505.7 469.69L506.55 470.24L507.4 470.53L508.25 469.96L509.1 470.03L509.95 470.42L510.8 470.8L511.65 470.77L512.5 470.47L513.35 470.83L514.2 470.35L515.05 470.72L515.9 471.1L516.75 470.81L517.6 471.11L518.45 470.73L519.3 470.83L520.15 471.2L521 471.17L521.85 471.2L522.7 471.2L523.55 471.15L524.4 471.89L525.25 471.72L526.1 471.63L526.95 471.9L527.8 471.77L528.65 472.17L529.5 471.73L530.35 472.02L531.2 472.35L532.05 472.08L532.9 472.36L533.75 472.49L534.6 472.39L535.45 472.65L536.3 472.68L537.15 472.38L538 472.54L538.85 472.98L539.7 472.64L540.55 473.1L541.4 473L542.25 472.79L543.1 473L543.95 473.21L544.8 473.24L545.65 473.3L546.5 473.48L547.35 473.17L548.2 473.64L549.05 473.55L549.9 473.48L550.75 473.69L551.6 473.53L552.45 473.87L553.3 473.67L554.15 473.77L555 473.92L555.85 473.91L556.7 474.12L557.55 474.06L558.4 474.14L559.25 474.29L560.1 474.37L560.95 474.37L561.8 474.51L562.65 474.66L563.5 474.55L564.35 474.73L565.2 474.74L566.05 474.74L566.9 474.93L567.75 475.02L568.6 475.06L569.45 475.03L570.3 475.13L571.15 475.21L572 475.24L572.85 475.23L573.7 475.38L574.55 475.42L575.4 475.42L576.25 475.51L577.1 475.61L577.95 475.64L578.8 475.7L579.65 475.78L580.5 475.82L581.35 475.88L582.2 475.89L583.05 475.92L583.9 475.9L584.75 475.88L585.6 475.88L586.45 475.91L587.3 475.9L588.15 475.92L589 475.91L589.85 475.91L590.7 475.89L591.55 475.88L592.4 475.92L593.25 475.93L594.1 475.91L594.95 475.93L595.8 475.93L596.65 475.89L596.65 476.56L595.8 476.56L594.95 476.54L594.1 476.59L593.25 476.56L592.4 476.54L591.55 476.57L590.7 476.61L589.85 476.57L589 476.56L588.15 476.57L587.3 476.59L586.45 476.56L585.6 476.59L584.75 476.57L583.9 476.57L583.05 476.54L582.2 476.59L581.35 476.6L580.5 476.63L579.65 476.69L578.8 476.73L577.95 476.78L577.1 476.86L576.25 476.93L575.4 477.07L574.55 477.04L573.7 477.08L572.85 477.14L572 477.24L571.15 477.15L570.3 477.3L569.45 477.45L568.6 477.43L567.75 477.46L566.9 477.46L566.05 477.69L565.2 477.71L564.35 477.57L563.5 477.93L562.65 477.82L561.8 477.84L560.95 478.07L560.1 477.98L559.25 478L558.4 478.27L557.55 478.13L556.7 478.32L555.85 478.58L555 478.33L554.15 478.71L553.3 478.47L552.45 478.58L551.6 478.68L550.75 478.8L549.9 478.78L549.05 478.92L548.2 478.48L547.35 478.91L546.5 478.94L545.65 479.04L544.8 479.05L543.95 478.85L543.1 479.1L542.25 479.39L541.4 479.03L540.55 479.4L539.7 479.73L538.85 479.5L538 479.79L537.15 479.74L536.3 479.33L535.45 479.7L534.6 479.6L533.75 479.75L532.9 479.83L532.05 480.11L531.2 479.61L530.35 479.89L529.5 480.45L528.65 479.74L527.8 480.41L526.95 480.05L526.1 480.38L525.25 480.2L524.4 480.33L523.55 480.88L522.7 480.71L521.85 480.71L521 481L520.15 481.23L519.3 481.2L518.45 481.07L517.6 480.86L516.75 481.07L515.9 481.07L515.05 481.6L514.2 481.77L513.35 481.01L512.5 481.45L511.65 481.22L510.8 481.25L509.95 481.55L509.1 482.47L508.25 482.12L507.4 481.68L506.55 482L505.7 482.46L504.85 482.54L504 482.29L503.15 482.16L502.3 483.04L501.45 482.06L500.6 482.25L499.75 482.53L498.9 482.13L498.05 482.06L497.2 482.82L496.35 481.93L495.5 481.73L494.65 481.28L493.8 480.9L492.95 480.59L492.1 480.44L491.25 480.35L490.4 479.31L489.55 479.25L488.7 479.09L487.85 478.49L487 477.9Z" fill="#511c01"/>
<line x1="487" y1="476.25" x2="596.8" y2="476.25" stroke="#511c01" stroke-width="0.8"/>
<path d="M491.3 454.05L499.5 458.35L491.3 462.65Z" fill="#9e3703"/>
<text transform="translate(504.6 462.75) scale(0.915 1)" font-size="11" fill="#331201" stroke="#331201" stroke-width="0.22">dorianreduced_C</text>
</g>
<rect x="487" y="484.6" width="109.8" height="34.5" fill="#ff5a05"/>
<clipPath id="cl4_2"><rect x="487" y="484.6" width="109.8" height="34.5"/></clipPath>
<g clip-path="url(#cl4_2)">
<path d="M487 510.09L487.85 509.68L488.7 509.4L489.55 509.36L490.4 509.21L491.25 508.85L492.1 508.7L492.95 508.24L493.8 508.1L494.65 507.96L495.5 507.8L496.35 507.56L497.2 507.72L498.05 507.36L498.9 507.38L499.75 506.69L500.6 507.15L501.45 506.41L502.3 506.83L503.15 506.18L504 506.32L504.85 506.11L505.7 505.56L506.55 506.16L507.4 505.98L508.25 505.02L509.1 505.26L509.95 505.53L510.8 504.47L511.65 504.51L512.5 505.45L513.35 505.21L514.2 505.58L515.05 505.49L515.9 505.27L516.75 505.79L517.6 505.37L518.45 506.05L519.3 506.02L520.15 505.52L521 505.97L521.85 506.04L522.7 505.97L523.55 506.15L524.4 506.31L525.25 506.69L526.1 506.2L526.95 506.09L527.8 506.17L528.65 506.5L529.5 506.82L530.35 506.89L531.2 506.73L532.05 506.82L532.9 507.31L533.75 507.3L534.6 507.29L535.45 507.27L536.3 507.15L537.15 507.44L538 507.82L538.85 507.39L539.7 507.72L540.55 507.75L541.4 508L542.25 507.96L543.1 508.06L543.95 507.92L544.8 508.37L545.65 508.21L546.5 508.48L547.35 508.29L548.2 508.7L549.05 508.66L549.9 508.7L550.75 508.64L551.6 508.99L552.45 508.88L553.3 509.06L554.15 509.11L555 509.1L555.85 508.99L556.7 509.25L557.55 509.15L558.4 509.52L559.25 509.33L560.1 509.6L560.95 509.73L561.8 509.62L562.65 509.65L563.5 510L564.35 509.99L565.2 509.93L566.05 510.12L566.9 510.21L567.75 510.34L568.6 510.4L569.45 510.34L570.3 510.34L571.15 510.42L572 510.58L572.85 510.74L573.7 510.76L574.55 510.75L575.4 510.82L576.25 510.92L577.1 511.04L577.95 511.07L578.8 511.14L579.65 511.2L580.5 511.3L581.35 511.31L582.2 511.38L583.05 511.47L583.9 511.47L584.75 511.44L585.6 511.47L586.45 511.43L587.3 511.46L588.15 511.45L589 511.45L589.85 511.47L590.7 511.47L591.55 511.47L592.4 511.45L593.25 511.45L594.1 511.47L594.95 511.44L595.8 511.46L596.65 511.47L596.65 512.1L595.8 512.14L594.95 512.14L594.1 512.11L593.25 512.15L592.4 512.15L591.55 512.12L590.7 512.1L589.85 512.11L589 512.15L588.15 512.14L587.3 512.12L586.45 512.13L585.6 512.1L584.75 512.15L583.9 512.11L583.05 512.08L582.2 512.2L581.35 512.28L580.5 512.29L579.65 512.39L578.8 512.45L577.95 512.48L577.1 512.54L576.25 512.6L575.4 512.65L574.55 512.74L573.7 512.74L572.85 512.85L572 512.96L571.15 513.09L570.3 513.18L569.45 513.07L568.6 513.1L567.75 513.2L566.9 513.24L566.05 513.29L565.2 513.51L564.35 513.43L563.5 513.52L562.65 513.67L561.8 513.68L560.95 513.66L560.1 513.9L559.25 514.19L558.4 513.97L557.55 514.42L556.7 514.1L555.85 514.2L555 514.29L554.15 514.27L553.3 514.2L552.45 514.58L551.6 514.34L550.75 514.6L549.9 514.59L549.05 514.92L548.2 514.44L547.35 514.97L546.5 514.76L545.65 514.96L544.8 514.94L543.95 515.22L543.1 515.49L542.25 515.35L541.4 515.43L540.55 515.35L539.7 515.55L538.85 515.95L538 515.69L537.15 515.67L536.3 516.07L535.45 516.23L534.6 516.2L533.75 515.78L532.9 515.98L532.05 516.6L531.2 516.41L530.35 516.47L529.5 516.53L528.65 517.08L527.8 517.06L526.95 517.24L526.1 516.86L525.25 516.71L524.4 516.73L523.55 517.02L522.7 517.07L521.85 516.96L521 516.87L520.15 517.35L519.3 517.18L518.45 516.9L517.6 517.31L516.75 517.63L515.9 517.63L515.05 518.05L514.2 517.64L513.35 517.78L512.5 518.03L511.65 518.98L510.8 518.38L509.95 517.25L509.1 517.99L508.25 518.42L507.4 517.28L506.55 517.26L505.7 517.49L504.85 517.17L504 516.68L503.15 516.92L502.3 516.3L501.45 516.7L500.6 516.03L499.75 516.77L498.9 515.67L498.05 515.71L497.2 515.43L496.35 516.02L495.5 515.51L494.65 515.09L493.8 515.41L492.95 515.3L492.1 514.82L491.25 514.47L490.4 514.29L489.55 513.98L488.7 513.89L487.85 513.88L487 513.47Z" fill="#511c01"/>
<line x1="487" y1="511.8" x2="596.8" y2="511.8" stroke="#511c01" stroke-width="0.8"/>
<path d="M491.3 489.6L499.5 493.9L491.3 498.2Z" fill="#9e3703"/>
<text transform="translate(504.6 498.3) scale(0.915 1)" font-size="11" fill="#331201" stroke="#331201" stroke-width="0.22">dwindle</text>
</g>
<rect x="597.9" y="484.6" width="109.8" height="34.5" fill="#d99d10"/>
<clipPath id="cl5_2"><rect x="597.9" y="484.6" width="109.8" height="34.5"/></clipPath>
<g clip-path="url(#cl5_2)">
<line x1="612.2" y1="506.8" x2="615.1" y2="506.8" stroke="#2b1f03" stroke-width="0.9"/>
<line x1="618.3" y1="506.8" x2="621.9" y2="506.8" stroke="#2b1f03" stroke-width="0.9"/>
<line x1="666.7" y1="506.8" x2="670.3" y2="506.8" stroke="#2b1f03" stroke-width="0.9"/>
<line x1="673.9" y1="506.8" x2="677.6" y2="506.8" stroke="#2b1f03" stroke-width="0.9"/>
<line x1="626.8" y1="513.5" x2="640.1" y2="513.5" stroke="#2b1f03" stroke-width="0.9"/>
<line x1="681.2" y1="513.5" x2="689.7" y2="513.5" stroke="#2b1f03" stroke-width="0.9"/>
<line x1="598.9" y1="515.2" x2="609.8" y2="515.2" stroke="#2b1f03" stroke-width="0.9"/>
<line x1="653.4" y1="515.2" x2="666.7" y2="515.2" stroke="#2b1f03" stroke-width="0.9"/>
<line x1="641.3" y1="512.8" x2="643.1" y2="512.8" stroke="#2b1f03" stroke-width="0.9"/>
<line x1="645.4" y1="512.8" x2="646.9" y2="512.8" stroke="#2b1f03" stroke-width="0.9"/>
<line x1="690.9" y1="512" x2="693.3" y2="512" stroke="#2b1f03" stroke-width="0.9"/>
<line x1="695.8" y1="511" x2="698.9" y2="511" stroke="#2b1f03" stroke-width="0.9"/>
<line x1="698.9" y1="511.8" x2="702.9" y2="511.8" stroke="#2b1f03" stroke-width="0.9"/>
<line x1="703.4" y1="513" x2="705.4" y2="513" stroke="#2b1f03" stroke-width="0.9"/>
<line x1="615.1" y1="516.6" x2="617.6" y2="516.6" stroke="#2b1f03" stroke-width="0.9"/>
<line x1="621.9" y1="516.6" x2="624.3" y2="516.6" stroke="#2b1f03" stroke-width="0.9"/>
<line x1="670.3" y1="516.6" x2="672.7" y2="516.6" stroke="#2b1f03" stroke-width="0.9"/>
<line x1="677.1" y1="516.6" x2="679.5" y2="516.6" stroke="#2b1f03" stroke-width="0.9"/>
<rect x="599.4" y="486.6" width="14.7" height="13.9" rx="1.5" fill="#0a0a0a"/>
<path d="M602.5 489L611.3 493.55L602.5 498.1Z" fill="#f4f4f4"/>
<text transform="translate(615.5 498.3) scale(0.915 1)" font-size="11" fill="#2b1f03" stroke="#2b1f03" stroke-width="0.22">Vita 03 Lead</text>
<line x1="648" y1="484.6" x2="648" y2="519.1" stroke="#ffffff" stroke-width="0.8" opacity="0.75"/>
</g>
<rect x="708.8" y="413.5" width="109.8" height="34.5" fill="#73981a"/>
<clipPath id="cl6_0"><rect x="708.8" y="413.5" width="109.8" height="34.5"/></clipPath>
<g clip-path="url(#cl6_0)">
<line x1="708.8" y1="435.3" x2="763.2" y2="435.3" stroke="#171e05" stroke-width="1"/>
<line x1="708.8" y1="437.4" x2="763.2" y2="437.4" stroke="#171e05" stroke-width="1"/>
<line x1="708.8" y1="439.6" x2="763.2" y2="439.6" stroke="#171e05" stroke-width="1"/>
<line x1="708.8" y1="441.8" x2="763.2" y2="441.8" stroke="#171e05" stroke-width="1"/>
<line x1="708.8" y1="443.8" x2="763.2" y2="443.8" stroke="#171e05" stroke-width="1"/>
<line x1="708.8" y1="445.9" x2="763.2" y2="445.9" stroke="#171e05" stroke-width="1"/>
<line x1="763.8" y1="441.7" x2="818.6" y2="441.7" stroke="#0c1002" stroke-width="1.8"/>
<line x1="748.8" y1="442.4" x2="763.8" y2="442.4" stroke="#171e05" stroke-width="1.2"/>
<line x1="763.8" y1="443.8" x2="818.6" y2="443.8" stroke="#171e05" stroke-width="1"/>
<line x1="763.8" y1="445.9" x2="818.6" y2="445.9" stroke="#171e05" stroke-width="1"/>
<line x1="763.8" y1="447.4" x2="818.6" y2="447.4" stroke="#171e05" stroke-width="1"/>
<line x1="801" y1="436.1" x2="806" y2="436.1" stroke="#171e05" stroke-width="1.1"/>
<line x1="806" y1="434.9" x2="811" y2="434.9" stroke="#171e05" stroke-width="1.1"/>
<line x1="811" y1="433.8" x2="818.8" y2="433.8" stroke="#171e05" stroke-width="1.1"/>
<path d="M713.1 418.5L721.3 422.8L713.1 427.1Z" fill="#475e10"/>
<text transform="translate(726.4 427.2) scale(0.915 1)" font-size="11" fill="#171e05" stroke="#171e05" stroke-width="0.22">Mella 01 Chords</text>
</g>
<rect x="708.8" y="449.05" width="109.8" height="34.5" fill="#73981a"/>
<clipPath id="cl6_1"><rect x="708.8" y="449.05" width="109.8" height="34.5"/></clipPath>
<g clip-path="url(#cl6_1)">
<line x1="709.8" y1="470.65" x2="733.8" y2="470.65" stroke="#171e05" stroke-width="1.1"/>
<line x1="736.8" y1="470.65" x2="760.8" y2="470.65" stroke="#171e05" stroke-width="1.1"/>
<line x1="763.8" y1="470.65" x2="787.8" y2="470.65" stroke="#171e05" stroke-width="1.1"/>
<line x1="709.8" y1="473.25" x2="733.8" y2="473.25" stroke="#171e05" stroke-width="1.1"/>
<line x1="736.8" y1="473.25" x2="760.8" y2="473.25" stroke="#171e05" stroke-width="1.1"/>
<line x1="763.8" y1="473.25" x2="787.8" y2="473.25" stroke="#171e05" stroke-width="1.1"/>
<line x1="709.8" y1="476.05" x2="733.8" y2="476.05" stroke="#171e05" stroke-width="1.1"/>
<line x1="736.8" y1="476.05" x2="760.8" y2="476.05" stroke="#171e05" stroke-width="1.1"/>
<line x1="763.8" y1="476.05" x2="787.8" y2="476.05" stroke="#171e05" stroke-width="1.1"/>
<line x1="709.8" y1="478.85" x2="733.8" y2="478.85" stroke="#171e05" stroke-width="1.1"/>
<line x1="736.8" y1="478.85" x2="760.8" y2="478.85" stroke="#171e05" stroke-width="1.1"/>
<line x1="763.8" y1="478.85" x2="787.8" y2="478.85" stroke="#171e05" stroke-width="1.1"/>
<line x1="709.8" y1="481.45" x2="733.8" y2="481.45" stroke="#171e05" stroke-width="1.1"/>
<line x1="736.8" y1="481.45" x2="760.8" y2="481.45" stroke="#171e05" stroke-width="1.1"/>
<line x1="763.8" y1="481.45" x2="787.8" y2="481.45" stroke="#171e05" stroke-width="1.1"/>
<line x1="791.8" y1="472.55" x2="806.8" y2="472.55" stroke="#171e05" stroke-width="1.4"/>
<line x1="791.8" y1="474.65" x2="806.8" y2="474.65" stroke="#171e05" stroke-width="1.4"/>
<line x1="791.8" y1="476.75" x2="806.8" y2="476.75" stroke="#171e05" stroke-width="1.4"/>
<line x1="791.8" y1="478.85" x2="806.8" y2="478.85" stroke="#171e05" stroke-width="1.4"/>
<line x1="811.8" y1="469.45" x2="816.3" y2="469.45" stroke="#171e05" stroke-width="1.4"/>
<line x1="811.8" y1="471.85" x2="816.3" y2="471.85" stroke="#171e05" stroke-width="1.4"/>
<line x1="811.8" y1="474.25" x2="816.3" y2="474.25" stroke="#171e05" stroke-width="1.4"/>
<path d="M713.1 454.05L721.3 458.35L713.1 462.65Z" fill="#475e10"/>
<text transform="translate(726.4 462.75) scale(0.915 1)" font-size="11" fill="#171e05" stroke="#171e05" stroke-width="0.22">Mella 02 Chords</text>
</g>
<rect x="819.7" y="413.5" width="109.8" height="34.5" fill="#3cbb60"/>
<clipPath id="cl7_0"><rect x="819.7" y="413.5" width="109.8" height="34.5"/></clipPath>
<g clip-path="url(#cl7_0)">
<line x1="847.1" y1="437.4" x2="862.1" y2="437.4" stroke="#0c2513" stroke-width="0.9"/>
<line x1="863.7" y1="437.4" x2="873.7" y2="437.4" stroke="#0c2513" stroke-width="0.9"/>
<line x1="875.3" y1="440.7" x2="884.5" y2="440.7" stroke="#0c2513" stroke-width="0.9"/>
<line x1="886.1" y1="440.7" x2="894.5" y2="440.7" stroke="#0c2513" stroke-width="0.9"/>
<line x1="896.1" y1="440.7" x2="904.5" y2="440.7" stroke="#0c2513" stroke-width="0.9"/>
<line x1="906.1" y1="440.7" x2="916.1" y2="440.7" stroke="#0c2513" stroke-width="0.9"/>
<line x1="917.7" y1="440.7" x2="930.7" y2="440.7" stroke="#0c2513" stroke-width="0.9"/>
<line x1="819.7" y1="443.2" x2="834.7" y2="443.2" stroke="#0c2513" stroke-width="0.9"/>
<line x1="837.1" y1="443.2" x2="846.3" y2="443.2" stroke="#0c2513" stroke-width="0.9"/>
<path d="M824 418.5L832.2 422.8L824 427.1Z" fill="#25733b"/>
<text transform="translate(837.3 427.2) scale(0.915 1)" font-size="11" fill="#0c2513" stroke="#0c2513" stroke-width="0.22">Soulful Chords 01 A</text>
</g>
<rect x="819.7" y="449.05" width="109.8" height="34.5" fill="#3cbb60"/>
<clipPath id="cl7_1"><rect x="819.7" y="449.05" width="109.8" height="34.5"/></clipPath>
<g clip-path="url(#cl7_1)">
<path d="M820.44 478.65h1.1M823.52 479.55h1.1M830.03 476.65h1.1M832.74 476.65h1.1M837.63 477.55h1.1M847.38 478.65h1.1M849.47 476.65h1.1M852.11 476.65h1.1M854.53 476.65h1.1M861.97 479.55h1.1M864.26 478.65h1.1M866.37 478.65h1.1M868.78 477.55h1.1M873.28 477.55h1.1M875.56 477.55h1.1M878.7 479.55h1.1M880.86 479.55h1.1M885.48 478.65h1.1M887.49 476.65h1.1M892.63 476.65h1.1M894.64 476.65h1.1M897.38 479.55h1.1M900.28 479.55h1.1M902.2 473.15h0.9M904.1 473.15h0.9M906 473.15h0.9M907.9 473.15h0.9M909.8 473.15h0.9M911.7 473.15h0.9M913.6 473.15h0.9M915.5 473.15h0.9M917.4 473.15h0.9M919.3 473.15h0.9M921.2 473.15h0.9M923.1 473.15h0.9" fill="none" stroke="#0c2513" stroke-width="0.8"/>
<path d="M824 454.05L832.2 458.35L824 462.65Z" fill="#25733b"/>
<text transform="translate(837.3 462.75) scale(0.915 1)" font-size="11" fill="#0c2513" stroke="#0c2513" stroke-width="0.22">Soulful Chords 01 B</text>
</g>
<rect x="819.7" y="520.15" width="109.8" height="26.7" fill="#3cbb60"/>
<clipPath id="cl7_3"><rect x="819.7" y="520.15" width="109.8" height="26.7"/></clipPath>
<g clip-path="url(#cl7_3)">
<line x1="857.1" y1="542.95" x2="872.9" y2="542.95" stroke="#0c2513" stroke-width="0.9"/>
<line x1="874.5" y1="542.95" x2="878.7" y2="542.95" stroke="#0c2513" stroke-width="0.9"/>
<line x1="880.7" y1="542.95" x2="882.1" y2="542.95" stroke="#0c2513" stroke-width="0.9"/>
<line x1="883.5" y1="542.95" x2="884.9" y2="542.95" stroke="#0c2513" stroke-width="0.9"/>
<line x1="886.3" y1="542.95" x2="887.7" y2="542.95" stroke="#0c2513" stroke-width="0.9"/>
<line x1="901.9" y1="542.95" x2="906.9" y2="542.95" stroke="#0c2513" stroke-width="0.9"/>
<line x1="909.1" y1="542.95" x2="910.7" y2="542.95" stroke="#0c2513" stroke-width="0.9"/>
<line x1="912.5" y1="542.95" x2="914.1" y2="542.95" stroke="#0c2513" stroke-width="0.9"/>
<line x1="819.7" y1="545.35" x2="828.7" y2="545.35" stroke="#0c2513" stroke-width="0.9"/>
<path d="M824 525.15L832.2 529.45L824 533.75Z" fill="#25733b"/>
<text transform="translate(837.3 533.85) scale(0.915 1)" font-size="11" fill="#0c2513" stroke="#0c2513" stroke-width="0.22">Soulful Chords 02 B</text>
</g>
<rect x="930.6" y="413.5" width="109.8" height="34.5" fill="#5cffe2"/>
<clipPath id="cl8_0"><rect x="930.6" y="413.5" width="109.8" height="34.5"/></clipPath>
<g clip-path="url(#cl8_0)">
<path d="M931.6 440.24L932.45 439.46L933.3 438.56L934.15 437.44L935 437.16L935.85 438.33L936.7 439.23L937.55 438.4L938.4 438.47L939.25 438.13L940.1 436.89L940.95 437.08L941.8 436.17L942.65 436.33L943.5 435.74L944.35 436.34L945.2 435.3L946.05 434.76L946.9 435.39L947.75 435.06L948.6 435.36L949.45 436.64L950.3 435.79L951.15 436.41L952 437.2L952.85 437.9L953.7 437.37L954.55 437.98L955.4 437.24L956.25 436.54L957.1 436.3L957.95 435.59L958.8 436.15L959.65 435.28L960.5 435.83L961.35 435.04L962.2 435.33L963.05 436.87L963.9 437.12L964.75 437.38L965.6 436.93L966.45 437.17L967.3 436.49L968.15 436.57L969 435.86L969.85 435.72L970.7 435.48L971.55 434.74L972.4 434.53L973.25 433.69L974.1 434.1L974.95 433.57L975.8 433.82L976.65 433.71L977.5 434.62L978.35 435.9L979.2 434.93L980.05 435.17L980.9 435.72L981.75 436.66L982.6 436.9L983.45 437.32L984.3 436.12L985.15 436.18L986 436.4L986.85 436.61L987.7 435.14L988.55 434.88L989.4 436.51L990.25 435.43L991.1 436.29L991.95 436.95L992.8 437.03L993.65 436.76L994.5 437.06L995.35 438.33L996.2 438.15L997.05 438.74L997.9 438.04L998.75 438.28L999.6 437.68L1000.45 437.5L1001.3 437.92L1002.15 437.42L1003 438.1L1003.85 438.36L1004.7 437.92L1005.55 438.53L1006.4 438.47L1007.25 438.4L1008.1 438.37L1008.95 438.86L1009.8 439.08L1010.65 438.69L1011.5 439.19L1012.35 439.02L1013.2 439.23L1014.05 439.61L1014.9 439.64L1015.75 439.59L1016.6 439.53L1017.45 439.55L1018.3 439.57L1019.15 439.56L1020 439.47L1020.85 439.67L1021.7 439.74L1022.55 439.69L1023.4 439.9L1024.25 439.94L1025.1 439.82L1025.95 440.01L1026.8 440.07L1027.65 440.24L1028.5 440.22L1029.35 440.25L1030.2 440.39L1031.05 440.36L1031.9 440.38L1032.75 440.44L1033.6 440.38L1034.45 440.39L1035.3 440.37L1036.15 440.41L1037 440.37L1037.85 440.36L1038.7 440.44L1038.7 440.92L1037.85 441.02L1037 441.03L1036.15 440.96L1035.3 441L1034.45 440.99L1033.6 440.99L1032.75 440.94L1031.9 440.99L1031.05 441.01L1030.2 441L1029.35 441.1L1028.5 441.13L1027.65 441.14L1026.8 441.24L1025.95 441.35L1025.1 441.54L1024.25 441.38L1023.4 441.4L1022.55 441.68L1021.7 441.55L1020.85 441.61L1020 441.83L1019.15 441.79L1018.3 441.68L1017.45 441.74L1016.6 441.75L1015.75 441.78L1014.9 441.67L1014.05 441.77L1013.2 441.99L1012.35 442.22L1011.5 442.13L1010.65 442.67L1009.8 442.19L1008.95 442.33L1008.1 442.72L1007.25 442.84L1006.4 442.66L1005.55 442.81L1004.7 443.42L1003.85 442.75L1003 443.02L1002.15 443.89L1001.3 443.33L1000.45 443.8L999.6 443.43L998.75 442.81L997.9 443.07L997.05 442.6L996.2 442.97L995.35 442.84L994.5 444.02L993.65 444.3L992.8 444.04L991.95 444.41L991.1 444.55L990.25 445.18L989.4 444.86L988.55 446.42L987.7 446.25L986.85 444.44L986 444.97L985.15 445.17L984.3 444.75L983.45 443.95L982.6 444.41L981.75 444.54L980.9 445.32L980.05 445.64L979.2 445.9L978.35 444.95L977.5 445.93L976.65 447.25L975.8 446.84L974.95 447.63L974.1 446.35L973.25 447.6L972.4 446.59L971.55 446.59L970.7 445.84L969.85 445.61L969 445.24L968.15 444.22L967.3 444.75L966.45 443.79L965.6 444.07L964.75 443.85L963.9 444.02L963.05 444.19L962.2 446.02L961.35 446.03L960.5 445.09L959.65 445.52L958.8 445.16L957.95 445.41L957.1 444.96L956.25 444.46L955.4 443.75L954.55 443.23L953.7 443.94L952.85 443.16L952 444.09L951.15 444.94L950.3 445.47L949.45 444.65L948.6 445.25L947.75 446.02L946.9 445.9L946.05 445.79L945.2 445.51L944.35 444.58L943.5 445.3L942.65 444.69L941.8 444.87L940.95 444.19L940.1 443.94L939.25 442.9L938.4 442.64L937.55 442.7L936.7 441.96L935.85 443.06L935 444.16L934.15 443.52L933.3 442.68L932.45 441.81L931.6 441.11Z" fill="#1d5148"/>
<line x1="930.6" y1="440.7" x2="1040.4" y2="440.7" stroke="#1d5148" stroke-width="0.8"/>
<path d="M934.9 418.5L943.1 422.8L934.9 427.1Z" fill="#399e8c"/>
<text transform="translate(948.2 427.2) scale(0.915 1)" font-size="11" fill="#12332d" stroke="#12332d" stroke-width="0.22">Vocal A</text>
<rect x="1022.8" y="419.1" width="6" height="3" fill="#12332d"/>
<rect x="1027.7" y="422.6" width="4.4" height="3.4" fill="#12332d"/>
<rect x="1031.1" y="419.1" width="4" height="3" fill="#12332d"/>
</g>
<rect x="930.6" y="449.05" width="109.8" height="34.5" fill="#4cd6bb"/>
<clipPath id="cl8_1"><rect x="930.6" y="449.05" width="109.8" height="34.5"/></clipPath>
<g clip-path="url(#cl8_1)">
<path d="M931.6 473.72L932.45 473.53L933.3 472.58L934.15 473.01L935 472.12L935.85 472.2L936.7 472.59L937.55 471.92L938.4 472.74L939.25 472.36L940.1 473.12L940.95 473.4L941.8 473.39L942.65 473.42L943.5 474.4L944.35 474.19L945.2 473.57L946.05 472.95L946.9 473.06L947.75 473.05L948.6 472.15L949.45 473.2L950.3 472.07L951.15 472.81L952 473.04L952.85 473.17L953.7 473.08L954.55 472.71L955.4 473.64L956.25 473.5L957.1 473.75L957.95 474.25L958.8 474.41L959.65 474.95L960.5 474.63L961.35 474.11L962.2 473.29L963.05 473.29L963.9 473.35L964.75 473.2L965.6 473.65L966.45 474.2L967.3 474.35L968.15 474.51L969 474.4L969.85 473.7L970.7 473.25L971.55 472.33L972.4 471.98L973.25 472.19L974.1 470.68L974.95 471.88L975.8 471.18L976.65 470.5L977.5 471.69L978.35 471.26L979.2 472.31L980.05 471.67L980.9 472.02L981.75 472.43L982.6 471.37L983.45 471.71L984.3 470.53L985.15 470.31L986 470.04L986.85 470.16L987.7 469.32L988.55 469.26L989.4 470.54L990.25 470.57L991.1 472.13L991.95 471.61L992.8 472.3L993.65 472.52L994.5 472.23L995.35 472.43L996.2 471.87L997.05 471.11L997.9 472.12L998.75 471.42L999.6 472.15L1000.45 472.57L1001.3 473.09L1002.15 472.77L1003 473.99L1003.85 473.94L1004.7 473.65L1005.55 473.03L1006.4 473.72L1007.25 473.26L1008.1 473.1L1008.95 472.73L1009.8 472.83L1010.65 472.86L1011.5 473.57L1012.35 473.56L1013.2 473.76L1014.05 473.48L1014.9 473.64L1015.75 474.46L1016.6 474.63L1017.45 474.78L1018.3 474.96L1019.15 475.02L1020 475.08L1020.85 475.17L1021.7 475.25L1022.55 475.05L1023.4 475.07L1024.25 474.98L1025.1 474.83L1025.95 474.97L1026.8 475.08L1027.65 475.08L1028.5 475.11L1029.35 475.4L1030.2 475.17L1031.05 475.29L1031.9 475.34L1032.75 475.44L1033.6 475.62L1034.45 475.68L1035.3 475.8L1036.15 475.77L1037 475.92L1037.85 475.96L1038.7 475.97L1038.7 476.49L1037.85 476.51L1037 476.54L1036.15 476.66L1035.3 476.64L1034.45 476.74L1033.6 476.82L1032.75 476.94L1031.9 477.14L1031.05 477.16L1030.2 477.19L1029.35 477.01L1028.5 477.27L1027.65 477.31L1026.8 477.27L1025.95 477.5L1025.1 477.67L1024.25 477.42L1023.4 477.34L1022.55 477.28L1021.7 477.11L1020.85 477.22L1020 477.29L1019.15 477.45L1018.3 477.38L1017.45 477.51L1016.6 477.86L1015.75 477.91L1014.9 478.52L1014.05 478.83L1013.2 478.37L1012.35 478.75L1011.5 478.92L1010.65 479.57L1009.8 479.51L1008.95 479.38L1008.1 479.1L1007.25 478.87L1006.4 478.69L1005.55 479.25L1004.7 478.77L1003.85 478.33L1003 478.25L1002.15 479.63L1001.3 479.4L1000.45 479.84L999.6 480.23L998.75 480.94L997.9 480.22L997.05 480.79L996.2 480.31L995.35 479.7L994.5 479.69L993.65 479.43L992.8 479.77L991.95 480.37L991.1 480.18L990.25 481.89L989.4 481.49L988.55 483.18L987.7 483.17L986.85 482.3L986 481.86L985.15 481.5L984.3 481.3L983.45 480.24L982.6 480.55L981.75 479.86L980.9 480.42L980.05 480.72L979.2 479.88L978.35 480.98L977.5 480.68L976.65 481.21L975.8 481.06L974.95 480.56L974.1 481.64L973.25 480.16L972.4 480.18L971.55 479.69L970.7 479.15L969.85 478.55L969 478.04L968.15 477.98L967.3 477.98L966.45 478.12L965.6 478.83L964.75 479.17L963.9 478.78L963.05 478.82L962.2 478.84L961.35 478.36L960.5 477.82L959.65 477.38L958.8 478.04L957.95 478.24L957.1 478.62L956.25 478.73L955.4 478.68L954.55 479.33L953.7 478.95L952.85 479.32L952 479.29L951.15 479.45L950.3 480.39L949.45 479.05L948.6 480.27L947.75 479.37L946.9 479.06L946.05 479.18L945.2 478.65L944.35 478.07L943.5 477.99L942.65 478.76L941.8 478.86L940.95 478.73L940.1 479.33L939.25 479.76L938.4 479.48L937.55 480.31L936.7 479.86L935.85 479.95L935 480.33L934.15 479.24L933.3 479.66L932.45 478.78L931.6 478.41Z" fill="#18443b"/>
<line x1="930.6" y1="476.25" x2="1040.4" y2="476.25" stroke="#18443b" stroke-width="0.8"/>
<path d="M934.9 454.05L943.1 458.35L934.9 462.65Z" fill="#2f8473"/>
<text transform="translate(948.2 462.75) scale(0.915 1)" font-size="11" fill="#0f2a25" stroke="#0f2a25" stroke-width="0.22">Vocal B</text>
<rect x="1022.8" y="454.65" width="6" height="3" fill="#0f2a25"/>
<rect x="1027.7" y="458.15" width="4.4" height="3.4" fill="#0f2a25"/>
<rect x="1031.1" y="454.65" width="4" height="3" fill="#0f2a25"/>
</g>
<rect x="930.6" y="484.6" width="109.8" height="34.5" fill="#4cd6bb"/>
<clipPath id="cl8_2"><rect x="930.6" y="484.6" width="109.8" height="34.5"/></clipPath>
<g clip-path="url(#cl8_2)">
<path d="M931.6 510.31L932.45 509.65L933.3 509.23L934.15 508.67L935 509.05L935.85 508.81L936.7 508.82L937.55 508.75L938.4 508.3L939.25 509.21L940.1 509.13L940.95 509.77L941.8 509.73L942.65 509.18L943.5 508.27L944.35 508.05L945.2 508.46L946.05 507.74L946.9 507.69L947.75 506.28L948.6 506.3L949.45 506.35L950.3 506.48L951.15 506.9L952 506.98L952.85 507.66L953.7 508.78L954.55 508.62L955.4 508.85L956.25 508.01L957.1 507.71L957.95 507.43L958.8 507.13L959.65 506.68L960.5 506.68L961.35 506.97L962.2 505.62L963.05 505.84L963.9 505.81L964.75 506.75L965.6 507.44L966.45 507.7L967.3 508.97L968.15 508.9L969 509.6L969.85 509.57L970.7 509.09L971.55 508.27L972.4 508.24L973.25 507.67L974.1 507.31L974.95 507.64L975.8 508.2L976.65 507.99L977.5 508.71L978.35 509.15L979.2 508.88L980.05 508.15L980.9 508.09L981.75 506.67L982.6 505.66L983.45 506.4L984.3 505.53L985.15 505L986 506.91L986.85 506.89L987.7 505.94L988.55 506.35L989.4 507.22L990.25 508.43L991.1 508.62L991.95 508.54L992.8 508.18L993.65 508L994.5 508.57L995.35 507.63L996.2 508.25L997.05 507.89L997.9 508.77L998.75 508.02L999.6 508.74L1000.45 508.97L1001.3 509.75L1002.15 509.79L1003 509.86L1003.85 509.7L1004.7 509.74L1005.55 509.34L1006.4 509.56L1007.25 509.54L1008.1 509.62L1008.95 509.16L1009.8 509.68L1010.65 509.63L1011.5 509.83L1012.35 509.47L1013.2 509.67L1014.05 509.82L1014.9 510.3L1015.75 510.2L1016.6 510.42L1017.45 510.69L1018.3 510.86L1019.15 510.64L1020 511.06L1020.85 510.98L1021.7 510.97L1022.55 510.85L1023.4 511.01L1024.25 510.88L1025.1 510.92L1025.95 510.79L1026.8 511.08L1027.65 511.01L1028.5 511L1029.35 510.92L1030.2 511.09L1031.05 511.15L1031.9 511.16L1032.75 511.29L1033.6 511.39L1034.45 511.36L1035.3 511.35L1036.15 511.43L1037 511.52L1037.85 511.47L1038.7 511.45L1038.7 512.11L1037.85 512.11L1037 512.06L1036.15 512.13L1035.3 512.2L1034.45 512.19L1033.6 512.17L1032.75 512.24L1031.9 512.38L1031.05 512.36L1030.2 512.49L1029.35 512.63L1028.5 512.48L1027.65 512.57L1026.8 512.43L1025.95 512.73L1025.1 512.62L1024.25 512.63L1023.4 512.51L1022.55 512.67L1021.7 512.53L1020.85 512.6L1020 512.44L1019.15 512.93L1018.3 512.63L1017.45 512.8L1016.6 513.06L1015.75 513.17L1014.9 513.11L1014.05 513.59L1013.2 513.76L1012.35 514.09L1011.5 513.77L1010.65 513.66L1009.8 513.77L1008.95 514.1L1008.1 513.92L1007.25 513.83L1006.4 514L1005.55 514.1L1004.7 513.59L1003.85 513.58L1003 513.52L1002.15 513.77L1001.3 513.59L1000.45 514.41L999.6 514.57L998.75 515.21L997.9 514.74L997.05 515.25L996.2 515.2L995.35 515.76L994.5 515L993.65 515.33L992.8 515.38L991.95 514.79L991.1 514.77L990.25 514.98L989.4 516.27L988.55 517.16L987.7 516.89L986.85 516.07L986 516.34L985.15 518.4L984.3 517.64L983.45 516.63L982.6 517.9L981.75 516.39L980.9 515L980.05 514.93L979.2 514.3L978.35 514.34L977.5 514.48L976.65 515.45L975.8 515.33L974.95 515.96L974.1 516.16L973.25 515.57L972.4 515.16L971.55 515.24L970.7 514.39L969.85 513.79L969 513.92L968.15 514.32L967.3 514.34L966.45 515.9L965.6 515.81L964.75 516.3L963.9 517.59L963.05 517.27L962.2 517.05L961.35 515.92L960.5 516.35L959.65 516.4L958.8 516.43L957.95 515.68L957.1 515.8L956.25 515.51L955.4 514.49L954.55 514.98L953.7 514.71L952.85 515.62L952 516.09L951.15 516.3L950.3 517.04L949.45 516.87L948.6 516.64L947.75 516.81L946.9 515.59L946.05 515.36L945.2 514.93L944.35 515L943.5 515.23L942.65 514.1L941.8 513.59L940.95 513.7L940.1 514.19L939.25 514.34L938.4 515.04L937.55 514.63L936.7 514.71L935.85 514.44L935 514.44L934.15 514.76L933.3 514.15L932.45 513.94L931.6 513.07Z" fill="#18443b"/>
<line x1="930.6" y1="511.8" x2="1040.4" y2="511.8" stroke="#18443b" stroke-width="0.8"/>
<path d="M934.9 489.6L943.1 493.9L934.9 498.2Z" fill="#2f8473"/>
<text transform="translate(948.2 498.3) scale(0.915 1)" font-size="11" fill="#0f2a25" stroke="#0f2a25" stroke-width="0.22">Vocal C</text>
<rect x="1022.8" y="490.2" width="6" height="3" fill="#0f2a25"/>
<rect x="1027.7" y="493.7" width="4.4" height="3.4" fill="#0f2a25"/>
<rect x="1031.1" y="490.2" width="4" height="3" fill="#0f2a25"/>
</g>
<rect x="1041.5" y="413.5" width="109.8" height="34.5" fill="#44c8ff"/>
<clipPath id="cl9_0"><rect x="1041.5" y="413.5" width="109.8" height="34.5"/></clipPath>
<g clip-path="url(#cl9_0)">
<line x1="1041.5" y1="437.1" x2="1046.5" y2="437.1" stroke="#123644" stroke-width="1.2"/>
<line x1="1046.5" y1="436.1" x2="1050.5" y2="436.1" stroke="#123644" stroke-width="1.2"/>
<line x1="1050.5" y1="435.6" x2="1054.5" y2="435.6" stroke="#123644" stroke-width="1.2"/>
<line x1="1054.5" y1="436.1" x2="1058.5" y2="436.1" stroke="#123644" stroke-width="1.2"/>
<line x1="1058.5" y1="435.6" x2="1062.5" y2="435.6" stroke="#123644" stroke-width="1.2"/>
<line x1="1062.5" y1="436.4" x2="1067.5" y2="436.4" stroke="#123644" stroke-width="1.2"/>
<line x1="1068.5" y1="436.7" x2="1072.5" y2="436.7" stroke="#123644" stroke-width="1.2"/>
<line x1="1078.5" y1="436.5" x2="1082.5" y2="436.5" stroke="#123644" stroke-width="1.2"/>
<line x1="1082.5" y1="435.1" x2="1089.5" y2="435.1" stroke="#123644" stroke-width="1.2"/>
<line x1="1062.5" y1="439.9" x2="1071.5" y2="439.9" stroke="#123644" stroke-width="1.2"/>
<line x1="1071.5" y1="440.9" x2="1080.5" y2="440.9" stroke="#123644" stroke-width="1.2"/>
<line x1="1089.5" y1="439.7" x2="1096.5" y2="439.7" stroke="#123644" stroke-width="1.2"/>
<line x1="1041.5" y1="442.7" x2="1054.5" y2="442.7" stroke="#123644" stroke-width="1.2"/>
<line x1="1054.5" y1="443.9" x2="1059.5" y2="443.9" stroke="#123644" stroke-width="1.2"/>
<line x1="1071.5" y1="442.9" x2="1081.5" y2="442.9" stroke="#123644" stroke-width="1.2"/>
<line x1="1044.5" y1="445.9" x2="1047.5" y2="445.9" stroke="#123644" stroke-width="1.2"/>
<line x1="1049.5" y1="445.9" x2="1052.5" y2="445.9" stroke="#123644" stroke-width="1.2"/>
<line x1="1076.5" y1="445.7" x2="1080.5" y2="445.7" stroke="#123644" stroke-width="1.2"/>
<line x1="1081.5" y1="444.7" x2="1084.5" y2="444.7" stroke="#123644" stroke-width="1.2"/>
<line x1="1085.5" y1="445.9" x2="1088.5" y2="445.9" stroke="#123644" stroke-width="1.2"/>
<line x1="1097" y1="437.1" x2="1102" y2="437.1" stroke="#123644" stroke-width="1.2"/>
<line x1="1102" y1="436.1" x2="1106" y2="436.1" stroke="#123644" stroke-width="1.2"/>
<line x1="1106" y1="435.6" x2="1110" y2="435.6" stroke="#123644" stroke-width="1.2"/>
<line x1="1110" y1="436.1" x2="1114" y2="436.1" stroke="#123644" stroke-width="1.2"/>
<line x1="1114" y1="435.6" x2="1118" y2="435.6" stroke="#123644" stroke-width="1.2"/>
<line x1="1118" y1="436.4" x2="1123" y2="436.4" stroke="#123644" stroke-width="1.2"/>
<line x1="1124" y1="436.7" x2="1128" y2="436.7" stroke="#123644" stroke-width="1.2"/>
<line x1="1134" y1="436.5" x2="1138" y2="436.5" stroke="#123644" stroke-width="1.2"/>
<line x1="1138" y1="435.1" x2="1145" y2="435.1" stroke="#123644" stroke-width="1.2"/>
<line x1="1118" y1="439.9" x2="1127" y2="439.9" stroke="#123644" stroke-width="1.2"/>
<line x1="1127" y1="440.9" x2="1136" y2="440.9" stroke="#123644" stroke-width="1.2"/>
<line x1="1145" y1="439.7" x2="1152" y2="439.7" stroke="#123644" stroke-width="1.2"/>
<line x1="1097" y1="442.7" x2="1110" y2="442.7" stroke="#123644" stroke-width="1.2"/>
<line x1="1110" y1="443.9" x2="1115" y2="443.9" stroke="#123644" stroke-width="1.2"/>
<line x1="1127" y1="442.9" x2="1137" y2="442.9" stroke="#123644" stroke-width="1.2"/>
<line x1="1100" y1="445.9" x2="1103" y2="445.9" stroke="#123644" stroke-width="1.2"/>
<line x1="1105" y1="445.9" x2="1108" y2="445.9" stroke="#123644" stroke-width="1.2"/>
<line x1="1132" y1="445.7" x2="1136" y2="445.7" stroke="#123644" stroke-width="1.2"/>
<line x1="1137" y1="444.7" x2="1140" y2="444.7" stroke="#123644" stroke-width="1.2"/>
<line x1="1141" y1="445.9" x2="1144" y2="445.9" stroke="#123644" stroke-width="1.2"/>
<path d="M1045.8 418.5L1054 422.8L1045.8 427.1Z" fill="#2a7c9e"/>
<text transform="translate(1059.1 427.2) scale(0.905 1)" font-size="11" fill="#0d2833" stroke="#0d2833" stroke-width="0.22">Minimal_Bass_15 A</text>
</g>
<rect x="1152.4" y="484.6" width="109.8" height="34.5" fill="#d99d10"/>
<clipPath id="cl10_2"><rect x="1152.4" y="484.6" width="109.8" height="34.5"/></clipPath>
<g clip-path="url(#cl10_2)">
<path d="M1152.4 505.81L1153.25 507.04L1154.1 507.66L1154.95 508.95L1155.8 510L1156.65 510.87L1157.5 504.72L1158.35 506.13L1159.2 507.37L1160.05 509.03L1160.9 509.87L1161.75 511.05L1162.6 506.2L1163.45 507.3L1164.3 508.16L1165.15 508.59L1166 509.88L1166.85 511.09L1167.7 505.26L1168.55 507.31L1169.4 508.19L1170.25 508.99L1171.1 510.09L1171.95 511.09L1172.8 505.29L1173.65 507.59L1174.5 508.03L1175.35 509.11L1176.2 510.34L1177.05 511.21L1177.9 506.12L1178.75 507.72L1179.6 507.85L1180.45 509.14L1181.3 510.48L1182.15 511.19L1183 505.58L1183.85 507.24L1184.7 508.07L1185.55 509.32L1186.4 510.64L1187.25 511.17L1188.1 506.23L1188.95 507.57L1189.8 508.9L1190.65 509.81L1191.5 510.71L1192.35 506.26L1193.2 507.21L1194.05 507.48L1194.9 508.93L1195.75 509.82L1196.6 510.95L1197.45 505.86L1198.3 505.95L1199.15 508.13L1200 508.96L1200.85 510.15L1201.7 511.07L1202.55 506.11L1203.4 507.04L1204.25 507.66L1205.1 509.18L1205.95 510.12L1206.8 511.08L1207.65 506.55L1208.5 507.58L1209.35 508.37L1210.2 508.99L1211.05 510.24L1211.9 511.2L1212.75 506.31L1213.6 507.56L1214.45 508.28L1215.3 509.66L1216.15 510.37L1217 511.08L1217.85 505.45L1218.7 506.98L1219.55 507.94L1220.4 509.81L1221.25 510.67L1222.1 511.07L1222.95 505.9L1223.8 507.54L1224.65 508.12L1225.5 509.57L1226.35 510.65L1227.2 505.75L1228.05 506.95L1228.9 507.65L1229.75 509.01L1230.6 509.86L1231.45 510.78L1232.3 505.83L1233.15 507.35L1234 508.26L1234.85 509.12L1235.7 509.79L1236.55 511.08L1237.4 506.04L1238.25 507.36L1239.1 507.35L1239.95 509.05L1240.8 510.24L1241.65 511.23L1242.5 506.59L1243.35 507.39L1244.2 507.85L1245.05 509.41L1245.9 510.45L1246.75 511.15L1247.6 506.39L1248.45 506.41L1249.3 508.58L1250.15 509.27L1251 510.28L1251.85 511.17L1252.7 505.34L1253.55 507.26L1254.4 508.59L1255.25 509.5L1256.1 510.71L1256.95 511.17L1257.8 506.68L1258.65 506.89L1259.5 508.17L1260.35 509.59L1261.2 510.84L1262.05 505.78L1262.05 517.14L1261.2 512.64L1260.35 513.75L1259.5 515.36L1258.65 516.08L1257.8 516.2L1256.95 512.43L1256.1 512.82L1255.25 514.1L1254.4 514.72L1253.55 516.27L1252.7 517.93L1251.85 512.41L1251 513.26L1250.15 514.14L1249.3 514.59L1248.45 516.55L1247.6 517.1L1246.75 512.44L1245.9 513.14L1245.05 513.96L1244.2 515.55L1243.35 516.08L1242.5 516.73L1241.65 512.35L1240.8 513.25L1239.95 514.41L1239.1 516.04L1238.25 515.75L1237.4 517.49L1236.55 512.52L1235.7 513.53L1234.85 514.47L1234 515.32L1233.15 516.02L1232.3 516.92L1231.45 512.81L1230.6 513.49L1229.75 514.58L1228.9 515.74L1228.05 515.97L1227.2 517.09L1226.35 512.89L1225.5 513.89L1224.65 515.34L1223.8 516.01L1222.95 517.01L1222.1 512.42L1221.25 512.92L1220.4 513.5L1219.55 515.59L1218.7 515.98L1217.85 517.97L1217 512.5L1216.15 513.21L1215.3 513.79L1214.45 515.26L1213.6 515.53L1212.75 517.02L1211.9 512.34L1211.05 513.33L1210.2 514.51L1209.35 514.95L1208.5 515.72L1207.65 516.28L1206.8 512.42L1205.95 513.38L1205.1 514.22L1204.25 515.85L1203.4 516.28L1202.55 516.75L1201.7 512.46L1200.85 513.4L1200 514.44L1199.15 514.92L1198.3 517.5L1197.45 517.59L1196.6 512.53L1195.75 513.64L1194.9 514.4L1194.05 515.98L1193.2 515.91L1192.35 516.71L1191.5 512.81L1190.65 513.78L1189.8 514.31L1188.95 515.47L1188.1 517.06L1187.25 512.42L1186.4 512.87L1185.55 514.07L1184.7 515.45L1183.85 516.21L1183 517.15L1182.15 512.4L1181.3 512.96L1180.45 514.18L1179.6 515.65L1178.75 515.52L1177.9 517.31L1177.05 512.31L1176.2 513.23L1175.35 514.15L1174.5 515.09L1173.65 515.69L1172.8 517.66L1171.95 512.46L1171.1 513.49L1170.25 514.49L1169.4 514.87L1168.55 515.82L1167.7 517.89L1166.85 512.46L1166 513.64L1165.15 514.76L1164.3 514.94L1163.45 515.79L1162.6 517.27L1161.75 512.48L1160.9 513.66L1160.05 514.57L1159.2 515.98L1158.35 517.19L1157.5 518.46L1156.65 512.63L1155.8 513.58L1154.95 514.42L1154.1 515.88L1153.25 516.07L1152.4 517.67Z" fill="#453205"/>
<path d="M1156.7 489.6L1164.9 493.9L1156.7 498.2Z" fill="#866109"/>
<text transform="translate(1170 498.3) scale(0.888 1)" font-size="11" fill="#2b1f03" stroke="#2b1f03" stroke-width="0.22">120_Perc_SPFT_13</text>
</g>
<rect x="1152.4" y="520.15" width="109.8" height="26.7" fill="#d99d10"/>
<clipPath id="cl10_3"><rect x="1152.4" y="520.15" width="109.8" height="26.7"/></clipPath>
<g clip-path="url(#cl10_3)">
<path d="M1152.4 540.65L1153.25 541.61L1154.1 542.72L1154.95 543.79L1155.8 545.15L1156.65 546.28L1157.5 541.88L1158.35 542.18L1159.2 542.71L1160.05 544.21L1160.9 545.22L1161.75 546.64L1162.6 541.23L1163.45 542.65L1164.3 543.34L1165.15 544.43L1166 545.84L1166.85 546.75L1167.7 541.71L1168.55 541.85L1169.4 543.25L1170.25 544.9L1171.1 545.61L1171.95 546.77L1172.8 541.28L1173.65 543.09L1174.5 544.21L1175.35 544.52L1176.2 546.02L1177.05 546.76L1177.9 540.84L1178.75 542.24L1179.6 544.05L1180.45 544.62L1181.3 546.03L1182.15 546.67L1183 542.25L1183.85 542.32L1184.7 543.8L1185.55 544.79L1186.4 546.07L1187.25 546.74L1188.1 542.14L1188.95 543.45L1189.8 544.46L1190.65 545.5L1191.5 546.4L1192.35 540.79L1193.2 542.83L1194.05 542.97L1194.9 544.43L1195.75 545.5L1196.6 546.42L1197.45 541.16L1198.3 542.5L1199.15 543.36L1200 544.27L1200.85 545.77L1201.7 546.55L1202.55 542.1L1203.4 542.03L1204.25 543.1L1205.1 544.97L1205.95 545.56L1206.8 546.73L1207.65 541.29L1208.5 543.21L1209.35 544.12L1210.2 544.98L1211.05 545.65L1211.9 546.76L1212.75 541.16L1213.6 542.11L1214.45 543.34L1215.3 545L1216.15 546.05L1217 546.7L1217.85 541.29L1218.7 543.34L1219.55 543.69L1220.4 544.85L1221.25 546.02L1222.1 546.79L1222.95 541.18L1223.8 543.49L1224.65 544.24L1225.5 545.12L1226.35 546.17L1227.2 541.22L1228.05 541.38L1228.9 543.08L1229.75 544.4L1230.6 545.45L1231.45 546.53L1232.3 541.83L1233.15 542.7L1234 543.06L1234.85 543.97L1235.7 545.67L1236.55 546.69L1237.4 540.37L1238.25 542.28L1239.1 543.54L1239.95 544.75L1240.8 545.6L1241.65 546.64L1242.5 541.45L1243.35 542.59L1244.2 544.06L1245.05 544.37L1245.9 546L1246.75 546.7L1247.6 540.96L1248.45 543.13L1249.3 543.5L1250.15 544.52L1251 545.89L1251.85 546.65L1252.7 542.32L1253.55 542.87L1254.4 544.23L1255.25 544.76L1256.1 546.17L1256.95 546.71L1257.8 541.04L1258.65 542.49L1259.5 543.59L1260.35 545.17L1261.2 546.25L1262.05 540.45L1262.05 553.71L1261.2 548.33L1260.35 549.33L1259.5 550.63L1258.65 551.76L1257.8 553.65L1256.95 547.98L1256.1 548.47L1255.25 549.75L1254.4 550.16L1253.55 551.22L1252.7 551.83L1251.85 548.03L1251 548.78L1250.15 549.91L1249.3 551.08L1248.45 551.43L1247.6 553.44L1246.75 547.96L1245.9 548.65L1245.05 550.04L1244.2 550.49L1243.35 551.6L1242.5 552.79L1241.65 548.03L1240.8 549.02L1239.95 549.67L1239.1 551.13L1238.25 552.15L1237.4 553.89L1236.55 547.91L1235.7 548.91L1234.85 550.35L1234 551.42L1233.15 551.63L1232.3 552.72L1231.45 548.13L1230.6 549.19L1229.75 550.01L1228.9 551.39L1228.05 553.08L1227.2 553.32L1226.35 548.41L1225.5 549.52L1224.65 550.4L1223.8 551.03L1222.95 553.5L1222.1 547.91L1221.25 548.58L1220.4 549.68L1219.55 550.55L1218.7 551.26L1217.85 553.36L1217 547.95L1216.15 548.59L1215.3 549.6L1214.45 551.2L1213.6 551.94L1212.75 553.34L1211.9 547.9L1211.05 548.97L1210.2 549.52L1209.35 550.4L1208.5 551.35L1207.65 553.08L1206.8 547.95L1205.95 548.88L1205.1 549.43L1204.25 551.24L1203.4 552.39L1202.55 551.98L1201.7 548.11L1200.85 548.84L1200 549.99L1199.15 551.03L1198.3 551.64L1197.45 552.66L1196.6 548.16L1195.75 549.01L1194.9 549.91L1194.05 551.2L1193.2 551.22L1192.35 553.39L1191.5 548.21L1190.65 549.09L1189.8 550.06L1188.95 550.81L1188.1 552.48L1187.25 547.87L1186.4 548.52L1185.55 549.63L1184.7 550.58L1183.85 551.71L1183 552.32L1182.15 547.97L1181.3 548.48L1180.45 549.92L1179.6 550.2L1178.75 552.11L1177.9 553.22L1177.05 547.91L1176.2 548.68L1175.35 550.1L1174.5 550.22L1173.65 551.49L1172.8 553.09L1171.95 547.88L1171.1 548.87L1170.25 549.65L1169.4 551.19L1168.55 552.82L1167.7 552.97L1166.85 547.91L1166 548.72L1165.15 550.22L1164.3 550.76L1163.45 551.42L1162.6 553.07L1161.75 548.02L1160.9 549.2L1160.05 550.32L1159.2 551.91L1158.35 552.03L1157.5 552.36L1156.65 548.29L1155.8 549.32L1154.95 550.9L1154.1 551.55L1153.25 553.06L1152.4 553.97Z" fill="#453205"/>
<rect x="1153.9" y="522.15" width="14.7" height="13.9" rx="1.5" fill="#0a0a0a"/>
<path d="M1157 524.55L1165.8 529.1L1157 533.65Z" fill="#f4f4f4"/>
<text transform="translate(1170 533.85) scale(0.888 1)" font-size="11" fill="#2b1f03" stroke="#2b1f03" stroke-width="0.22">125_Perc_SPFT_11</text>
<line x1="1154.6" y1="520.15" x2="1154.6" y2="546.85" stroke="#ffffff" stroke-width="0.8" opacity="0.75"/>
</g>
<rect x="295.4" y="413.5" width="75.3" height="34.5" fill="#545454"/>
<rect x="370.7" y="413.5" width="3.7" height="17.25" fill="#ff5a05"/>
<rect x="370.7" y="430.75" width="3.7" height="17.25" fill="#73981a"/>
<path d="M300 425.9L308 430.6L300 435.3Z" fill="#b4b4b4"/>
<text transform="translate(315 434.9) scale(0.868 1)" font-size="11.1" fill="#ececec" stroke="#ececec" stroke-width="0.22">Scene 1</text>
<rect x="295.4" y="449.05" width="75.3" height="34.5" fill="#545454"/>
<rect x="370.7" y="449.05" width="3.7" height="11.5" fill="#d92e24"/>
<rect x="370.7" y="460.55" width="3.7" height="11.5" fill="#ff5a05"/>
<rect x="370.7" y="472.05" width="3.7" height="11.5" fill="#73981a"/>
<path d="M300 461.45L308 466.15L300 470.85Z" fill="#b4b4b4"/>
<text transform="translate(315 470.45) scale(0.868 1)" font-size="11.1" fill="#ececec" stroke="#ececec" stroke-width="0.22">Scene 2</text>
<rect x="295.4" y="484.6" width="75.3" height="34.5" fill="#545454"/>
<rect x="370.7" y="484.6" width="3.7" height="11.5" fill="#d92e24"/>
<rect x="370.7" y="496.1" width="3.7" height="11.5" fill="#ff5a05"/>
<rect x="370.7" y="507.6" width="3.7" height="11.5" fill="#d99d10"/>
<path d="M300 497L308 501.7L300 506.4Z" fill="#b4b4b4"/>
<text transform="translate(315 506) scale(0.868 1)" font-size="11.1" fill="#ececec" stroke="#ececec" stroke-width="0.22">Scene 3</text>
<rect x="295.4" y="520.15" width="75.3" height="26.7" fill="#545454"/>
<rect x="370.7" y="520.15" width="3.7" height="26.7" fill="#ea615c"/>
<path d="M300 532.55L308 537.25L300 541.95Z" fill="#b4b4b4"/>
<text transform="translate(315 541.55) scale(0.868 1)" font-size="11.1" fill="#ececec" stroke="#ececec" stroke-width="0.22">Scene 4</text>
<line x1="338" y1="413.5" x2="338" y2="430.5" stroke="#e0e0e0" stroke-width="0.7" opacity="0.7"/>
<line x1="332" y1="504.6" x2="332" y2="519.1" stroke="#e0e0e0" stroke-width="0.7" opacity="0.7"/>
<line x1="368.6" y1="520.15" x2="368.6" y2="546.85" stroke="#d0d0d0" stroke-width="0.8" opacity="0.7"/>
<rect x="5.6" y="528" width="1411" height="19" fill="url(#gFadeC)"/>
<rect x="73.3" y="548" width="54.2" height="33.7" fill="#545454"/>
<rect x="129" y="548" width="54.2" height="33.7" fill="#545454"/>
<rect x="96.47" y="560.5" width="8.2" height="8.2" fill="#b4b4b4"/>
<rect x="150.72" y="559" width="10.4" height="2.5" fill="#b4b4b4"/>
<rect x="150.72" y="562.9" width="10.4" height="2.5" fill="#b4b4b4"/>
<rect x="150.72" y="566.8" width="6.4" height="2.5" fill="#b4b4b4"/>
<path d="M158.22 566.1L162.72 568.7L158.22 571.3Z" fill="#b4b4b4"/>
<rect x="184.3" y="548" width="54.2" height="33.7" fill="#545454"/>
<rect x="240" y="548" width="54.2" height="33.7" fill="#545454"/>
<rect x="207.48" y="560.5" width="8.2" height="8.2" fill="#b4b4b4"/>
<rect x="261.73" y="559" width="10.4" height="2.5" fill="#b4b4b4"/>
<rect x="261.73" y="562.9" width="10.4" height="2.5" fill="#b4b4b4"/>
<rect x="261.73" y="566.8" width="6.4" height="2.5" fill="#b4b4b4"/>
<path d="M269.23 566.1L273.73 568.7L269.23 571.3Z" fill="#b4b4b4"/>
<rect x="295.4" y="548" width="39.05" height="33.7" fill="#545454"/>
<rect x="335.95" y="548" width="39.05" height="33.7" fill="#545454"/>
<rect x="311" y="560.5" width="8.2" height="8.2" fill="#b4b4b4"/>
<rect x="350.1" y="559" width="10.4" height="2.5" fill="#b4b4b4"/>
<rect x="350.1" y="562.9" width="10.4" height="2.5" fill="#b4b4b4"/>
<rect x="350.1" y="566.8" width="6.4" height="2.5" fill="#b4b4b4"/>
<path d="M357.6 566.1L362.1 568.7L357.6 571.3Z" fill="#b4b4b4"/>
<rect x="376.1" y="548" width="54.15" height="33.7" fill="#545454"/>
<rect x="431.75" y="548" width="54.15" height="33.7" fill="#545454"/>
<rect x="399.25" y="560.5" width="8.2" height="8.2" fill="#b4b4b4"/>
<rect x="453.45" y="559" width="10.4" height="2.5" fill="#b4b4b4"/>
<rect x="453.45" y="562.9" width="10.4" height="2.5" fill="#b4b4b4"/>
<rect x="453.45" y="566.8" width="6.4" height="2.5" fill="#b4b4b4"/>
<path d="M460.95 566.1L465.45 568.7L460.95 571.3Z" fill="#b4b4b4"/>
<rect x="487" y="548" width="54.15" height="33.7" fill="#545454"/>
<rect x="542.65" y="548" width="54.15" height="33.7" fill="#545454"/>
<rect x="510.15" y="560.5" width="8.2" height="8.2" fill="#b4b4b4"/>
<rect x="564.35" y="559" width="10.4" height="2.5" fill="#b4b4b4"/>
<rect x="564.35" y="562.9" width="10.4" height="2.5" fill="#b4b4b4"/>
<rect x="564.35" y="566.8" width="6.4" height="2.5" fill="#b4b4b4"/>
<path d="M571.85 566.1L576.35 568.7L571.85 571.3Z" fill="#b4b4b4"/>
<rect x="597.9" y="548" width="54.15" height="33.7" fill="#545454"/>
<rect x="653.55" y="548" width="54.15" height="33.7" fill="#545454"/>
<rect x="621.05" y="560.5" width="8.2" height="8.2" fill="#b4b4b4"/>
<rect x="675.25" y="559" width="10.4" height="2.5" fill="#b4b4b4"/>
<rect x="675.25" y="562.9" width="10.4" height="2.5" fill="#b4b4b4"/>
<rect x="675.25" y="566.8" width="6.4" height="2.5" fill="#b4b4b4"/>
<path d="M682.75 566.1L687.25 568.7L682.75 571.3Z" fill="#b4b4b4"/>
<rect x="708.8" y="548" width="54.15" height="33.7" fill="#545454"/>
<rect x="764.45" y="548" width="54.15" height="33.7" fill="#545454"/>
<rect x="731.95" y="560.5" width="8.2" height="8.2" fill="#b4b4b4"/>
<rect x="786.15" y="559" width="10.4" height="2.5" fill="#6a6a6a"/>
<rect x="786.15" y="562.9" width="10.4" height="2.5" fill="#6a6a6a"/>
<rect x="786.15" y="566.8" width="6.4" height="2.5" fill="#6a6a6a"/>
<path d="M793.65 566.1L798.15 568.7L793.65 571.3Z" fill="#6a6a6a"/>
<rect x="819.7" y="548" width="54.15" height="33.7" fill="#545454"/>
<rect x="875.35" y="548" width="54.15" height="33.7" fill="#545454"/>
<rect x="842.85" y="560.5" width="8.2" height="8.2" fill="#b4b4b4"/>
<rect x="897.05" y="559" width="10.4" height="2.5" fill="#b4b4b4"/>
<rect x="897.05" y="562.9" width="10.4" height="2.5" fill="#b4b4b4"/>
<rect x="897.05" y="566.8" width="6.4" height="2.5" fill="#b4b4b4"/>
<path d="M904.55 566.1L909.05 568.7L904.55 571.3Z" fill="#b4b4b4"/>
<rect x="930.6" y="548" width="54.15" height="33.7" fill="#545454"/>
<rect x="986.25" y="548" width="54.15" height="33.7" fill="#545454"/>
<rect x="953.75" y="560.5" width="8.2" height="8.2" fill="#6c6c6c"/>
<rect x="1007.95" y="559" width="10.4" height="2.5" fill="#b4b4b4"/>
<rect x="1007.95" y="562.9" width="10.4" height="2.5" fill="#b4b4b4"/>
<rect x="1007.95" y="566.8" width="6.4" height="2.5" fill="#b4b4b4"/>
<path d="M1015.45 566.1L1019.95 568.7L1015.45 571.3Z" fill="#b4b4b4"/>
<rect x="1041.5" y="548" width="54.15" height="33.7" fill="#545454"/>
<rect x="1097.15" y="548" width="54.15" height="33.7" fill="#545454"/>
<rect x="1064.65" y="560.5" width="8.2" height="8.2" fill="#b4b4b4"/>
<rect x="1118.85" y="559" width="10.4" height="2.5" fill="#b4b4b4"/>
<rect x="1118.85" y="562.9" width="10.4" height="2.5" fill="#b4b4b4"/>
<rect x="1118.85" y="566.8" width="6.4" height="2.5" fill="#b4b4b4"/>
<path d="M1126.35 566.1L1130.85 568.7L1126.35 571.3Z" fill="#b4b4b4"/>
<rect x="1152.4" y="548" width="54.15" height="33.7" fill="#545454"/>
<rect x="1208.05" y="548" width="54.15" height="33.7" fill="#545454"/>
<rect x="1175.55" y="560.5" width="8.2" height="8.2" fill="#b4b4b4"/>
<rect x="1229.75" y="559" width="10.4" height="2.5" fill="#b4b4b4"/>
<rect x="1229.75" y="562.9" width="10.4" height="2.5" fill="#b4b4b4"/>
<rect x="1229.75" y="566.8" width="6.4" height="2.5" fill="#b4b4b4"/>
<path d="M1237.25 566.1L1241.75 568.7L1237.25 571.3Z" fill="#b4b4b4"/>
<rect x="1283.6" y="548" width="39.05" height="33.7" fill="#545454"/>
<rect x="1324.15" y="548" width="10.85" height="33.7" fill="#545454"/>
<rect x="1299.2" y="560.5" width="8.2" height="8.2" fill="#6c6c6c"/>
<rect x="1336.3" y="548" width="39.3" height="33.7" fill="#545454"/>
<rect x="1377.1" y="548" width="39.3" height="33.7" fill="#545454"/>
<rect x="1352.03" y="560.5" width="8.2" height="8.2" fill="#6c6c6c"/>
<rect x="1391.38" y="559" width="10.4" height="2.5" fill="#b4b4b4"/>
<rect x="1391.38" y="562.9" width="10.4" height="2.5" fill="#b4b4b4"/>
<rect x="1391.38" y="566.8" width="6.4" height="2.5" fill="#b4b4b4"/>
<path d="M1398.88 566.1L1403.38 568.7L1398.88 571.3Z" fill="#b4b4b4"/>
<rect x="73.3" y="582.7" width="109.9" height="134.4" fill="#1c1c1c"/>
<rect x="113.7" y="590.6" width="20.3" height="102.4" fill="#2f2f2f"/>
<rect x="113.7" y="641.9" width="20.3" height="51.1" fill="url(#gMeter)"/>
<rect x="113.7" y="604.4" width="20.3" height="2.5" fill="#ff7300"/>
<rect x="135.2" y="590.6" width="20.3" height="102.4" fill="#2f2f2f"/>
<rect x="135.2" y="647.1" width="20.3" height="45.9" fill="url(#gMeter)"/>
<rect x="135.2" y="609.5" width="20.3" height="2.5" fill="#ff7300"/>
<text transform="translate(102.1 597.5) scale(1.0 1)" font-size="9.2" fill="#d6d6d6" text-anchor="end" stroke="#d6d6d6" stroke-width="0.22">0</text>
<line x1="105.3" y1="594.2" x2="112.1" y2="594.2" stroke="#a8a8a8" stroke-width="0.9"/>
<line x1="156.9" y1="594.2" x2="160.6" y2="594.2" stroke="#a8a8a8" stroke-width="0.9"/>
<text transform="translate(107.4 618.8) scale(1.0 1)" font-size="9.2" fill="#d6d6d6" text-anchor="end" stroke="#d6d6d6" stroke-width="0.22">10</text>
<line x1="109.9" y1="615.5" x2="112.1" y2="615.5" stroke="#a8a8a8" stroke-width="0.9"/>
<line x1="156.9" y1="615.5" x2="159.3" y2="615.5" stroke="#a8a8a8" stroke-width="0.9"/>
<text transform="translate(107.4 639.9) scale(1.0 1)" font-size="9.2" fill="#d6d6d6" text-anchor="end" stroke="#d6d6d6" stroke-width="0.22">20</text>
<line x1="109.9" y1="636.6" x2="112.1" y2="636.6" stroke="#a8a8a8" stroke-width="0.9"/>
<line x1="156.9" y1="636.6" x2="159.3" y2="636.6" stroke="#a8a8a8" stroke-width="0.9"/>
<text transform="translate(107.4 661.1) scale(1.0 1)" font-size="9.2" fill="#d6d6d6" text-anchor="end" stroke="#d6d6d6" stroke-width="0.22">30</text>
<line x1="109.9" y1="657.8" x2="112.1" y2="657.8" stroke="#a8a8a8" stroke-width="0.9"/>
<line x1="156.9" y1="657.8" x2="159.3" y2="657.8" stroke="#a8a8a8" stroke-width="0.9"/>
<text transform="translate(107.4 681.6) scale(1.0 1)" font-size="9.2" fill="#d6d6d6" text-anchor="end" stroke="#d6d6d6" stroke-width="0.22">40</text>
<line x1="109.9" y1="678.3" x2="112.1" y2="678.3" stroke="#a8a8a8" stroke-width="0.9"/>
<line x1="156.9" y1="678.3" x2="159.3" y2="678.3" stroke="#a8a8a8" stroke-width="0.9"/>
<text transform="translate(104.7 693.2) scale(1.0 1)" font-size="11.5" fill="#d6d6d6" text-anchor="end" stroke="#d6d6d6" stroke-width="0.22">∞</text>
<text transform="translate(179.1 709.7) scale(0.97 1)" font-size="10.5" fill="#f40a0a" text-anchor="end" stroke="#f40a0a" stroke-width="0.22">+0.5 dB</text>
<rect x="184.3" y="582.7" width="109.9" height="134.4" fill="#1c1c1c"/>
<rect x="224.7" y="590.6" width="20.3" height="102.4" fill="#2f2f2f"/>
<rect x="224.7" y="671.9" width="20.3" height="21.1" fill="url(#gMeter)"/>
<rect x="224.7" y="645.3" width="20.3" height="2.5" fill="#8ccf2a"/>
<rect x="246.2" y="590.6" width="20.3" height="102.4" fill="#2f2f2f"/>
<rect x="246.2" y="644.7" width="20.3" height="48.3" fill="url(#gMeter)"/>
<rect x="246.2" y="618.7" width="20.3" height="2.5" fill="#ff7300"/>
<text transform="translate(213.1 597.5) scale(1.0 1)" font-size="9.2" fill="#d6d6d6" text-anchor="end" stroke="#d6d6d6" stroke-width="0.22">0</text>
<line x1="216.3" y1="594.2" x2="223.1" y2="594.2" stroke="#a8a8a8" stroke-width="0.9"/>
<line x1="267.9" y1="594.2" x2="271.6" y2="594.2" stroke="#a8a8a8" stroke-width="0.9"/>
<text transform="translate(218.4 618.8) scale(1.0 1)" font-size="9.2" fill="#d6d6d6" text-anchor="end" stroke="#d6d6d6" stroke-width="0.22">10</text>
<line x1="220.9" y1="615.5" x2="223.1" y2="615.5" stroke="#a8a8a8" stroke-width="0.9"/>
<line x1="267.9" y1="615.5" x2="270.3" y2="615.5" stroke="#a8a8a8" stroke-width="0.9"/>
<text transform="translate(218.4 639.9) scale(1.0 1)" font-size="9.2" fill="#d6d6d6" text-anchor="end" stroke="#d6d6d6" stroke-width="0.22">20</text>
<line x1="220.9" y1="636.6" x2="223.1" y2="636.6" stroke="#a8a8a8" stroke-width="0.9"/>
<line x1="267.9" y1="636.6" x2="270.3" y2="636.6" stroke="#a8a8a8" stroke-width="0.9"/>
<text transform="translate(218.4 661.1) scale(1.0 1)" font-size="9.2" fill="#d6d6d6" text-anchor="end" stroke="#d6d6d6" stroke-width="0.22">30</text>
<line x1="220.9" y1="657.8" x2="223.1" y2="657.8" stroke="#a8a8a8" stroke-width="0.9"/>
<line x1="267.9" y1="657.8" x2="270.3" y2="657.8" stroke="#a8a8a8" stroke-width="0.9"/>
<text transform="translate(218.4 681.6) scale(1.0 1)" font-size="9.2" fill="#d6d6d6" text-anchor="end" stroke="#d6d6d6" stroke-width="0.22">40</text>
<line x1="220.9" y1="678.3" x2="223.1" y2="678.3" stroke="#a8a8a8" stroke-width="0.9"/>
<line x1="267.9" y1="678.3" x2="270.3" y2="678.3" stroke="#a8a8a8" stroke-width="0.9"/>
<text transform="translate(215.7 693.2) scale(1.0 1)" font-size="11.5" fill="#d6d6d6" text-anchor="end" stroke="#d6d6d6" stroke-width="0.22">∞</text>
<text transform="translate(290.1 709.7) scale(0.97 1)" font-size="10.5" fill="#c8c8c8" text-anchor="end" stroke="#c8c8c8" stroke-width="0.22">-3.6 dB</text>
<rect x="295.4" y="582.7" width="79.6" height="134.4" fill="#1c1c1c"/>
<rect x="321.3" y="590.6" width="20.3" height="102.4" fill="#2f2f2f"/>
<rect x="321.3" y="637" width="20.3" height="56" fill="url(#gMeter)"/>
<rect x="321.3" y="629.7" width="20.3" height="7.3" fill="#ffdf3a"/>
<rect x="321.3" y="621.7" width="20.3" height="2.5" fill="#ff7300"/>
<rect x="342.8" y="590.6" width="20.3" height="102.4" fill="#2f2f2f"/>
<rect x="342.8" y="645.6" width="20.3" height="47.4" fill="url(#gMeter)"/>
<rect x="342.8" y="634.7" width="20.3" height="2.5" fill="#ffe23a"/>
<text transform="translate(309.7 597.5) scale(1.0 1)" font-size="9.2" fill="#d6d6d6" text-anchor="end" stroke="#d6d6d6" stroke-width="0.22">0</text>
<line x1="312.9" y1="594.2" x2="319.7" y2="594.2" stroke="#a8a8a8" stroke-width="0.9"/>
<line x1="364.5" y1="594.2" x2="368.2" y2="594.2" stroke="#a8a8a8" stroke-width="0.9"/>
<text transform="translate(315 618.8) scale(1.0 1)" font-size="9.2" fill="#d6d6d6" text-anchor="end" stroke="#d6d6d6" stroke-width="0.22">10</text>
<line x1="317.5" y1="615.5" x2="319.7" y2="615.5" stroke="#a8a8a8" stroke-width="0.9"/>
<line x1="364.5" y1="615.5" x2="366.9" y2="615.5" stroke="#a8a8a8" stroke-width="0.9"/>
<text transform="translate(315 639.9) scale(1.0 1)" font-size="9.2" fill="#d6d6d6" text-anchor="end" stroke="#d6d6d6" stroke-width="0.22">20</text>
<line x1="317.5" y1="636.6" x2="319.7" y2="636.6" stroke="#a8a8a8" stroke-width="0.9"/>
<line x1="364.5" y1="636.6" x2="366.9" y2="636.6" stroke="#a8a8a8" stroke-width="0.9"/>
<text transform="translate(315 661.1) scale(1.0 1)" font-size="9.2" fill="#d6d6d6" text-anchor="end" stroke="#d6d6d6" stroke-width="0.22">30</text>
<line x1="317.5" y1="657.8" x2="319.7" y2="657.8" stroke="#a8a8a8" stroke-width="0.9"/>
<line x1="364.5" y1="657.8" x2="366.9" y2="657.8" stroke="#a8a8a8" stroke-width="0.9"/>
<text transform="translate(315 681.6) scale(1.0 1)" font-size="9.2" fill="#d6d6d6" text-anchor="end" stroke="#d6d6d6" stroke-width="0.22">40</text>
<line x1="317.5" y1="678.3" x2="319.7" y2="678.3" stroke="#a8a8a8" stroke-width="0.9"/>
<line x1="364.5" y1="678.3" x2="366.9" y2="678.3" stroke="#a8a8a8" stroke-width="0.9"/>
<text transform="translate(312.3 693.2) scale(1.0 1)" font-size="11.5" fill="#d6d6d6" text-anchor="end" stroke="#d6d6d6" stroke-width="0.22">∞</text>
<text transform="translate(370.9 709.7) scale(0.97 1)" font-size="10.5" fill="#c8c8c8" text-anchor="end" stroke="#c8c8c8" stroke-width="0.22">-3.0 dB</text>
<rect x="376.1" y="582.7" width="109.8" height="134.4" fill="#1c1c1c"/>
<rect x="416.5" y="590.6" width="20.3" height="102.4" fill="#2f2f2f"/>
<rect x="416.5" y="647" width="20.3" height="46" fill="url(#gMeter)"/>
<rect x="416.5" y="636.3" width="20.3" height="2.5" fill="#ffe23a"/>
<rect x="438" y="590.6" width="20.3" height="102.4" fill="#2f2f2f"/>
<rect x="438" y="657" width="20.3" height="36" fill="url(#gMeter)"/>
<rect x="438" y="646.3" width="20.3" height="2.5" fill="#8ccf2a"/>
<text transform="translate(404.9 597.5) scale(1.0 1)" font-size="9.2" fill="#d6d6d6" text-anchor="end" stroke="#d6d6d6" stroke-width="0.22">0</text>
<line x1="408.1" y1="594.2" x2="414.9" y2="594.2" stroke="#a8a8a8" stroke-width="0.9"/>
<line x1="459.7" y1="594.2" x2="463.4" y2="594.2" stroke="#a8a8a8" stroke-width="0.9"/>
<text transform="translate(410.2 618.8) scale(1.0 1)" font-size="9.2" fill="#d6d6d6" text-anchor="end" stroke="#d6d6d6" stroke-width="0.22">10</text>
<line x1="412.7" y1="615.5" x2="414.9" y2="615.5" stroke="#a8a8a8" stroke-width="0.9"/>
<line x1="459.7" y1="615.5" x2="462.1" y2="615.5" stroke="#a8a8a8" stroke-width="0.9"/>
<text transform="translate(410.2 639.9) scale(1.0 1)" font-size="9.2" fill="#d6d6d6" text-anchor="end" stroke="#d6d6d6" stroke-width="0.22">20</text>
<line x1="412.7" y1="636.6" x2="414.9" y2="636.6" stroke="#a8a8a8" stroke-width="0.9"/>
<line x1="459.7" y1="636.6" x2="462.1" y2="636.6" stroke="#a8a8a8" stroke-width="0.9"/>
<text transform="translate(410.2 661.1) scale(1.0 1)" font-size="9.2" fill="#d6d6d6" text-anchor="end" stroke="#d6d6d6" stroke-width="0.22">30</text>
<line x1="412.7" y1="657.8" x2="414.9" y2="657.8" stroke="#a8a8a8" stroke-width="0.9"/>
<line x1="459.7" y1="657.8" x2="462.1" y2="657.8" stroke="#a8a8a8" stroke-width="0.9"/>
<text transform="translate(410.2 681.6) scale(1.0 1)" font-size="9.2" fill="#d6d6d6" text-anchor="end" stroke="#d6d6d6" stroke-width="0.22">40</text>
<line x1="412.7" y1="678.3" x2="414.9" y2="678.3" stroke="#a8a8a8" stroke-width="0.9"/>
<line x1="459.7" y1="678.3" x2="462.1" y2="678.3" stroke="#a8a8a8" stroke-width="0.9"/>
<text transform="translate(407.5 693.2) scale(1.0 1)" font-size="11.5" fill="#d6d6d6" text-anchor="end" stroke="#d6d6d6" stroke-width="0.22">∞</text>
<text transform="translate(481.8 709.7) scale(0.97 1)" font-size="10.5" fill="#c8c8c8" text-anchor="end" stroke="#c8c8c8" stroke-width="0.22">-12.5 dB</text>
<rect x="487" y="582.7" width="109.8" height="134.4" fill="#1c1c1c"/>
<rect x="527.4" y="590.6" width="20.3" height="102.4" fill="#2f2f2f"/>
<rect x="527.4" y="655.6" width="20.3" height="37.4" fill="url(#gMeter)"/>
<rect x="527.4" y="649" width="20.3" height="2.5" fill="#8ccf2a"/>
<rect x="548.9" y="590.6" width="20.3" height="102.4" fill="#2f2f2f"/>
<rect x="548.9" y="653.6" width="20.3" height="39.4" fill="url(#gMeter)"/>
<rect x="548.9" y="647.3" width="20.3" height="2.5" fill="#8ccf2a"/>
<text transform="translate(515.8 597.5) scale(1.0 1)" font-size="9.2" fill="#d6d6d6" text-anchor="end" stroke="#d6d6d6" stroke-width="0.22">0</text>
<line x1="519" y1="594.2" x2="525.8" y2="594.2" stroke="#a8a8a8" stroke-width="0.9"/>
<line x1="570.6" y1="594.2" x2="574.3" y2="594.2" stroke="#a8a8a8" stroke-width="0.9"/>
<text transform="translate(521.1 618.8) scale(1.0 1)" font-size="9.2" fill="#d6d6d6" text-anchor="end" stroke="#d6d6d6" stroke-width="0.22">10</text>
<line x1="523.6" y1="615.5" x2="525.8" y2="615.5" stroke="#a8a8a8" stroke-width="0.9"/>
<line x1="570.6" y1="615.5" x2="573" y2="615.5" stroke="#a8a8a8" stroke-width="0.9"/>
<text transform="translate(521.1 639.9) scale(1.0 1)" font-size="9.2" fill="#d6d6d6" text-anchor="end" stroke="#d6d6d6" stroke-width="0.22">20</text>
<line x1="523.6" y1="636.6" x2="525.8" y2="636.6" stroke="#a8a8a8" stroke-width="0.9"/>
<line x1="570.6" y1="636.6" x2="573" y2="636.6" stroke="#a8a8a8" stroke-width="0.9"/>
<text transform="translate(521.1 661.1) scale(1.0 1)" font-size="9.2" fill="#d6d6d6" text-anchor="end" stroke="#d6d6d6" stroke-width="0.22">30</text>
<line x1="523.6" y1="657.8" x2="525.8" y2="657.8" stroke="#a8a8a8" stroke-width="0.9"/>
<line x1="570.6" y1="657.8" x2="573" y2="657.8" stroke="#a8a8a8" stroke-width="0.9"/>
<text transform="translate(521.1 681.6) scale(1.0 1)" font-size="9.2" fill="#d6d6d6" text-anchor="end" stroke="#d6d6d6" stroke-width="0.22">40</text>
<line x1="523.6" y1="678.3" x2="525.8" y2="678.3" stroke="#a8a8a8" stroke-width="0.9"/>
<line x1="570.6" y1="678.3" x2="573" y2="678.3" stroke="#a8a8a8" stroke-width="0.9"/>
<text transform="translate(518.4 693.2) scale(1.0 1)" font-size="11.5" fill="#d6d6d6" text-anchor="end" stroke="#d6d6d6" stroke-width="0.22">∞</text>
<text transform="translate(592.7 709.7) scale(0.97 1)" font-size="10.5" fill="#c8c8c8" text-anchor="end" stroke="#c8c8c8" stroke-width="0.22">-7.8 dB</text>
<rect x="597.9" y="582.7" width="109.8" height="134.4" fill="#1c1c1c"/>
<rect x="638.3" y="590.6" width="20.3" height="102.4" fill="#2f2f2f"/>
<rect x="638.3" y="637" width="20.3" height="56" fill="url(#gMeter)"/>
<rect x="638.3" y="632.4" width="20.3" height="4.6" fill="#ffdf3a"/>
<rect x="638.3" y="623" width="20.3" height="2.5" fill="#ff7300"/>
<rect x="659.8" y="590.6" width="20.3" height="102.4" fill="#2f2f2f"/>
<rect x="659.8" y="659.6" width="20.3" height="33.4" fill="url(#gMeter)"/>
<rect x="659.8" y="648.3" width="20.3" height="2.5" fill="#8ccf2a"/>
<text transform="translate(626.7 597.5) scale(1.0 1)" font-size="9.2" fill="#d6d6d6" text-anchor="end" stroke="#d6d6d6" stroke-width="0.22">0</text>
<line x1="629.9" y1="594.2" x2="636.7" y2="594.2" stroke="#a8a8a8" stroke-width="0.9"/>
<line x1="681.5" y1="594.2" x2="685.2" y2="594.2" stroke="#a8a8a8" stroke-width="0.9"/>
<text transform="translate(632 618.8) scale(1.0 1)" font-size="9.2" fill="#d6d6d6" text-anchor="end" stroke="#d6d6d6" stroke-width="0.22">10</text>
<line x1="634.5" y1="615.5" x2="636.7" y2="615.5" stroke="#a8a8a8" stroke-width="0.9"/>
<line x1="681.5" y1="615.5" x2="683.9" y2="615.5" stroke="#a8a8a8" stroke-width="0.9"/>
<text transform="translate(632 639.9) scale(1.0 1)" font-size="9.2" fill="#d6d6d6" text-anchor="end" stroke="#d6d6d6" stroke-width="0.22">20</text>
<line x1="634.5" y1="636.6" x2="636.7" y2="636.6" stroke="#a8a8a8" stroke-width="0.9"/>
<line x1="681.5" y1="636.6" x2="683.9" y2="636.6" stroke="#a8a8a8" stroke-width="0.9"/>
<text transform="translate(632 661.1) scale(1.0 1)" font-size="9.2" fill="#d6d6d6" text-anchor="end" stroke="#d6d6d6" stroke-width="0.22">30</text>
<line x1="634.5" y1="657.8" x2="636.7" y2="657.8" stroke="#a8a8a8" stroke-width="0.9"/>
<line x1="681.5" y1="657.8" x2="683.9" y2="657.8" stroke="#a8a8a8" stroke-width="0.9"/>
<text transform="translate(632 681.6) scale(1.0 1)" font-size="9.2" fill="#d6d6d6" text-anchor="end" stroke="#d6d6d6" stroke-width="0.22">40</text>
<line x1="634.5" y1="678.3" x2="636.7" y2="678.3" stroke="#a8a8a8" stroke-width="0.9"/>
<line x1="681.5" y1="678.3" x2="683.9" y2="678.3" stroke="#a8a8a8" stroke-width="0.9"/>
<text transform="translate(629.3 693.2) scale(1.0 1)" font-size="11.5" fill="#d6d6d6" text-anchor="end" stroke="#d6d6d6" stroke-width="0.22">∞</text>
<text transform="translate(703.6 709.7) scale(0.97 1)" font-size="10.5" fill="#c8c8c8" text-anchor="end" stroke="#c8c8c8" stroke-width="0.22">-9.0 dB</text>
<rect x="708.8" y="582.7" width="109.8" height="134.4" fill="#1c1c1c"/>
<rect x="749.2" y="590.6" width="20.3" height="102.4" fill="#2f2f2f"/>
<rect x="749.2" y="683.5" width="20.3" height="9.5" fill="url(#gMeter)"/>
<rect x="749.2" y="663.6" width="20.3" height="2.5" fill="#8ccf2a"/>
<rect x="770.7" y="590.6" width="20.3" height="102.4" fill="#2f2f2f"/>
<rect x="770.7" y="679.5" width="20.3" height="13.5" fill="url(#gMeter)"/>
<rect x="770.7" y="655.6" width="20.3" height="2.5" fill="#8ccf2a"/>
<text transform="translate(737.6 597.5) scale(1.0 1)" font-size="9.2" fill="#d6d6d6" text-anchor="end" stroke="#d6d6d6" stroke-width="0.22">0</text>
<line x1="740.8" y1="594.2" x2="747.6" y2="594.2" stroke="#a8a8a8" stroke-width="0.9"/>
<line x1="792.4" y1="594.2" x2="796.1" y2="594.2" stroke="#a8a8a8" stroke-width="0.9"/>
<text transform="translate(742.9 618.8) scale(1.0 1)" font-size="9.2" fill="#d6d6d6" text-anchor="end" stroke="#d6d6d6" stroke-width="0.22">10</text>
<line x1="745.4" y1="615.5" x2="747.6" y2="615.5" stroke="#a8a8a8" stroke-width="0.9"/>
<line x1="792.4" y1="615.5" x2="794.8" y2="615.5" stroke="#a8a8a8" stroke-width="0.9"/>
<text transform="translate(742.9 639.9) scale(1.0 1)" font-size="9.2" fill="#d6d6d6" text-anchor="end" stroke="#d6d6d6" stroke-width="0.22">20</text>
<line x1="745.4" y1="636.6" x2="747.6" y2="636.6" stroke="#a8a8a8" stroke-width="0.9"/>
<line x1="792.4" y1="636.6" x2="794.8" y2="636.6" stroke="#a8a8a8" stroke-width="0.9"/>
<text transform="translate(742.9 661.1) scale(1.0 1)" font-size="9.2" fill="#d6d6d6" text-anchor="end" stroke="#d6d6d6" stroke-width="0.22">30</text>
<line x1="745.4" y1="657.8" x2="747.6" y2="657.8" stroke="#a8a8a8" stroke-width="0.9"/>
<line x1="792.4" y1="657.8" x2="794.8" y2="657.8" stroke="#a8a8a8" stroke-width="0.9"/>
<text transform="translate(742.9 681.6) scale(1.0 1)" font-size="9.2" fill="#d6d6d6" text-anchor="end" stroke="#d6d6d6" stroke-width="0.22">40</text>
<line x1="745.4" y1="678.3" x2="747.6" y2="678.3" stroke="#a8a8a8" stroke-width="0.9"/>
<line x1="792.4" y1="678.3" x2="794.8" y2="678.3" stroke="#a8a8a8" stroke-width="0.9"/>
<text transform="translate(740.2 693.2) scale(1.0 1)" font-size="11.5" fill="#d6d6d6" text-anchor="end" stroke="#d6d6d6" stroke-width="0.22">∞</text>
<text transform="translate(814.5 709.7) scale(0.97 1)" font-size="10.5" fill="#c8c8c8" text-anchor="end" stroke="#c8c8c8" stroke-width="0.22">-8.9 dB</text>
<rect x="819.7" y="582.7" width="109.8" height="134.4" fill="#1c1c1c"/>
<rect x="860.1" y="590.6" width="20.3" height="102.4" fill="#2f2f2f"/>
<rect x="860.1" y="637" width="20.3" height="56" fill="url(#gMeter)"/>
<rect x="860.1" y="628" width="20.3" height="9" fill="#ffdf3a"/>
<rect x="860.1" y="625.7" width="20.3" height="2.3" fill="#ff7d0e"/>
<rect x="860.1" y="617.4" width="20.3" height="2.5" fill="#ff7300"/>
<rect x="881.6" y="590.6" width="20.3" height="102.4" fill="#2f2f2f"/>
<rect x="881.6" y="637" width="20.3" height="56" fill="url(#gMeter)"/>
<rect x="881.6" y="632.4" width="20.3" height="4.6" fill="#ffdf3a"/>
<rect x="881.6" y="623.4" width="20.3" height="2.5" fill="#ff7300"/>
<text transform="translate(848.5 597.5) scale(1.0 1)" font-size="9.2" fill="#d6d6d6" text-anchor="end" stroke="#d6d6d6" stroke-width="0.22">0</text>
<line x1="851.7" y1="594.2" x2="858.5" y2="594.2" stroke="#a8a8a8" stroke-width="0.9"/>
<line x1="903.3" y1="594.2" x2="907" y2="594.2" stroke="#a8a8a8" stroke-width="0.9"/>
<text transform="translate(853.8 618.8) scale(1.0 1)" font-size="9.2" fill="#d6d6d6" text-anchor="end" stroke="#d6d6d6" stroke-width="0.22">10</text>
<line x1="856.3" y1="615.5" x2="858.5" y2="615.5" stroke="#a8a8a8" stroke-width="0.9"/>
<line x1="903.3" y1="615.5" x2="905.7" y2="615.5" stroke="#a8a8a8" stroke-width="0.9"/>
<text transform="translate(853.8 639.9) scale(1.0 1)" font-size="9.2" fill="#d6d6d6" text-anchor="end" stroke="#d6d6d6" stroke-width="0.22">20</text>
<line x1="856.3" y1="636.6" x2="858.5" y2="636.6" stroke="#a8a8a8" stroke-width="0.9"/>
<line x1="903.3" y1="636.6" x2="905.7" y2="636.6" stroke="#a8a8a8" stroke-width="0.9"/>
<text transform="translate(853.8 661.1) scale(1.0 1)" font-size="9.2" fill="#d6d6d6" text-anchor="end" stroke="#d6d6d6" stroke-width="0.22">30</text>
<line x1="856.3" y1="657.8" x2="858.5" y2="657.8" stroke="#a8a8a8" stroke-width="0.9"/>
<line x1="903.3" y1="657.8" x2="905.7" y2="657.8" stroke="#a8a8a8" stroke-width="0.9"/>
<text transform="translate(853.8 681.6) scale(1.0 1)" font-size="9.2" fill="#d6d6d6" text-anchor="end" stroke="#d6d6d6" stroke-width="0.22">40</text>
<line x1="856.3" y1="678.3" x2="858.5" y2="678.3" stroke="#a8a8a8" stroke-width="0.9"/>
<line x1="903.3" y1="678.3" x2="905.7" y2="678.3" stroke="#a8a8a8" stroke-width="0.9"/>
<text transform="translate(851.1 693.2) scale(1.0 1)" font-size="11.5" fill="#d6d6d6" text-anchor="end" stroke="#d6d6d6" stroke-width="0.22">∞</text>
<text transform="translate(925.4 709.7) scale(0.97 1)" font-size="10.5" fill="#c8c8c8" text-anchor="end" stroke="#c8c8c8" stroke-width="0.22">-9.6 dB</text>
<rect x="930.6" y="582.7" width="109.8" height="134.4" fill="#1c1c1c"/>
<rect x="971" y="590.6" width="20.3" height="102.4" fill="#2f2f2f"/>
<rect x="992.5" y="590.6" width="20.3" height="102.4" fill="#2f2f2f"/>
<rect x="992.5" y="692.2" width="20.3" height="0.8" fill="url(#gMeter)"/>
<text transform="translate(959.4 597.5) scale(1.0 1)" font-size="9.2" fill="#d6d6d6" text-anchor="end" stroke="#d6d6d6" stroke-width="0.22">0</text>
<line x1="962.6" y1="594.2" x2="969.4" y2="594.2" stroke="#a8a8a8" stroke-width="0.9"/>
<line x1="1014.2" y1="594.2" x2="1017.9" y2="594.2" stroke="#a8a8a8" stroke-width="0.9"/>
<text transform="translate(964.7 618.8) scale(1.0 1)" font-size="9.2" fill="#d6d6d6" text-anchor="end" stroke="#d6d6d6" stroke-width="0.22">10</text>
<line x1="967.2" y1="615.5" x2="969.4" y2="615.5" stroke="#a8a8a8" stroke-width="0.9"/>
<line x1="1014.2" y1="615.5" x2="1016.6" y2="615.5" stroke="#a8a8a8" stroke-width="0.9"/>
<text transform="translate(964.7 639.9) scale(1.0 1)" font-size="9.2" fill="#d6d6d6" text-anchor="end" stroke="#d6d6d6" stroke-width="0.22">20</text>
<line x1="967.2" y1="636.6" x2="969.4" y2="636.6" stroke="#a8a8a8" stroke-width="0.9"/>
<line x1="1014.2" y1="636.6" x2="1016.6" y2="636.6" stroke="#a8a8a8" stroke-width="0.9"/>
<text transform="translate(964.7 661.1) scale(1.0 1)" font-size="9.2" fill="#d6d6d6" text-anchor="end" stroke="#d6d6d6" stroke-width="0.22">30</text>
<line x1="967.2" y1="657.8" x2="969.4" y2="657.8" stroke="#a8a8a8" stroke-width="0.9"/>
<line x1="1014.2" y1="657.8" x2="1016.6" y2="657.8" stroke="#a8a8a8" stroke-width="0.9"/>
<text transform="translate(964.7 681.6) scale(1.0 1)" font-size="9.2" fill="#d6d6d6" text-anchor="end" stroke="#d6d6d6" stroke-width="0.22">40</text>
<line x1="967.2" y1="678.3" x2="969.4" y2="678.3" stroke="#a8a8a8" stroke-width="0.9"/>
<line x1="1014.2" y1="678.3" x2="1016.6" y2="678.3" stroke="#a8a8a8" stroke-width="0.9"/>
<text transform="translate(962 693.2) scale(1.0 1)" font-size="11.5" fill="#d6d6d6" text-anchor="end" stroke="#d6d6d6" stroke-width="0.22">∞</text>
<text transform="translate(1036.3 709.7) scale(0.97 1)" font-size="10.5" fill="#c8c8c8" text-anchor="end" stroke="#c8c8c8" stroke-width="0.22">-28.3 dB</text>
<rect x="1041.5" y="582.7" width="109.8" height="134.4" fill="#1c1c1c"/>
<rect x="1081.9" y="590.6" width="20.3" height="102.4" fill="#2f2f2f"/>
<rect x="1081.9" y="649" width="20.3" height="44" fill="url(#gMeter)"/>
<rect x="1081.9" y="639.4" width="20.3" height="2.5" fill="#8ccf2a"/>
<rect x="1103.4" y="590.6" width="20.3" height="102.4" fill="#2f2f2f"/>
<rect x="1103.4" y="637" width="20.3" height="56" fill="url(#gMeter)"/>
<rect x="1103.4" y="636.7" width="20.3" height="0.3" fill="#ffdf3a"/>
<rect x="1103.4" y="630.6" width="20.3" height="2.5" fill="#ffe23a"/>
<text transform="translate(1070.3 597.5) scale(1.0 1)" font-size="9.2" fill="#d6d6d6" text-anchor="end" stroke="#d6d6d6" stroke-width="0.22">0</text>
<line x1="1073.5" y1="594.2" x2="1080.3" y2="594.2" stroke="#a8a8a8" stroke-width="0.9"/>
<line x1="1125.1" y1="594.2" x2="1128.8" y2="594.2" stroke="#a8a8a8" stroke-width="0.9"/>
<text transform="translate(1075.6 618.8) scale(1.0 1)" font-size="9.2" fill="#d6d6d6" text-anchor="end" stroke="#d6d6d6" stroke-width="0.22">10</text>
<line x1="1078.1" y1="615.5" x2="1080.3" y2="615.5" stroke="#a8a8a8" stroke-width="0.9"/>
<line x1="1125.1" y1="615.5" x2="1127.5" y2="615.5" stroke="#a8a8a8" stroke-width="0.9"/>
<text transform="translate(1075.6 639.9) scale(1.0 1)" font-size="9.2" fill="#d6d6d6" text-anchor="end" stroke="#d6d6d6" stroke-width="0.22">20</text>
<line x1="1078.1" y1="636.6" x2="1080.3" y2="636.6" stroke="#a8a8a8" stroke-width="0.9"/>
<line x1="1125.1" y1="636.6" x2="1127.5" y2="636.6" stroke="#a8a8a8" stroke-width="0.9"/>
<text transform="translate(1075.6 661.1) scale(1.0 1)" font-size="9.2" fill="#d6d6d6" text-anchor="end" stroke="#d6d6d6" stroke-width="0.22">30</text>
<line x1="1078.1" y1="657.8" x2="1080.3" y2="657.8" stroke="#a8a8a8" stroke-width="0.9"/>
<line x1="1125.1" y1="657.8" x2="1127.5" y2="657.8" stroke="#a8a8a8" stroke-width="0.9"/>
<text transform="translate(1075.6 681.6) scale(1.0 1)" font-size="9.2" fill="#d6d6d6" text-anchor="end" stroke="#d6d6d6" stroke-width="0.22">40</text>
<line x1="1078.1" y1="678.3" x2="1080.3" y2="678.3" stroke="#a8a8a8" stroke-width="0.9"/>
<line x1="1125.1" y1="678.3" x2="1127.5" y2="678.3" stroke="#a8a8a8" stroke-width="0.9"/>
<text transform="translate(1072.9 693.2) scale(1.0 1)" font-size="11.5" fill="#d6d6d6" text-anchor="end" stroke="#d6d6d6" stroke-width="0.22">∞</text>
<text transform="translate(1147.2 709.7) scale(0.97 1)" font-size="10.5" fill="#c8c8c8" text-anchor="end" stroke="#c8c8c8" stroke-width="0.22">-12.6 dB</text>
<rect x="1152.4" y="582.7" width="109.8" height="134.4" fill="#1c1c1c"/>
<rect x="1192.8" y="590.6" width="20.3" height="102.4" fill="#2f2f2f"/>
<rect x="1192.8" y="637" width="20.3" height="56" fill="url(#gMeter)"/>
<rect x="1192.8" y="630" width="20.3" height="7" fill="#ffdf3a"/>
<rect x="1192.8" y="614.2" width="20.3" height="2.5" fill="#ff7300"/>
<rect x="1214.3" y="590.6" width="20.3" height="102.4" fill="#2f2f2f"/>
<rect x="1214.3" y="637" width="20.3" height="56" fill="url(#gMeter)"/>
<rect x="1214.3" y="622.2" width="20.3" height="2.5" fill="#ff7300"/>
<text transform="translate(1181.2 597.5) scale(1.0 1)" font-size="9.2" fill="#d6d6d6" text-anchor="end" stroke="#d6d6d6" stroke-width="0.22">0</text>
<line x1="1184.4" y1="594.2" x2="1191.2" y2="594.2" stroke="#a8a8a8" stroke-width="0.9"/>
<line x1="1236" y1="594.2" x2="1239.7" y2="594.2" stroke="#a8a8a8" stroke-width="0.9"/>
<text transform="translate(1186.5 618.8) scale(1.0 1)" font-size="9.2" fill="#d6d6d6" text-anchor="end" stroke="#d6d6d6" stroke-width="0.22">10</text>
<line x1="1189" y1="615.5" x2="1191.2" y2="615.5" stroke="#a8a8a8" stroke-width="0.9"/>
<line x1="1236" y1="615.5" x2="1238.4" y2="615.5" stroke="#a8a8a8" stroke-width="0.9"/>
<text transform="translate(1186.5 639.9) scale(1.0 1)" font-size="9.2" fill="#d6d6d6" text-anchor="end" stroke="#d6d6d6" stroke-width="0.22">20</text>
<line x1="1189" y1="636.6" x2="1191.2" y2="636.6" stroke="#a8a8a8" stroke-width="0.9"/>
<line x1="1236" y1="636.6" x2="1238.4" y2="636.6" stroke="#a8a8a8" stroke-width="0.9"/>
<text transform="translate(1186.5 661.1) scale(1.0 1)" font-size="9.2" fill="#d6d6d6" text-anchor="end" stroke="#d6d6d6" stroke-width="0.22">30</text>
<line x1="1189" y1="657.8" x2="1191.2" y2="657.8" stroke="#a8a8a8" stroke-width="0.9"/>
<line x1="1236" y1="657.8" x2="1238.4" y2="657.8" stroke="#a8a8a8" stroke-width="0.9"/>
<text transform="translate(1186.5 681.6) scale(1.0 1)" font-size="9.2" fill="#d6d6d6" text-anchor="end" stroke="#d6d6d6" stroke-width="0.22">40</text>
<line x1="1189" y1="678.3" x2="1191.2" y2="678.3" stroke="#a8a8a8" stroke-width="0.9"/>
<line x1="1236" y1="678.3" x2="1238.4" y2="678.3" stroke="#a8a8a8" stroke-width="0.9"/>
<text transform="translate(1183.8 693.2) scale(1.0 1)" font-size="11.5" fill="#d6d6d6" text-anchor="end" stroke="#d6d6d6" stroke-width="0.22">∞</text>
<text transform="translate(1258.1 709.7) scale(0.97 1)" font-size="10.5" fill="#c8c8c8" text-anchor="end" stroke="#c8c8c8" stroke-width="0.22">-8.7 dB</text>
<rect x="1283.6" y="582.7" width="51.4" height="134.4" fill="#1c1c1c"/>
<g clip-path="url(#cpPR)">
<rect x="1309.5" y="590.6" width="20.3" height="102.4" fill="#2f2f2f"/>
<rect x="1309.5" y="683.7" width="20.3" height="9.3" fill="url(#gMeter)"/>
<rect x="1309.5" y="671" width="20.3" height="2.5" fill="#8ccf2a"/>
<rect x="1331" y="590.6" width="20.3" height="102.4" fill="#2f2f2f"/>
<rect x="1331" y="681" width="20.3" height="12" fill="url(#gMeter)"/>
<rect x="1331" y="675" width="20.3" height="2.5" fill="#8ccf2a"/>
<text transform="translate(1297.9 597.5) scale(1.0 1)" font-size="9.2" fill="#d6d6d6" text-anchor="end" stroke="#d6d6d6" stroke-width="0.22">0</text>
<line x1="1301.1" y1="594.2" x2="1307.9" y2="594.2" stroke="#a8a8a8" stroke-width="0.9"/>
<line x1="1352.7" y1="594.2" x2="1356.4" y2="594.2" stroke="#a8a8a8" stroke-width="0.9"/>
<text transform="translate(1303.2 618.8) scale(1.0 1)" font-size="9.2" fill="#d6d6d6" text-anchor="end" stroke="#d6d6d6" stroke-width="0.22">10</text>
<line x1="1305.7" y1="615.5" x2="1307.9" y2="615.5" stroke="#a8a8a8" stroke-width="0.9"/>
<line x1="1352.7" y1="615.5" x2="1355.1" y2="615.5" stroke="#a8a8a8" stroke-width="0.9"/>
<text transform="translate(1303.2 639.9) scale(1.0 1)" font-size="9.2" fill="#d6d6d6" text-anchor="end" stroke="#d6d6d6" stroke-width="0.22">20</text>
<line x1="1305.7" y1="636.6" x2="1307.9" y2="636.6" stroke="#a8a8a8" stroke-width="0.9"/>
<line x1="1352.7" y1="636.6" x2="1355.1" y2="636.6" stroke="#a8a8a8" stroke-width="0.9"/>
<text transform="translate(1303.2 661.1) scale(1.0 1)" font-size="9.2" fill="#d6d6d6" text-anchor="end" stroke="#d6d6d6" stroke-width="0.22">30</text>
<line x1="1305.7" y1="657.8" x2="1307.9" y2="657.8" stroke="#a8a8a8" stroke-width="0.9"/>
<line x1="1352.7" y1="657.8" x2="1355.1" y2="657.8" stroke="#a8a8a8" stroke-width="0.9"/>
<text transform="translate(1303.2 681.6) scale(1.0 1)" font-size="9.2" fill="#d6d6d6" text-anchor="end" stroke="#d6d6d6" stroke-width="0.22">40</text>
<line x1="1305.7" y1="678.3" x2="1307.9" y2="678.3" stroke="#a8a8a8" stroke-width="0.9"/>
<line x1="1352.7" y1="678.3" x2="1355.1" y2="678.3" stroke="#a8a8a8" stroke-width="0.9"/>
<text transform="translate(1300.5 693.2) scale(1.0 1)" font-size="11.5" fill="#d6d6d6" text-anchor="end" stroke="#d6d6d6" stroke-width="0.22">∞</text>
<text transform="translate(1359.1 709.7) scale(0.97 1)" font-size="10.5" fill="#c8c8c8" text-anchor="end" stroke="#c8c8c8" stroke-width="0.22">-33.1 dB</text>
</g>
<rect x="1336.3" y="582.7" width="80.1" height="134.4" fill="#1c1c1c"/>
<rect x="1362.2" y="590.6" width="20.3" height="102.4" fill="#2f2f2f"/>
<rect x="1362.2" y="637" width="20.3" height="56" fill="url(#gMeter)"/>
<rect x="1362.2" y="628" width="20.3" height="9" fill="#ffdf3a"/>
<rect x="1362.2" y="620.6" width="20.3" height="7.4" fill="#ff7d0e"/>
<rect x="1362.2" y="603" width="20.3" height="2.5" fill="#ff7300"/>
<rect x="1383.7" y="590.6" width="20.3" height="102.4" fill="#2f2f2f"/>
<rect x="1383.7" y="637" width="20.3" height="56" fill="url(#gMeter)"/>
<rect x="1383.7" y="628" width="20.3" height="9" fill="#ffdf3a"/>
<rect x="1383.7" y="626" width="20.3" height="2" fill="#ff7d0e"/>
<rect x="1383.7" y="610.8" width="20.3" height="2.5" fill="#ff7300"/>
<text transform="translate(1350.6 597.5) scale(1.0 1)" font-size="9.2" fill="#d6d6d6" text-anchor="end" stroke="#d6d6d6" stroke-width="0.22">0</text>
<line x1="1353.8" y1="594.2" x2="1360.6" y2="594.2" stroke="#a8a8a8" stroke-width="0.9"/>
<line x1="1405.4" y1="594.2" x2="1409.1" y2="594.2" stroke="#a8a8a8" stroke-width="0.9"/>
<text transform="translate(1355.9 618.8) scale(1.0 1)" font-size="9.2" fill="#d6d6d6" text-anchor="end" stroke="#d6d6d6" stroke-width="0.22">10</text>
<line x1="1358.4" y1="615.5" x2="1360.6" y2="615.5" stroke="#a8a8a8" stroke-width="0.9"/>
<line x1="1405.4" y1="615.5" x2="1407.8" y2="615.5" stroke="#a8a8a8" stroke-width="0.9"/>
<text transform="translate(1355.9 639.9) scale(1.0 1)" font-size="9.2" fill="#d6d6d6" text-anchor="end" stroke="#d6d6d6" stroke-width="0.22">20</text>
<line x1="1358.4" y1="636.6" x2="1360.6" y2="636.6" stroke="#a8a8a8" stroke-width="0.9"/>
<line x1="1405.4" y1="636.6" x2="1407.8" y2="636.6" stroke="#a8a8a8" stroke-width="0.9"/>
<text transform="translate(1355.9 661.1) scale(1.0 1)" font-size="9.2" fill="#d6d6d6" text-anchor="end" stroke="#d6d6d6" stroke-width="0.22">30</text>
<line x1="1358.4" y1="657.8" x2="1360.6" y2="657.8" stroke="#a8a8a8" stroke-width="0.9"/>
<line x1="1405.4" y1="657.8" x2="1407.8" y2="657.8" stroke="#a8a8a8" stroke-width="0.9"/>
<text transform="translate(1355.9 681.6) scale(1.0 1)" font-size="9.2" fill="#d6d6d6" text-anchor="end" stroke="#d6d6d6" stroke-width="0.22">40</text>
<line x1="1358.4" y1="678.3" x2="1360.6" y2="678.3" stroke="#a8a8a8" stroke-width="0.9"/>
<line x1="1405.4" y1="678.3" x2="1407.8" y2="678.3" stroke="#a8a8a8" stroke-width="0.9"/>
<text transform="translate(1353.2 693.2) scale(1.0 1)" font-size="11.5" fill="#d6d6d6" text-anchor="end" stroke="#d6d6d6" stroke-width="0.22">∞</text>
<text transform="translate(1412.3 709.7) scale(0.97 1)" font-size="10.5" fill="#c8c8c8" text-anchor="end" stroke="#c8c8c8" stroke-width="0.22">-1.9 dB</text>
<rect x="73.3" y="718" width="109.9" height="135.6" fill="#2e2e2e"/>
<clipPath id="kc0"><rect x="73.3" y="718" width="109.9" height="135.6"/></clipPath><g clip-path="url(#kc0)">
<path d="M83.14 746.36A12.1 12.1 0 1 1 100.26 746.36" fill="none" stroke="#505050" stroke-width="1.9"/>
<path d="M83.14 746.36A12.1 12.1 0 1 1 103.8 737.8" fill="none" stroke="#ff8a1a" stroke-width="2.2"/>
<circle cx="91.7" cy="737.8" r="8.1" fill="url(#gKnob)" stroke="#2b2b2b" stroke-width="0.7"/>
<line x1="94.94" y1="737.8" x2="99.39" y2="737.8" stroke="#f4f4f4" stroke-width="2.2"/>
<text transform="translate(110.7 739.8) scale(0.93 1)" font-size="9" fill="#e8e8e8" stroke="#e8e8e8" stroke-width="0.22">BD Tone</text>
<path d="M83.14 773.53A12.1 12.1 0 1 1 100.26 773.53" fill="none" stroke="#505050" stroke-width="1.9"/>
<path d="M83.14 773.53A12.1 12.1 0 0 1 81.79 758.03" fill="none" stroke="#ff8a1a" stroke-width="2.2"/>
<circle cx="91.7" cy="764.97" r="8.1" fill="url(#gKnob)" stroke="#2b2b2b" stroke-width="0.7"/>
<line x1="89.05" y1="763.11" x2="85.4" y2="760.56" stroke="#f4f4f4" stroke-width="2.2"/>
<text transform="translate(110.7 766.97) scale(0.93 1)" font-size="9" fill="#e8e8e8" stroke="#e8e8e8" stroke-width="0.22">SD Tone</text>
<path d="M83.14 800.7A12.1 12.1 0 1 1 100.26 800.7" fill="none" stroke="#505050" stroke-width="1.9"/>
<circle cx="91.7" cy="792.14" r="8.1" fill="url(#gKnob)" stroke="#2b2b2b" stroke-width="0.7"/>
<line x1="89.41" y1="794.43" x2="86.26" y2="797.58" stroke="#f4f4f4" stroke-width="2.2"/>
<text transform="translate(110.7 794.14) scale(0.93 1)" font-size="9" fill="#e8e8e8" stroke="#e8e8e8" stroke-width="0.22">MT Tuning</text>
<path d="M83.14 827.87A12.1 12.1 0 1 1 100.26 827.87" fill="none" stroke="#505050" stroke-width="1.9"/>
<circle cx="91.7" cy="819.31" r="8.1" fill="url(#gKnob)" stroke="#2b2b2b" stroke-width="0.7"/>
<line x1="89.41" y1="821.6" x2="86.26" y2="824.75" stroke="#f4f4f4" stroke-width="2.2"/>
<text transform="translate(110.7 821.31) scale(0.93 1)" font-size="9" fill="#e8e8e8" stroke="#e8e8e8" stroke-width="0.22">HT Tuning</text>
<path d="M83.14 855.04A12.1 12.1 0 1 1 100.26 855.04" fill="none" stroke="#505050" stroke-width="1.9"/>
<path d="M83.14 855.04A12.1 12.1 0 0 1 91.7 834.38" fill="none" stroke="#ff8a1a" stroke-width="2.2"/>
<circle cx="91.7" cy="846.48" r="8.1" fill="url(#gKnob)" stroke="#2b2b2b" stroke-width="0.7"/>
<line x1="91.7" y1="843.24" x2="91.7" y2="838.78" stroke="#f4f4f4" stroke-width="2.2"/>
<text transform="translate(110.7 848.48) scale(0.93 1)" font-size="9" fill="#e8e8e8" stroke="#e8e8e8" stroke-width="0.22">BD Decay</text>
<rect x="73.3" y="832" width="109.9" height="22" fill="url(#gFadeK)"/>
<path d="M124.2 839.6H131.2L127.7 844.8Z" fill="#f0f0f0"/>
</g>
<rect x="184.3" y="718" width="109.9" height="135.6" fill="#2e2e2e"/>
<clipPath id="kc1"><rect x="184.3" y="718" width="109.9" height="135.6"/></clipPath><g clip-path="url(#kc1)">
<path d="M194.14 746.36A12.1 12.1 0 1 1 211.26 746.36" fill="none" stroke="#505050" stroke-width="1.9"/>
<path d="M194.14 746.36A12.1 12.1 0 1 1 211.26 746.36" fill="none" stroke="#ff8a1a" stroke-width="2.2"/>
<circle cx="202.7" cy="737.8" r="8.1" fill="url(#gKnob)" stroke="#2b2b2b" stroke-width="0.7"/>
<line x1="204.99" y1="740.09" x2="208.14" y2="743.24" stroke="#f4f4f4" stroke-width="2.2"/>
<text transform="translate(221.7 739.8) scale(0.93 1)" font-size="9" fill="#e8e8e8" stroke="#e8e8e8" stroke-width="0.22">LoPass</text>
<path d="M194.14 773.53A12.1 12.1 0 1 1 211.26 773.53" fill="none" stroke="#505050" stroke-width="1.9"/>
<circle cx="202.7" cy="764.97" r="8.1" fill="url(#gKnob)" stroke="#2b2b2b" stroke-width="0.7"/>
<line x1="200.41" y1="767.26" x2="197.26" y2="770.41" stroke="#f4f4f4" stroke-width="2.2"/>
<text transform="translate(221.7 766.97) scale(0.93 1)" font-size="9" fill="#e8e8e8" stroke="#e8e8e8" stroke-width="0.22">HiPass</text>
<path d="M194.14 800.7A12.1 12.1 0 1 1 211.26 800.7" fill="none" stroke="#505050" stroke-width="1.9"/>
<path d="M201.65 780.09A12.1 12.1 0 0 1 203.75 780.09" fill="none" stroke="#ff8a1a" stroke-width="2.2"/>
<circle cx="202.7" cy="792.14" r="8.1" fill="url(#gKnob)" stroke="#2b2b2b" stroke-width="0.7"/>
<line x1="202.7" y1="788.9" x2="202.7" y2="784.44" stroke="#f4f4f4" stroke-width="2.2"/>
<text transform="translate(221.7 794.14) scale(0.93 1)" font-size="9" fill="#e8e8e8" stroke="#e8e8e8" stroke-width="0.22">Attack</text>
<path d="M194.14 827.87A12.1 12.1 0 1 1 211.26 827.87" fill="none" stroke="#505050" stroke-width="1.9"/>
<path d="M201.65 807.26A12.1 12.1 0 0 1 203.75 807.26" fill="none" stroke="#ff8a1a" stroke-width="2.2"/>
<circle cx="202.7" cy="819.31" r="8.1" fill="url(#gKnob)" stroke="#2b2b2b" stroke-width="0.7"/>
<line x1="202.7" y1="816.07" x2="202.7" y2="811.61" stroke="#f4f4f4" stroke-width="2.2"/>
<text transform="translate(221.7 821.31) scale(0.93 1)" font-size="9" fill="#e8e8e8" stroke="#e8e8e8" stroke-width="0.22">Sustain</text>
<path d="M194.14 855.04A12.1 12.1 0 1 1 211.26 855.04" fill="none" stroke="#505050" stroke-width="1.9"/>
<circle cx="202.7" cy="846.48" r="8.1" fill="url(#gKnob)" stroke="#2b2b2b" stroke-width="0.7"/>
<line x1="200.41" y1="848.77" x2="197.26" y2="851.92" stroke="#f4f4f4" stroke-width="2.2"/>
<circle cx="212.46" cy="836.72" r="2.9" fill="#8a8a8a" stroke="#f4f4f4" stroke-width="1.3"/>
<text transform="translate(221.7 848.48) scale(0.93 1)" font-size="9" fill="#e8e8e8" stroke="#e8e8e8" stroke-width="0.22">FreqShift</text>
<rect x="184.3" y="832" width="109.9" height="22" fill="url(#gFadeK)"/>
<path d="M235.7 839.6H242.7L239.2 844.8Z" fill="#f0f0f0"/>
</g>
<rect x="295.4" y="718" width="79.6" height="135.6" fill="#2e2e2e"/>
<path d="M330.7 786.6H339.3M335 782.3V790.9" fill="none" stroke="#a8a8a8" stroke-width="1.3"/>
<rect x="376.1" y="718" width="109.8" height="135.6" fill="#2e2e2e"/>
<clipPath id="kc3"><rect x="376.1" y="718" width="109.8" height="135.6"/></clipPath><g clip-path="url(#kc3)">
<path d="M385.94 746.36A12.1 12.1 0 1 1 403.06 746.36" fill="none" stroke="#505050" stroke-width="1.9"/>
<path d="M385.94 746.36A12.1 12.1 0 0 1 394.5 725.7" fill="none" stroke="#ff8a1a" stroke-width="2.2"/>
<circle cx="394.5" cy="737.8" r="8.1" fill="url(#gKnob)" stroke="#2b2b2b" stroke-width="0.7"/>
<line x1="394.5" y1="734.56" x2="394.5" y2="730.1" stroke="#f4f4f4" stroke-width="2.2"/>
<text transform="translate(413.5 739.8) scale(0.93 1)" font-size="9" fill="#e8e8e8" stroke="#e8e8e8" stroke-width="0.22">Lo Thresh</text>
<path d="M385.94 773.53A12.1 12.1 0 1 1 403.06 773.53" fill="none" stroke="#505050" stroke-width="1.9"/>
<path d="M393.45 752.92A12.1 12.1 0 0 1 395.55 752.92" fill="none" stroke="#ff8a1a" stroke-width="2.2"/>
<circle cx="394.5" cy="764.97" r="8.1" fill="url(#gKnob)" stroke="#2b2b2b" stroke-width="0.7"/>
<line x1="394.5" y1="761.73" x2="394.5" y2="757.27" stroke="#f4f4f4" stroke-width="2.2"/>
<text transform="translate(413.5 766.97) scale(0.93 1)" font-size="9" fill="#e8e8e8" stroke="#e8e8e8" stroke-width="0.22">Lo Ratio</text>
<path d="M385.94 800.7A12.1 12.1 0 1 1 403.06 800.7" fill="none" stroke="#505050" stroke-width="1.9"/>
<path d="M394.5 780.04A12.1 12.1 0 0 1 406.6 792.14" fill="none" stroke="#ff8a1a" stroke-width="2.2"/>
<circle cx="394.5" cy="792.14" r="8.1" fill="url(#gKnob)" stroke="#2b2b2b" stroke-width="0.7"/>
<line x1="397.74" y1="792.14" x2="402.19" y2="792.14" stroke="#f4f4f4" stroke-width="2.2"/>
<text transform="translate(413.5 794.14) scale(0.93 1)" font-size="9" fill="#e8e8e8" stroke="#e8e8e8" stroke-width="0.22">1 Gain</text>
<path d="M385.94 827.87A12.1 12.1 0 1 1 403.06 827.87" fill="none" stroke="#505050" stroke-width="1.9"/>
<path d="M385.94 827.87A12.1 12.1 0 0 1 398.64 807.94" fill="none" stroke="#ff8a1a" stroke-width="2.2"/>
<circle cx="394.5" cy="819.31" r="8.1" fill="url(#gKnob)" stroke="#2b2b2b" stroke-width="0.7"/>
<line x1="395.61" y1="816.27" x2="397.13" y2="812.08" stroke="#f4f4f4" stroke-width="2.2"/>
<text transform="translate(413.5 821.31) scale(0.93 1)" font-size="9" fill="#e8e8e8" stroke="#e8e8e8" stroke-width="0.22">Plate Reverb</text>
<path d="M385.94 855.04A12.1 12.1 0 1 1 403.06 855.04" fill="none" stroke="#505050" stroke-width="1.9"/>
<circle cx="394.5" cy="846.48" r="8.1" fill="url(#gKnob)" stroke="#2b2b2b" stroke-width="0.7"/>
<line x1="392.21" y1="848.77" x2="389.06" y2="851.92" stroke="#f4f4f4" stroke-width="2.2"/>
<text transform="translate(413.5 848.48) scale(0.93 1)" font-size="9" fill="#e8e8e8" stroke="#e8e8e8" stroke-width="0.22">Dark Delay</text>
<rect x="376.1" y="832" width="109.8" height="22" fill="url(#gFadeK)"/>
<path d="M427.2 839.6H434.2L430.7 844.8Z" fill="#f0f0f0"/>
</g>
<rect x="487" y="718" width="109.8" height="135.6" fill="#2e2e2e"/>
<clipPath id="kc4"><rect x="487" y="718" width="109.8" height="135.6"/></clipPath><g clip-path="url(#kc4)">
<path d="M496.84 746.36A12.1 12.1 0 1 1 513.96 746.36" fill="none" stroke="#505050" stroke-width="1.9"/>
<path d="M496.84 746.36A12.1 12.1 0 1 1 517.32 735.7" fill="none" stroke="#ff8a1a" stroke-width="2.2"/>
<circle cx="505.4" cy="737.8" r="8.1" fill="url(#gKnob)" stroke="#2b2b2b" stroke-width="0.7"/>
<line x1="508.59" y1="737.24" x2="512.98" y2="736.46" stroke="#f4f4f4" stroke-width="2.2"/>
<text transform="translate(524.4 739.8) scale(0.93 1)" font-size="9" fill="#e8e8e8" stroke="#e8e8e8" stroke-width="0.22">Frequency</text>
<path d="M496.84 773.53A12.1 12.1 0 1 1 513.96 773.53" fill="none" stroke="#505050" stroke-width="1.9"/>
<path d="M504.35 752.92A12.1 12.1 0 0 1 506.45 752.92" fill="none" stroke="#ff8a1a" stroke-width="2.2"/>
<circle cx="505.4" cy="764.97" r="8.1" fill="url(#gKnob)" stroke="#2b2b2b" stroke-width="0.7"/>
<line x1="505.4" y1="761.73" x2="505.4" y2="757.27" stroke="#f4f4f4" stroke-width="2.2"/>
<text transform="translate(524.4 766.97) scale(0.93 1)" font-size="9" fill="#e8e8e8" stroke="#e8e8e8" stroke-width="0.22">RM Gain</text>
<path d="M496.84 800.7A12.1 12.1 0 1 1 513.96 800.7" fill="none" stroke="#505050" stroke-width="1.9"/>
<path d="M496.84 800.7A12.1 12.1 0 0 1 504.35 780.09" fill="none" stroke="#ff8a1a" stroke-width="2.2"/>
<circle cx="505.4" cy="792.14" r="8.1" fill="url(#gKnob)" stroke="#2b2b2b" stroke-width="0.7"/>
<line x1="505.12" y1="788.91" x2="504.73" y2="784.47" stroke="#f4f4f4" stroke-width="2.2"/>
<text transform="translate(524.4 794.14) scale(0.93 1)" font-size="9" fill="#e8e8e8" stroke="#e8e8e8" stroke-width="0.22">Mix</text>
<path d="M496.84 827.87A12.1 12.1 0 1 1 513.96 827.87" fill="none" stroke="#505050" stroke-width="1.9"/>
<circle cx="505.4" cy="819.31" r="8.1" fill="url(#gKnob)" stroke="#2b2b2b" stroke-width="0.7"/>
<line x1="503.11" y1="821.6" x2="499.96" y2="824.75" stroke="#f4f4f4" stroke-width="2.2"/>
<text transform="translate(524.4 821.31) scale(0.93 1)" font-size="9" fill="#e8e8e8" stroke="#e8e8e8" stroke-width="0.22">Plate Reverb</text>
<path d="M496.84 855.04A12.1 12.1 0 1 1 513.96 855.04" fill="none" stroke="#505050" stroke-width="1.9"/>
<path d="M496.84 855.04A12.1 12.1 0 0 1 494.03 842.34" fill="none" stroke="#ff8a1a" stroke-width="2.2"/>
<circle cx="505.4" cy="846.48" r="8.1" fill="url(#gKnob)" stroke="#2b2b2b" stroke-width="0.7"/>
<line x1="502.36" y1="845.37" x2="498.17" y2="843.85" stroke="#f4f4f4" stroke-width="2.2"/>
<text transform="translate(524.4 848.48) scale(0.93 1)" font-size="9" fill="#e8e8e8" stroke="#e8e8e8" stroke-width="0.22">Dark Delay</text>
<rect x="487" y="832" width="109.8" height="22" fill="url(#gFadeK)"/>
<path d="M538.1 839.6H545.1L541.6 844.8Z" fill="#f0f0f0"/>
</g>
<rect x="597.9" y="718" width="109.8" height="135.6" fill="#2e2e2e"/>
<clipPath id="kc5"><rect x="597.9" y="718" width="109.8" height="135.6"/></clipPath><g clip-path="url(#kc5)">
<path d="M607.74 746.36A12.1 12.1 0 1 1 624.86 746.36" fill="none" stroke="#505050" stroke-width="1.9"/>
<path d="M607.74 746.36A12.1 12.1 0 1 1 627.27 732.69" fill="none" stroke="#ff8a1a" stroke-width="2.2"/>
<circle cx="616.3" cy="737.8" r="8.1" fill="url(#gKnob)" stroke="#2b2b2b" stroke-width="0.7"/>
<line x1="619.24" y1="736.43" x2="623.27" y2="734.55" stroke="#f4f4f4" stroke-width="2.2"/>
<text transform="translate(635.3 739.8) scale(0.93 1)" font-size="9" fill="#e8e8e8" stroke="#e8e8e8" stroke-width="0.22">Cutoff</text>
<path d="M607.74 773.53A12.1 12.1 0 1 1 624.86 773.53" fill="none" stroke="#505050" stroke-width="1.9"/>
<path d="M607.74 773.53A12.1 12.1 0 0 1 614.2 753.05" fill="none" stroke="#ff8a1a" stroke-width="2.2"/>
<path d="M614.2 753.05A12.1 12.1 0 0 1 624.86 756.41" fill="none" stroke="#35c0ee" stroke-width="2.2"/>
<circle cx="616.3" cy="764.97" r="8.1" fill="url(#gKnob)" stroke="#2b2b2b" stroke-width="0.7"/>
<line x1="615.74" y1="761.78" x2="614.96" y2="757.39" stroke="#f4f4f4" stroke-width="2.2"/>
<circle cx="625.28" cy="755.99" r="2.9" fill="#777" stroke="#f4f4f4" stroke-width="1.3"/>
<text transform="translate(635.3 766.97) scale(0.93 1)" font-size="9" fill="#e8e8e8" stroke="#e8e8e8" stroke-width="0.22">Index</text>
<path d="M607.74 800.7A12.1 12.1 0 1 1 624.86 800.7" fill="none" stroke="#505050" stroke-width="1.9"/>
<path d="M607.74 800.7A12.1 12.1 0 0 1 605.08 796.67" fill="none" stroke="#ff8a1a" stroke-width="2.2"/>
<circle cx="616.3" cy="792.14" r="8.1" fill="url(#gKnob)" stroke="#2b2b2b" stroke-width="0.7"/>
<line x1="613.3" y1="793.35" x2="609.17" y2="795.02" stroke="#f4f4f4" stroke-width="2.2"/>
<text transform="translate(635.3 794.14) scale(0.93 1)" font-size="9" fill="#e8e8e8" stroke="#e8e8e8" stroke-width="0.22">Osc/Sub</text>
<path d="M607.74 827.87A12.1 12.1 0 1 1 624.86 827.87" fill="none" stroke="#505050" stroke-width="1.9"/>
<path d="M607.74 827.87A12.1 12.1 0 0 1 604.61 822.44" fill="none" stroke="#ff8a1a" stroke-width="2.2"/>
<circle cx="616.3" cy="819.31" r="8.1" fill="url(#gKnob)" stroke="#2b2b2b" stroke-width="0.7"/>
<line x1="613.17" y1="820.15" x2="608.87" y2="821.3" stroke="#f4f4f4" stroke-width="2.2"/>
<text transform="translate(635.3 821.31) scale(0.93 1)" font-size="9" fill="#e8e8e8" stroke="#e8e8e8" stroke-width="0.22">Attack</text>
<path d="M607.74 855.04A12.1 12.1 0 1 1 624.86 855.04" fill="none" stroke="#505050" stroke-width="1.9"/>
<path d="M607.74 855.04A12.1 12.1 0 0 1 619.43 834.79" fill="none" stroke="#ff8a1a" stroke-width="2.2"/>
<circle cx="616.3" cy="846.48" r="8.1" fill="url(#gKnob)" stroke="#2b2b2b" stroke-width="0.7"/>
<line x1="617.14" y1="843.35" x2="618.29" y2="839.05" stroke="#f4f4f4" stroke-width="2.2"/>
<text transform="translate(635.3 848.48) scale(0.93 1)" font-size="9" fill="#e8e8e8" stroke="#e8e8e8" stroke-width="0.22">Release</text>
<rect x="597.9" y="832" width="109.8" height="22" fill="url(#gFadeK)"/>
<path d="M649 839.6H656L652.5 844.8Z" fill="#f0f0f0"/>
</g>
<rect x="708.8" y="718" width="109.8" height="135.6" fill="#2e2e2e"/>
<path d="M759 786.6H767.6M763.3 782.3V790.9" fill="none" stroke="#a8a8a8" stroke-width="1.3"/>
<rect x="819.7" y="718" width="109.8" height="135.6" fill="#2e2e2e"/>
<clipPath id="kc7"><rect x="819.7" y="718" width="109.8" height="135.6"/></clipPath><g clip-path="url(#kc7)">
<path d="M829.54 746.36A12.1 12.1 0 1 1 846.66 746.36" fill="none" stroke="#505050" stroke-width="1.9"/>
<path d="M837.05 725.75A12.1 12.1 0 0 1 839.15 725.75" fill="none" stroke="#ff8a1a" stroke-width="2.2"/>
<circle cx="838.1" cy="737.8" r="8.1" fill="url(#gKnob)" stroke="#2b2b2b" stroke-width="0.7"/>
<line x1="838.1" y1="734.56" x2="838.1" y2="730.1" stroke="#f4f4f4" stroke-width="2.2"/>
<text transform="translate(857.1 739.8) scale(0.93 1)" font-size="9" fill="#e8e8e8" stroke="#e8e8e8" stroke-width="0.22">Osc1Pitch</text>
<path d="M829.54 773.53A12.1 12.1 0 1 1 846.66 773.53" fill="none" stroke="#505050" stroke-width="1.9"/>
<path d="M829.54 773.53A12.1 12.1 0 0 1 834.97 753.28" fill="none" stroke="#ff8a1a" stroke-width="2.2"/>
<circle cx="838.1" cy="764.97" r="8.1" fill="url(#gKnob)" stroke="#2b2b2b" stroke-width="0.7"/>
<line x1="835.81" y1="767.26" x2="832.66" y2="770.41" stroke="#f4f4f4" stroke-width="2.2"/>
<text transform="translate(857.1 766.97) scale(0.93 1)" font-size="9" fill="#e8e8e8" stroke="#e8e8e8" stroke-width="0.22">1/2 Mix</text>
<path d="M829.54 800.7A12.1 12.1 0 1 1 846.66 800.7" fill="none" stroke="#505050" stroke-width="1.9"/>
<circle cx="838.1" cy="792.14" r="8.1" fill="url(#gKnob)" stroke="#2b2b2b" stroke-width="0.7"/>
<line x1="835.81" y1="794.43" x2="832.66" y2="797.58" stroke="#f4f4f4" stroke-width="2.2"/>
<text transform="translate(857.1 794.14) scale(0.93 1)" font-size="9" fill="#e8e8e8" stroke="#e8e8e8" stroke-width="0.22">Noise</text>
<path d="M829.54 827.87A12.1 12.1 0 1 1 846.66 827.87" fill="none" stroke="#505050" stroke-width="1.9"/>
<path d="M829.54 827.87A12.1 12.1 0 1 1 848.58 813.26" fill="none" stroke="#ff8a1a" stroke-width="2.2"/>
<circle cx="838.1" cy="819.31" r="8.1" fill="url(#gKnob)" stroke="#2b2b2b" stroke-width="0.7"/>
<line x1="840.91" y1="817.69" x2="844.76" y2="815.46" stroke="#f4f4f4" stroke-width="2.2"/>
<text transform="translate(857.1 821.31) scale(0.93 1)" font-size="9" fill="#e8e8e8" stroke="#e8e8e8" stroke-width="0.22">Filt Freq</text>
<path d="M829.54 855.04A12.1 12.1 0 1 1 846.66 855.04" fill="none" stroke="#505050" stroke-width="1.9"/>
<path d="M829.54 855.04A12.1 12.1 0 0 1 832.99 835.51" fill="none" stroke="#ff8a1a" stroke-width="2.2"/>
<circle cx="838.1" cy="846.48" r="8.1" fill="url(#gKnob)" stroke="#2b2b2b" stroke-width="0.7"/>
<line x1="836.73" y1="843.54" x2="834.85" y2="839.51" stroke="#f4f4f4" stroke-width="2.2"/>
<text transform="translate(857.1 848.48) scale(0.93 1)" font-size="9" fill="#e8e8e8" stroke="#e8e8e8" stroke-width="0.22">Reso</text>
<rect x="819.7" y="832" width="109.8" height="22" fill="url(#gFadeK)"/>
<path d="M870.8 839.6H877.8L874.3 844.8Z" fill="#f0f0f0"/>
</g>
<rect x="930.6" y="718" width="109.8" height="135.6" fill="#2e2e2e"/>
<clipPath id="kc8"><rect x="930.6" y="718" width="109.8" height="135.6"/></clipPath><g clip-path="url(#kc8)">
<path d="M940.44 746.36A12.1 12.1 0 1 1 957.56 746.36" fill="none" stroke="#505050" stroke-width="1.9"/>
<path d="M940.44 746.36A12.1 12.1 0 0 1 937.08 735.7" fill="none" stroke="#ff8a1a" stroke-width="2.2"/>
<circle cx="949" cy="737.8" r="8.1" fill="url(#gKnob)" stroke="#2b2b2b" stroke-width="0.7"/>
<line x1="945.81" y1="737.24" x2="941.42" y2="736.46" stroke="#f4f4f4" stroke-width="2.2"/>
<text transform="translate(968 739.8) scale(0.93 1)" font-size="9" fill="#e8e8e8" stroke="#e8e8e8" stroke-width="0.22">1 Freq</text>
<path d="M940.44 773.53A12.1 12.1 0 1 1 957.56 773.53" fill="none" stroke="#505050" stroke-width="1.9"/>
<path d="M940.44 773.53A12.1 12.1 0 0 1 937.31 768.1" fill="none" stroke="#ff8a1a" stroke-width="2.2"/>
<circle cx="949" cy="764.97" r="8.1" fill="url(#gKnob)" stroke="#2b2b2b" stroke-width="0.7"/>
<line x1="945.87" y1="765.81" x2="941.57" y2="766.96" stroke="#f4f4f4" stroke-width="2.2"/>
<text transform="translate(968 766.97) scale(0.93 1)" font-size="9" fill="#e8e8e8" stroke="#e8e8e8" stroke-width="0.22">2 Freq</text>
<path d="M940.44 800.7A12.1 12.1 0 1 1 957.56 800.7" fill="none" stroke="#505050" stroke-width="1.9"/>
<path d="M940.44 800.7A12.1 12.1 0 0 1 946.9 780.22" fill="none" stroke="#ff8a1a" stroke-width="2.2"/>
<circle cx="949" cy="792.14" r="8.1" fill="url(#gKnob)" stroke="#2b2b2b" stroke-width="0.7"/>
<line x1="948.44" y1="788.95" x2="947.66" y2="784.56" stroke="#f4f4f4" stroke-width="2.2"/>
<text transform="translate(968 794.14) scale(0.93 1)" font-size="9" fill="#e8e8e8" stroke="#e8e8e8" stroke-width="0.22">3 Freq</text>
<path d="M940.44 827.87A12.1 12.1 0 1 1 957.56 827.87" fill="none" stroke="#505050" stroke-width="1.9"/>
<path d="M940.44 827.87A12.1 12.1 0 1 1 961.05 818.26" fill="none" stroke="#ff8a1a" stroke-width="2.2"/>
<circle cx="949" cy="819.31" r="8.1" fill="url(#gKnob)" stroke="#2b2b2b" stroke-width="0.7"/>
<line x1="952.23" y1="819.03" x2="956.67" y2="818.64" stroke="#f4f4f4" stroke-width="2.2"/>
<text transform="translate(968 821.31) scale(0.93 1)" font-size="9" fill="#e8e8e8" stroke="#e8e8e8" stroke-width="0.22">4 Freq</text>
<path d="M940.44 855.04A12.1 12.1 0 1 1 957.56 855.04" fill="none" stroke="#505050" stroke-width="1.9"/>
<path d="M940.44 855.04A12.1 12.1 0 1 1 957.56 855.04" fill="none" stroke="#ff8a1a" stroke-width="2.2"/>
<circle cx="949" cy="846.48" r="8.1" fill="url(#gKnob)" stroke="#2b2b2b" stroke-width="0.7"/>
<line x1="951.29" y1="848.77" x2="954.44" y2="851.92" stroke="#f4f4f4" stroke-width="2.2"/>
<text transform="translate(968 848.48) scale(0.93 1)" font-size="9" fill="#e8e8e8" stroke="#e8e8e8" stroke-width="0.22">5 Freq</text>
<rect x="930.6" y="832" width="109.8" height="22" fill="url(#gFadeK)"/>
<path d="M981.5 839.6H988.5L985 844.8Z" fill="#f0f0f0"/>
</g>
<rect x="1041.5" y="718" width="109.8" height="135.6" fill="#2e2e2e"/>
<clipPath id="kc9"><rect x="1041.5" y="718" width="109.8" height="135.6"/></clipPath><g clip-path="url(#kc9)">
<path d="M1051.34 746.36A12.1 12.1 0 1 1 1068.46 746.36" fill="none" stroke="#505050" stroke-width="1.9"/>
<path d="M1051.34 746.36A12.1 12.1 0 0 1 1047.85 736.75" fill="none" stroke="#ff8a1a" stroke-width="2.2"/>
<circle cx="1059.9" cy="737.8" r="8.1" fill="url(#gKnob)" stroke="#2b2b2b" stroke-width="0.7"/>
<line x1="1056.67" y1="737.52" x2="1052.23" y2="737.13" stroke="#f4f4f4" stroke-width="2.2"/>
<text transform="translate(1078.9 739.8) scale(0.93 1)" font-size="9" fill="#e8e8e8" stroke="#e8e8e8" stroke-width="0.22">Time 1L</text>
<path d="M1051.34 773.53A12.1 12.1 0 1 1 1068.46 773.53" fill="none" stroke="#505050" stroke-width="1.9"/>
<path d="M1051.34 773.53A12.1 12.1 0 0 1 1049.42 758.92" fill="none" stroke="#ff8a1a" stroke-width="2.2"/>
<circle cx="1059.9" cy="764.97" r="8.1" fill="url(#gKnob)" stroke="#2b2b2b" stroke-width="0.7"/>
<line x1="1057.09" y1="763.35" x2="1053.24" y2="761.12" stroke="#f4f4f4" stroke-width="2.2"/>
<text transform="translate(1078.9 766.97) scale(0.93 1)" font-size="9" fill="#e8e8e8" stroke="#e8e8e8" stroke-width="0.22">Time 2L</text>
<path d="M1051.34 800.7A12.1 12.1 0 1 1 1068.46 800.7" fill="none" stroke="#505050" stroke-width="1.9"/>
<path d="M1051.34 800.7A12.1 12.1 0 0 1 1054.79 781.17" fill="none" stroke="#ff8a1a" stroke-width="2.2"/>
<circle cx="1059.9" cy="792.14" r="8.1" fill="url(#gKnob)" stroke="#2b2b2b" stroke-width="0.7"/>
<line x1="1058.53" y1="789.2" x2="1056.65" y2="785.17" stroke="#f4f4f4" stroke-width="2.2"/>
<text transform="translate(1078.9 794.14) scale(0.93 1)" font-size="9" fill="#e8e8e8" stroke="#e8e8e8" stroke-width="0.22">Time 1R</text>
<path d="M1051.34 827.87A12.1 12.1 0 1 1 1068.46 827.87" fill="none" stroke="#505050" stroke-width="1.9"/>
<path d="M1051.34 827.87A12.1 12.1 0 0 1 1050.63 811.53" fill="none" stroke="#ff8a1a" stroke-width="2.2"/>
<circle cx="1059.9" cy="819.31" r="8.1" fill="url(#gKnob)" stroke="#2b2b2b" stroke-width="0.7"/>
<line x1="1057.42" y1="817.23" x2="1054.01" y2="814.36" stroke="#f4f4f4" stroke-width="2.2"/>
<text transform="translate(1078.9 821.31) scale(0.93 1)" font-size="9" fill="#e8e8e8" stroke="#e8e8e8" stroke-width="0.22">Time 2R</text>
<rect x="1041.5" y="832" width="109.8" height="22" fill="url(#gFadeK)"/>
<path d="M1057.94 847.06A2.9 2.9 0 0 1 1062.26 847.06" fill="none" stroke="#2db4e6" stroke-width="1.5"/>
<path d="M1055.94 845.25A5.6 5.6 0 0 1 1064.26 845.25" fill="none" stroke="#2db4e6" stroke-width="1.5"/>
<path d="M1054.01 843.51A8.2 8.2 0 0 1 1066.19 843.51" fill="none" stroke="#2db4e6" stroke-width="1.5"/>
<circle cx="1060.1" cy="848.6" r="1.5" fill="#2db4e6"/>
<path d="M1092.4 840.2H1100.2L1096.3 846.6Z" fill="#f0f0f0"/>
</g>
<rect x="1152.4" y="718" width="109.8" height="135.6" fill="#2e2e2e"/>
<path d="M1202.6 786.6H1211.2M1206.9 782.3V790.9" fill="none" stroke="#a8a8a8" stroke-width="1.3"/>
<rect x="1283.6" y="718" width="51.4" height="135.6" fill="#2e2e2e"/>
<path d="M1319.1 786.6H1327.7M1323.4 782.3V790.9" fill="none" stroke="#a8a8a8" stroke-width="1.3"/>
<rect x="1336.3" y="718" width="80.1" height="135.6" fill="#2e2e2e"/>
<path d="M1371.85 786.6H1380.45M1376.15 782.3V790.9" fill="none" stroke="#a8a8a8" stroke-width="1.3"/>
<rect x="73.3" y="854.3" width="109.9" height="80" fill="#2e2e2e"/>
<rect x="73.3" y="855" width="109.9" height="15" fill="#545454"/>
<circle cx="80" cy="862.4" r="3.35" fill="#ffe033"/>
<text transform="translate(89.3 865.7) scale(0.93 1)" font-size="9" fill="#f0f0f0" stroke="#f0f0f0" stroke-width="0.22">Drum Machine</text>
<rect x="73.3" y="871.75" width="109.9" height="15" fill="#545454"/>
<circle cx="80" cy="879.15" r="3.35" fill="#ffe033"/>
<text transform="translate(89.3 882.45) scale(0.93 1)" font-size="9" fill="#f0f0f0" stroke="#f0f0f0" stroke-width="0.22">EQ+</text>
<path d="M154.8 879.95 L159.8 879.35 L163.8 880.75 L167.8 881.75 L171.8 880.55 L175.8 878.35 L179.3 877.75 L181.8 877.95" fill="none" stroke="#e4e4e4" stroke-width="1.1" stroke-linejoin="round"/>
<rect x="73.3" y="888.5" width="109.9" height="15" fill="#545454"/>
<circle cx="80" cy="895.9" r="3.35" fill="#ffe033"/>
<text transform="translate(89.3 899.2) scale(0.93 1)" font-size="9" fill="#f0f0f0" stroke="#f0f0f0" stroke-width="0.22">Compressor</text>
<rect x="176.6" y="890.5" width="4.4" height="11.4" fill="#333"/>
<path d="M123.55 913.85H132.35M127.95 909.45V918.25" fill="none" stroke="#aaaaaa" stroke-width="1.5"/>
<text transform="translate(127.95 931.6) scale(0.95 1)" font-size="10.7" fill="#8e8e8e" text-anchor="middle" stroke="#8e8e8e" stroke-width="0.22">Σ 1.5 ms</text>
<rect x="184.3" y="854.3" width="109.9" height="80" fill="#2e2e2e"/>
<rect x="184.3" y="855" width="109.9" height="15" fill="#545454"/>
<circle cx="191" cy="862.4" r="3.35" fill="#ffe033"/>
<text transform="translate(200.3 865.7) scale(0.93 1)" font-size="9" fill="#f0f0f0" stroke="#f0f0f0" stroke-width="0.22">Drum Machine</text>
<rect x="184.3" y="871.75" width="109.9" height="15" fill="#545454"/>
<circle cx="191" cy="879.15" r="3.35" fill="#ffe033"/>
<text transform="translate(200.3 882.45) scale(0.93 1)" font-size="9" fill="#f0f0f0" stroke="#f0f0f0" stroke-width="0.22">Amp</text>
<path d="M234.55 897.1H243.35M238.95 892.7V901.5" fill="none" stroke="#aaaaaa" stroke-width="1.5"/>
<text transform="translate(238.95 931.6) scale(0.95 1)" font-size="10.7" fill="#8e8e8e" text-anchor="middle" stroke="#8e8e8e" stroke-width="0.22">Σ 2.4 ms</text>
<rect x="295.4" y="854.3" width="79.6" height="80" fill="#2e2e2e"/>
<rect x="295.4" y="855" width="79.6" height="15" fill="#545454"/>
<circle cx="302.1" cy="862.4" r="3.35" fill="#ffe033"/>
<text transform="translate(311.4 865.7) scale(0.93 1)" font-size="9" fill="#f0f0f0" stroke="#f0f0f0" stroke-width="0.22">Mid-Side Split</text>
<path d="M330.5 880.35H339.3M334.9 875.95V884.75" fill="none" stroke="#aaaaaa" stroke-width="1.5"/>
<rect x="376.1" y="854.3" width="109.8" height="80" fill="#2e2e2e"/>
<rect x="376.1" y="855" width="109.8" height="15" fill="#545454"/>
<circle cx="382.8" cy="862.4" r="3.35" fill="#ffe033"/>
<text transform="translate(392.1 865.7) scale(0.93 1)" font-size="9" fill="#f0f0f0" stroke="#f0f0f0" stroke-width="0.22">Dynamics</text>
<rect x="482.5" y="856" width="3.4" height="12.8" fill="#2a2a2a"/>
<rect x="482.5" y="856" width="3.4" height="2.2" fill="#2d6aa8"/>
<rect x="376.1" y="871.75" width="109.8" height="15" fill="#545454"/>
<circle cx="382.8" cy="879.15" r="3.35" fill="#ffe033"/>
<text transform="translate(392.1 882.45) scale(0.93 1)" font-size="9" fill="#f0f0f0" stroke="#f0f0f0" stroke-width="0.22">EQ-5</text>
<path d="M458.5 881.35 L462.5 876.55 L467.5 881.75 L471.5 882.35 L475.5 879.75 L479.5 879.75 L484.5 879.75" fill="none" stroke="#e4e4e4" stroke-width="1.1" stroke-linejoin="round"/>
<path d="M426.3 897.1H435.1M430.7 892.7V901.5" fill="none" stroke="#aaaaaa" stroke-width="1.5"/>
<rect x="487" y="854.3" width="109.8" height="80" fill="#2e2e2e"/>
<rect x="487" y="855" width="109.8" height="15" fill="#545454"/>
<circle cx="493.7" cy="862.4" r="3.35" fill="#ffe033"/>
<text transform="translate(503 865.7) scale(0.93 1)" font-size="9" fill="#f0f0f0" stroke="#f0f0f0" stroke-width="0.22">Ring-Mod</text>
<path d="M537.2 880.35H546M541.6 875.95V884.75" fill="none" stroke="#aaaaaa" stroke-width="1.5"/>
<rect x="597.9" y="854.3" width="109.8" height="80" fill="#2e2e2e"/>
<rect x="597.9" y="855" width="109.8" height="15" fill="#545454"/>
<circle cx="604.6" cy="862.4" r="3.35" fill="#ffe033"/>
<text transform="translate(613.9 865.7) scale(0.93 1)" font-size="9" fill="#f0f0f0" stroke="#f0f0f0" stroke-width="0.22">Polymer</text>
<rect x="597.9" y="871.75" width="109.8" height="15" fill="#545454"/>
<circle cx="604.6" cy="879.15" r="3.35" fill="#ffe033"/>
<text transform="translate(613.9 882.45) scale(0.93 1)" font-size="9" fill="#f0f0f0" stroke="#f0f0f0" stroke-width="0.22">EQ+</text>
<path d="M681.3 883.75 L683.8 876.95 L687.3 878.75 L691.3 877.75 L695.3 878.95 L698.3 876.55 L702.3 877.35 L706.3 876.55" fill="none" stroke="#e4e4e4" stroke-width="1.1" stroke-linejoin="round"/>
<rect x="597.9" y="888.5" width="109.8" height="15" fill="#545454"/>
<circle cx="604.6" cy="895.9" r="3.35" fill="#ffe033"/>
<text transform="translate(613.9 899.2) scale(0.93 1)" font-size="9" fill="#f0f0f0" stroke="#f0f0f0" stroke-width="0.22">FX Grid</text>
<path d="M648.1 913.85H656.9M652.5 909.45V918.25" fill="none" stroke="#aaaaaa" stroke-width="1.5"/>
<text transform="translate(652.5 931.6) scale(0.95 1)" font-size="10.7" fill="#8e8e8e" text-anchor="middle" stroke="#8e8e8e" stroke-width="0.22">Σ 0.8 ms</text>
<rect x="708.8" y="854.3" width="109.8" height="80" fill="#2e2e2e"/>
<rect x="708.8" y="855" width="109.8" height="15" fill="#545454"/>
<path d="M715.9 858.7A3.8 3.8 0 1 0 718.9 864.2A3.1 3.1 0 0 1 715.9 858.7Z" fill="#ffe033"/>
<text transform="translate(724.8 865.7) scale(0.93 1)" font-size="9" fill="#f0f0f0" stroke="#f0f0f0" stroke-width="0.22">Polymer</text>
<rect x="708.8" y="871.75" width="109.8" height="15" fill="#545454"/>
<path d="M715.9 875.45A3.8 3.8 0 1 0 718.9 880.95A3.1 3.1 0 0 1 715.9 875.45Z" fill="#ffe033"/>
<text transform="translate(724.8 882.45) scale(0.93 1)" font-size="9" fill="#f0f0f0" stroke="#f0f0f0" stroke-width="0.22">Treemonster</text>
<path d="M759 897.1H767.8M763.4 892.7V901.5" fill="none" stroke="#aaaaaa" stroke-width="1.5"/>
<text transform="translate(763.4 931.6) scale(0.95 1)" font-size="10.7" fill="#8e8e8e" text-anchor="middle" stroke="#8e8e8e" stroke-width="0.22">Σ 0.3 ms</text>
<rect x="819.7" y="854.3" width="109.8" height="80" fill="#2e2e2e"/>
<rect x="819.7" y="855" width="109.8" height="15" fill="#545454"/>
<circle cx="826.4" cy="862.4" r="3.35" fill="#ffe033"/>
<text transform="translate(835.7 865.7) scale(0.93 1)" font-size="9" fill="#f0f0f0" stroke="#f0f0f0" stroke-width="0.22">Polysynth</text>
<rect x="819.7" y="871.75" width="109.8" height="15" fill="#545454"/>
<circle cx="826.4" cy="879.15" r="3.35" fill="#ffe033"/>
<text transform="translate(835.7 882.45) scale(0.93 1)" font-size="9" fill="#f0f0f0" stroke="#f0f0f0" stroke-width="0.22">EQ+</text>
<path d="M901.1 879.35 L907.1 879.35 L910.1 880.75 L913.1 878.75 L916.1 881.55 L920.1 878.95 L924.1 879.35 L928.1 879.35" fill="none" stroke="#e4e4e4" stroke-width="1.1" stroke-linejoin="round"/>
<rect x="819.7" y="888.5" width="109.8" height="15" fill="#545454"/>
<circle cx="826.4" cy="895.9" r="3.35" fill="#ffe033"/>
<text transform="translate(835.7 899.2) scale(0.93 1)" font-size="9" fill="#f0f0f0" stroke="#f0f0f0" stroke-width="0.22">Saturator</text>
<path d="M869.9 913.85H878.7M874.3 909.45V918.25" fill="none" stroke="#aaaaaa" stroke-width="1.5"/>
<text transform="translate(874.3 931.6) scale(0.95 1)" font-size="10.7" fill="#8e8e8e" text-anchor="middle" stroke="#8e8e8e" stroke-width="0.22">Σ 0.5 ms</text>
<rect x="930.6" y="854.3" width="109.8" height="80" fill="#2e2e2e"/>
<rect x="930.6" y="855" width="109.8" height="15" fill="#545454"/>
<circle cx="937.3" cy="862.4" r="3.35" fill="#ffe033"/>
<text transform="translate(946.6 865.7) scale(0.93 1)" font-size="9" fill="#f0f0f0" stroke="#f0f0f0" stroke-width="0.22">Dynamics</text>
<rect x="1033.8" y="857" width="4.4" height="11.4" fill="#333"/>
<rect x="930.6" y="871.75" width="109.8" height="15" fill="#545454"/>
<path d="M937.7 875.45A3.8 3.8 0 1 0 940.7 880.95A3.1 3.1 0 0 1 937.7 875.45Z" fill="#ffe033"/>
<text transform="translate(946.6 882.45) scale(0.93 1)" font-size="9" fill="#f0f0f0" stroke="#f0f0f0" stroke-width="0.22">EQ+</text>
<path d="M1013 882.95 L1017 878.55 L1021 877.35 L1025 878.35 L1029 876.95 L1034 877.55 L1039 877.75" fill="none" stroke="#e4e4e4" stroke-width="1.1" stroke-linejoin="round"/>
<path d="M980.8 897.1H989.6M985.2 892.7V901.5" fill="none" stroke="#aaaaaa" stroke-width="1.5"/>
<rect x="1041.5" y="854.3" width="109.8" height="80" fill="#2e2e2e"/>
<rect x="1041.5" y="855" width="109.8" height="15" fill="#545454"/>
<circle cx="1048.2" cy="862.4" r="3.35" fill="#ffe033"/>
<text transform="translate(1057.5 865.7) scale(0.93 1)" font-size="9" fill="#f0f0f0" stroke="#f0f0f0" stroke-width="0.22">Poly Grid</text>
<rect x="1041.5" y="871.75" width="109.8" height="15" fill="#545454"/>
<circle cx="1048.2" cy="879.15" r="3.35" fill="#ffe033"/>
<text transform="translate(1057.5 882.45) scale(0.93 1)" font-size="9" fill="#f0f0f0" stroke="#f0f0f0" stroke-width="0.22">Blur</text>
<rect x="1041.5" y="888.5" width="109.8" height="15" fill="#545454"/>
<circle cx="1048.2" cy="895.9" r="3.35" fill="#ffe033"/>
<text transform="translate(1057.5 899.2) scale(0.93 1)" font-size="9" fill="#f0f0f0" stroke="#f0f0f0" stroke-width="0.22">EQ-2</text>
<path d="M1122.9 897.7 L1129.9 897.3 L1134.9 896.5 L1138.9 894.5 L1142.4 892.1 L1145.9 894.3 L1149.9 895.7" fill="none" stroke="#e4e4e4" stroke-width="1.1" stroke-linejoin="round"/>
<path d="M1091.7 913.85H1100.5M1096.1 909.45V918.25" fill="none" stroke="#aaaaaa" stroke-width="1.5"/>
<text transform="translate(1096.1 931.6) scale(0.95 1)" font-size="10.7" fill="#8e8e8e" text-anchor="middle" stroke="#8e8e8e" stroke-width="0.22">Σ 0.3 ms</text>
<rect x="1152.4" y="854.3" width="109.8" height="80" fill="#2e2e2e"/>
<rect x="1152.4" y="855" width="109.8" height="15" fill="#545454"/>
<circle cx="1159.1" cy="862.4" r="3.35" fill="#ffe033"/>
<text transform="translate(1168.4 865.7) scale(0.93 1)" font-size="9" fill="#f0f0f0" stroke="#f0f0f0" stroke-width="0.22">Resonator Bank</text>
<rect x="1152.4" y="871.75" width="109.8" height="15" fill="#545454"/>
<circle cx="1159.1" cy="879.15" r="3.35" fill="#ffe033"/>
<text transform="translate(1168.4 882.45) scale(0.93 1)" font-size="9" fill="#f0f0f0" stroke="#f0f0f0" stroke-width="0.22">Peak Limiter</text>
<rect x="1256" y="873.35" width="4.2" height="11.6" fill="#4a90d9"/>
<path d="M1202.6 897.1H1211.4M1207 892.7V901.5" fill="none" stroke="#aaaaaa" stroke-width="1.5"/>
<text transform="translate(1207 931.6) scale(0.95 1)" font-size="10.7" fill="#8e8e8e" text-anchor="middle" stroke="#8e8e8e" stroke-width="0.22">Σ 1.5 ms</text>
<rect x="1283.6" y="854.3" width="51.4" height="80" fill="#2e2e2e"/>
<g clip-path="url(#cpPR)">
<rect x="1283.6" y="855" width="51.4" height="15" fill="#545454"/>
<circle cx="1290.3" cy="862.4" r="3.35" fill="#ffe033"/>
<text transform="translate(1299.6 865.7) scale(0.93 1)" font-size="9" fill="#f0f0f0" stroke="#f0f0f0" stroke-width="0.22">Reverb</text>
<path d="M1318.7 880.35H1327.5M1323.1 875.95V884.75" fill="none" stroke="#aaaaaa" stroke-width="1.5"/>
</g>
<rect x="1336.3" y="854.3" width="80.1" height="80" fill="#2e2e2e"/>
<rect x="1336.3" y="855" width="80.1" height="15" fill="#545454"/>
<circle cx="1343" cy="862.4" r="3.35" fill="#ffe033"/>
<text transform="translate(1352.3 865.7) scale(0.93 1)" font-size="9" fill="#f0f0f0" stroke="#f0f0f0" stroke-width="0.22">Stereo Split</text>
<rect x="1336.3" y="871.75" width="80.1" height="15" fill="#545454"/>
<circle cx="1343" cy="879.15" r="3.35" fill="#ffe033"/>
<text transform="translate(1352.3 882.45) scale(0.93 1)" font-size="9" fill="#f0f0f0" stroke="#f0f0f0" stroke-width="0.22">Multiband FX-3</text>
<rect x="1336.3" y="888.5" width="80.1" height="15" fill="#545454"/>
<circle cx="1343" cy="895.9" r="3.35" fill="#ffe033"/>
<text transform="translate(1352.3 899.2) scale(0.93 1)" font-size="9" fill="#f0f0f0" stroke="#f0f0f0" stroke-width="0.22">Peak Limiter</text>
<rect x="1410.2" y="889.9" width="4.6" height="12.2" fill="#333"/>
<rect x="1410.2" y="889.5" width="4.6" height="1" fill="#3f8fd8"/>
<path d="M1371.65 913.85H1380.45M1376.05 909.45V918.25" fill="none" stroke="#aaaaaa" stroke-width="1.5"/>
<text transform="translate(1376.05 931.6) scale(0.95 1)" font-size="10.7" fill="#8e8e8e" text-anchor="middle" stroke="#8e8e8e" stroke-width="0.22">Σ 1.5 ms</text>
<rect x="73.3" y="935.4" width="109.9" height="166.8" fill="#545454"/>
<text transform="translate(113.7 952.8) scale(0.895 1)" font-size="9" fill="#ececec" text-anchor="middle" stroke="#ececec" stroke-width="0.22">Plate Reverb</text>
<text transform="translate(113.7 977.7) scale(0.92 1)" font-size="9" fill="#ececec" text-anchor="middle" stroke="#ececec" stroke-width="0.22">Dark Delay</text>
<path d="M158.27 959.93A12.2 12.2 0 1 1 175.53 959.93" fill="none" stroke="#707070" stroke-width="1.9"/>
<path d="M158.27 959.93A12.2 12.2 0 0 1 155.3 955.07" fill="none" stroke="#ffe22e" stroke-width="2.2"/>
<circle cx="166.9" cy="951.3" r="8.4" fill="url(#gKnobL)" stroke="#2b2b2b" stroke-width="0.7"/>
<line x1="163.7" y1="952.34" x2="159.31" y2="953.77" stroke="#f4f4f4" stroke-width="2.2"/>
<path d="M158.27 984.83A12.2 12.2 0 1 1 175.53 984.83" fill="none" stroke="#707070" stroke-width="1.9"/>
<circle cx="166.9" cy="976.2" r="8.4" fill="url(#gKnobL)" stroke="#2b2b2b" stroke-width="0.7"/>
<line x1="164.52" y1="978.58" x2="161.26" y2="981.84" stroke="#f4f4f4" stroke-width="2.2"/>
<path d="M96.92 1019.38A16.1 16.1 0 1 1 119.68 1019.38" fill="none" stroke="#707070" stroke-width="1.6"/>
<path d="M102.79 992.87A16.1 16.1 0 0 1 108.3 991.9" fill="none" stroke="#ff8a1a" stroke-width="1.9"/>
<circle cx="108.3" cy="1008" r="12.1" fill="url(#gPan)" stroke="#333" stroke-width="1"/>
<line x1="106.86" y1="1004.05" x2="104.67" y2="998.04" stroke="#fafafa" stroke-width="2"/>
<rect x="91.1" y="1024.4" width="35.1" height="23.1" rx="3" fill="url(#gBtn)" stroke="#3a3a3a" stroke-width="0.9"/>
<circle cx="108.65" cy="1036" r="4.4" fill="#ffffff"/>
<rect x="91.1" y="1050.6" width="35.1" height="22.8" rx="3" fill="url(#gBtn)" stroke="#3a3a3a" stroke-width="0.9"/>
<text transform="translate(108.65 1066) scale(1.06 1)" font-size="10.9" fill="#ffffff" text-anchor="middle" font-weight="bold">S</text>
<rect x="91.1" y="1076.6" width="35.1" height="22.7" rx="3" fill="url(#gBtn)" stroke="#3a3a3a" stroke-width="0.9"/>
<text transform="translate(108.65 1091.8) scale(1.03 1)" font-size="10.9" fill="#ffffff" text-anchor="middle" font-weight="bold">M</text>
<rect x="129" y="991.2" width="36.6" height="108.1" rx="2.6" fill="#1c1c1c"/>
<rect x="130.6" y="1018.7" width="33.4" height="66.6" fill="#6b421a"/>
<rect x="130.6" y="1018.7" width="33.4" height="1.9" fill="#ff8c1a"/>
<text transform="translate(147.3 1095.8) scale(0.96 1)" font-size="10.3" fill="#dcdcdc" text-anchor="middle" stroke="#dcdcdc" stroke-width="0.22">−2.7</text>
<rect x="73.3" y="1102.7" width="109.9" height="2.7" fill="#00a896"/>
<rect x="73.3" y="1105.3" width="109.9" height="3.2" fill="#003731"/>
<rect x="184.3" y="935.4" width="109.9" height="166.8" fill="#545454"/>
<text transform="translate(224.7 952.8) scale(0.895 1)" font-size="9" fill="#ececec" text-anchor="middle" stroke="#ececec" stroke-width="0.22">Plate Reverb</text>
<text transform="translate(224.7 977.7) scale(0.92 1)" font-size="9" fill="#ececec" text-anchor="middle" stroke="#ececec" stroke-width="0.22">Dark Delay</text>
<path d="M269.27 959.93A12.2 12.2 0 1 1 286.53 959.93" fill="none" stroke="#707070" stroke-width="1.9"/>
<circle cx="277.9" cy="951.3" r="8.4" fill="url(#gKnobL)" stroke="#2b2b2b" stroke-width="0.7"/>
<line x1="275.52" y1="953.68" x2="272.26" y2="956.94" stroke="#f4f4f4" stroke-width="2.2"/>
<path d="M269.27 984.83A12.2 12.2 0 1 1 286.53 984.83" fill="none" stroke="#707070" stroke-width="1.9"/>
<path d="M269.27 984.83A12.2 12.2 0 0 1 281.06 964.42" fill="none" stroke="#ffe22e" stroke-width="2.2"/>
<circle cx="277.9" cy="976.2" r="8.4" fill="url(#gKnobL)" stroke="#2b2b2b" stroke-width="0.7"/>
<line x1="278.77" y1="972.95" x2="279.97" y2="968.49" stroke="#f4f4f4" stroke-width="2.2"/>
<path d="M207.92 1019.38A16.1 16.1 0 1 1 230.68 1019.38" fill="none" stroke="#707070" stroke-width="1.6"/>
<path d="M219.3 991.9A16.1 16.1 0 0 1 235.34 1009.4" fill="none" stroke="#ff8a1a" stroke-width="1.9"/>
<circle cx="219.3" cy="1008" r="12.1" fill="url(#gPan)" stroke="#333" stroke-width="1"/>
<line x1="223.48" y1="1008.37" x2="229.86" y2="1008.92" stroke="#fafafa" stroke-width="2"/>
<rect x="202.1" y="1024.4" width="35.1" height="23.1" rx="3" fill="url(#gBtn)" stroke="#3a3a3a" stroke-width="0.9"/>
<circle cx="219.65" cy="1036" r="4.4" fill="#ffffff"/>
<rect x="202.1" y="1050.6" width="35.1" height="22.8" rx="3" fill="url(#gBtn)" stroke="#3a3a3a" stroke-width="0.9"/>
<text transform="translate(219.65 1066) scale(1.06 1)" font-size="10.9" fill="#ffffff" text-anchor="middle" font-weight="bold">S</text>
<rect x="202.1" y="1076.6" width="35.1" height="22.7" rx="3" fill="url(#gBtn)" stroke="#3a3a3a" stroke-width="0.9"/>
<text transform="translate(219.65 1091.8) scale(1.03 1)" font-size="10.9" fill="#ffffff" text-anchor="middle" font-weight="bold">M</text>
<rect x="240" y="991.2" width="36.6" height="108.1" rx="2.6" fill="#1c1c1c"/>
<rect x="241.6" y="1021" width="33.4" height="64.3" fill="#6b421a"/>
<rect x="241.6" y="1021" width="33.4" height="1.9" fill="#ff8c1a"/>
<text transform="translate(258.3 1095.8) scale(0.96 1)" font-size="10.3" fill="#dcdcdc" text-anchor="middle" stroke="#dcdcdc" stroke-width="0.22">−3.2</text>
<rect x="184.3" y="1102.7" width="109.9" height="2.7" fill="#44c8ff"/>
<rect x="184.3" y="1105.3" width="109.9" height="3.2" fill="#164254"/>
<rect x="295.4" y="935.4" width="79.6" height="166.8" fill="#545454"/>
<text transform="translate(321 952.8) scale(0.895 1)" font-size="9" fill="#ececec" text-anchor="middle" stroke="#ececec" stroke-width="0.22">PlateReverb</text>
<text transform="translate(321 977.7) scale(0.92 1)" font-size="9" fill="#ececec" text-anchor="middle" stroke="#ececec" stroke-width="0.22">Dark Delay</text>
<path d="M349.47 959.93A12.2 12.2 0 1 1 366.73 959.93" fill="none" stroke="#707070" stroke-width="1.9"/>
<path d="M349.47 959.93A12.2 12.2 0 0 1 345.9 951.3" fill="none" stroke="#ffe22e" stroke-width="2.2"/>
<circle cx="358.1" cy="951.3" r="8.4" fill="url(#gKnobL)" stroke="#2b2b2b" stroke-width="0.7"/>
<line x1="354.74" y1="951.3" x2="350.12" y2="951.3" stroke="#f4f4f4" stroke-width="2.2"/>
<path d="M349.47 984.83A12.2 12.2 0 1 1 366.73 984.83" fill="none" stroke="#707070" stroke-width="1.9"/>
<circle cx="358.1" cy="976.2" r="8.4" fill="url(#gKnobL)" stroke="#2b2b2b" stroke-width="0.7"/>
<line x1="355.72" y1="978.58" x2="352.46" y2="981.84" stroke="#f4f4f4" stroke-width="2.2"/>
<path d="M304.12 1019.38A16.1 16.1 0 1 1 326.88 1019.38" fill="none" stroke="#707070" stroke-width="1.6"/>
<path d="M314.66 991.92A16.1 16.1 0 0 1 316.34 991.92" fill="none" stroke="#ff8a1a" stroke-width="1.9"/>
<circle cx="315.5" cy="1008" r="12.1" fill="url(#gPan)" stroke="#333" stroke-width="1"/>
<line x1="315.5" y1="1003.8" x2="315.5" y2="997.4" stroke="#fafafa" stroke-width="2"/>
<rect x="298.3" y="1024.4" width="35.1" height="23.1" rx="3" fill="url(#gBtn)" stroke="#3a3a3a" stroke-width="0.9"/>
<circle cx="315.85" cy="1036" r="3.9" fill="#9a9a9a"/>
<rect x="298.3" y="1050.6" width="35.1" height="22.8" rx="3" fill="url(#gBtn)" stroke="#3a3a3a" stroke-width="0.9"/>
<text transform="translate(315.85 1066) scale(1.06 1)" font-size="10.9" fill="#ffffff" text-anchor="middle" font-weight="bold">S</text>
<rect x="298.3" y="1076.6" width="35.1" height="22.7" rx="3" fill="url(#gBtn)" stroke="#3a3a3a" stroke-width="0.9"/>
<text transform="translate(315.85 1091.8) scale(1.03 1)" font-size="10.9" fill="#ffffff" text-anchor="middle" font-weight="bold">M</text>
<rect x="336.2" y="991.2" width="36.6" height="108.1" rx="2.6" fill="#1c1c1c"/>
<rect x="337.8" y="1012" width="33.4" height="73.3" fill="#6b421a"/>
<rect x="337.8" y="1012" width="33.4" height="1.9" fill="#ff8c1a"/>
<text transform="translate(354.5 1095.8) scale(0.96 1)" font-size="10.3" fill="#dcdcdc" text-anchor="middle" stroke="#dcdcdc" stroke-width="0.22">0.0</text>
<rect x="295.4" y="1102.7" width="79.6" height="2.7" fill="#d93672"/>
<rect x="295.4" y="1105.3" width="79.6" height="3.2" fill="#471125"/>
<rect x="376.1" y="935.4" width="109.8" height="166.8" fill="#545454"/>
<text transform="translate(416.5 952.8) scale(0.895 1)" font-size="9" fill="#ececec" text-anchor="middle" stroke="#ececec" stroke-width="0.22">Plate Reverb</text>
<text transform="translate(416.5 977.7) scale(0.92 1)" font-size="9" fill="#ececec" text-anchor="middle" stroke="#ececec" stroke-width="0.22">Dark Delay</text>
<path d="M461.07 959.93A12.2 12.2 0 1 1 478.33 959.93" fill="none" stroke="#707070" stroke-width="1.9"/>
<path d="M461.07 959.93A12.2 12.2 0 0 1 471.82 939.29" fill="none" stroke="#ffe22e" stroke-width="2.2"/>
<circle cx="469.7" cy="951.3" r="8.4" fill="url(#gKnobL)" stroke="#2b2b2b" stroke-width="0.7"/>
<line x1="470.28" y1="947.99" x2="471.09" y2="943.44" stroke="#f4f4f4" stroke-width="2.2"/>
<path d="M461.07 984.83A12.2 12.2 0 1 1 478.33 984.83" fill="none" stroke="#707070" stroke-width="1.9"/>
<circle cx="469.7" cy="976.2" r="8.4" fill="url(#gKnobL)" stroke="#2b2b2b" stroke-width="0.7"/>
<line x1="467.32" y1="978.58" x2="464.06" y2="981.84" stroke="#f4f4f4" stroke-width="2.2"/>
<path d="M399.72 1019.38A16.1 16.1 0 1 1 422.48 1019.38" fill="none" stroke="#707070" stroke-width="1.6"/>
<path d="M400.75 995.67A16.1 16.1 0 0 1 411.1 991.9" fill="none" stroke="#ff8a1a" stroke-width="1.9"/>
<circle cx="411.1" cy="1008" r="12.1" fill="url(#gPan)" stroke="#333" stroke-width="1"/>
<line x1="408.4" y1="1004.78" x2="404.29" y2="999.88" stroke="#fafafa" stroke-width="2"/>
<rect x="393.9" y="1024.4" width="35.1" height="23.1" rx="3" fill="url(#gBtn)" stroke="#3a3a3a" stroke-width="0.9"/>
<circle cx="411.45" cy="1036" r="3.9" fill="#9a9a9a"/>
<rect x="393.9" y="1050.6" width="35.1" height="22.8" rx="3" fill="url(#gBtn)" stroke="#3a3a3a" stroke-width="0.9"/>
<text transform="translate(411.45 1066) scale(1.06 1)" font-size="10.9" fill="#ffffff" text-anchor="middle" font-weight="bold">S</text>
<rect x="393.9" y="1076.6" width="35.1" height="22.7" rx="3" fill="url(#gBtn)" stroke="#3a3a3a" stroke-width="0.9"/>
<text transform="translate(411.45 1091.8) scale(1.03 1)" font-size="10.9" fill="#ffffff" text-anchor="middle" font-weight="bold">M</text>
<rect x="431.8" y="991.2" width="36.6" height="108.1" rx="2.6" fill="#1c1c1c"/>
<rect x="433.4" y="1035.3" width="33.4" height="50" fill="#6b421a"/>
<rect x="433.4" y="1035.3" width="33.4" height="1.9" fill="#ff8c1a"/>
<text transform="translate(450.1 1095.8) scale(0.96 1)" font-size="10.3" fill="#dcdcdc" text-anchor="middle" stroke="#dcdcdc" stroke-width="0.22">−10.0</text>
<rect x="376.1" y="1102.7" width="109.8" height="2.7" fill="#d92e24"/>
<rect x="376.1" y="1105.3" width="109.8" height="3.2" fill="#470f0b"/>
<rect x="487" y="935.4" width="109.8" height="166.8" fill="#545454"/>
<text transform="translate(527.4 952.8) scale(0.895 1)" font-size="9" fill="#ececec" text-anchor="middle" stroke="#ececec" stroke-width="0.22">Plate Reverb</text>
<text transform="translate(527.4 977.7) scale(0.92 1)" font-size="9" fill="#ececec" text-anchor="middle" stroke="#ececec" stroke-width="0.22">Dark Delay</text>
<path d="M571.97 959.93A12.2 12.2 0 1 1 589.23 959.93" fill="none" stroke="#707070" stroke-width="1.9"/>
<circle cx="580.6" cy="951.3" r="8.4" fill="url(#gKnobL)" stroke="#2b2b2b" stroke-width="0.7"/>
<line x1="578.22" y1="953.68" x2="574.96" y2="956.94" stroke="#f4f4f4" stroke-width="2.2"/>
<path d="M571.97 984.83A12.2 12.2 0 1 1 589.23 984.83" fill="none" stroke="#707070" stroke-width="1.9"/>
<path d="M571.97 984.83A12.2 12.2 0 0 1 570.03 970.1" fill="none" stroke="#ffe22e" stroke-width="2.2"/>
<circle cx="580.6" cy="976.2" r="8.4" fill="url(#gKnobL)" stroke="#2b2b2b" stroke-width="0.7"/>
<line x1="577.69" y1="974.52" x2="573.69" y2="972.21" stroke="#f4f4f4" stroke-width="2.2"/>
<path d="M510.62 1019.38A16.1 16.1 0 1 1 533.38 1019.38" fill="none" stroke="#707070" stroke-width="1.6"/>
<path d="M522 991.9A16.1 16.1 0 0 1 524.8 992.14" fill="none" stroke="#ff8a1a" stroke-width="1.9"/>
<circle cx="522" cy="1008" r="12.1" fill="url(#gPan)" stroke="#333" stroke-width="1"/>
<line x1="522.73" y1="1003.86" x2="523.84" y2="997.56" stroke="#fafafa" stroke-width="2"/>
<rect x="504.8" y="1024.4" width="35.1" height="23.1" rx="3" fill="url(#gBtn)" stroke="#3a3a3a" stroke-width="0.9"/>
<circle cx="522.35" cy="1036" r="3.9" fill="#9a9a9a"/>
<rect x="504.8" y="1050.6" width="35.1" height="22.8" rx="3" fill="url(#gBtn)" stroke="#3a3a3a" stroke-width="0.9"/>
<text transform="translate(522.35 1066) scale(1.06 1)" font-size="10.9" fill="#ffffff" text-anchor="middle" font-weight="bold">S</text>
<rect x="504.8" y="1076.6" width="35.1" height="22.7" rx="3" fill="url(#gBtn)" stroke="#3a3a3a" stroke-width="0.9"/>
<text transform="translate(522.35 1091.8) scale(1.03 1)" font-size="10.9" fill="#ffffff" text-anchor="middle" font-weight="bold">M</text>
<rect x="542.7" y="991.2" width="36.6" height="108.1" rx="2.6" fill="#1c1c1c"/>
<rect x="544.3" y="1035.3" width="33.4" height="50" fill="#6b421a"/>
<rect x="544.3" y="1035.3" width="33.4" height="1.9" fill="#ff8c1a"/>
<text transform="translate(561 1095.8) scale(0.96 1)" font-size="10.3" fill="#dcdcdc" text-anchor="middle" stroke="#dcdcdc" stroke-width="0.22">−10.0</text>
<rect x="487" y="1102.7" width="109.8" height="2.7" fill="#ff5a05"/>
<rect x="487" y="1105.3" width="109.8" height="3.2" fill="#541d01"/>
<rect x="597.9" y="935.4" width="109.8" height="166.8" fill="#545454"/>
<text transform="translate(638.3 952.8) scale(0.895 1)" font-size="9" fill="#ececec" text-anchor="middle" stroke="#ececec" stroke-width="0.22">Plate Reverb</text>
<text transform="translate(638.3 977.7) scale(0.92 1)" font-size="9" fill="#ececec" text-anchor="middle" stroke="#ececec" stroke-width="0.22">Dark Delay</text>
<path d="M682.87 959.93A12.2 12.2 0 1 1 700.13 959.93" fill="none" stroke="#707070" stroke-width="1.9"/>
<circle cx="691.5" cy="951.3" r="8.4" fill="url(#gKnobL)" stroke="#2b2b2b" stroke-width="0.7"/>
<line x1="689.12" y1="953.68" x2="685.86" y2="956.94" stroke="#f4f4f4" stroke-width="2.2"/>
<path d="M682.87 984.83A12.2 12.2 0 1 1 700.13 984.83" fill="none" stroke="#707070" stroke-width="1.9"/>
<circle cx="691.5" cy="976.2" r="8.4" fill="url(#gKnobL)" stroke="#2b2b2b" stroke-width="0.7"/>
<line x1="689.12" y1="978.58" x2="685.86" y2="981.84" stroke="#f4f4f4" stroke-width="2.2"/>
<path d="M621.52 1019.38A16.1 16.1 0 1 1 644.28 1019.38" fill="none" stroke="#707070" stroke-width="1.6"/>
<path d="M617.04 1010.8A16.1 16.1 0 0 1 632.9 991.9" fill="none" stroke="#ff8a1a" stroke-width="1.9"/>
<circle cx="632.9" cy="1008" r="12.1" fill="url(#gPan)" stroke="#333" stroke-width="1"/>
<line x1="628.76" y1="1008.73" x2="622.46" y2="1009.84" stroke="#fafafa" stroke-width="2"/>
<rect x="615.7" y="1024.4" width="35.1" height="23.1" rx="3" fill="url(#gBtn)" stroke="#3a3a3a" stroke-width="0.9"/>
<circle cx="633.25" cy="1036" r="4.4" fill="#ffffff"/>
<rect x="615.7" y="1050.6" width="35.1" height="22.8" rx="3" fill="url(#gBtn)" stroke="#3a3a3a" stroke-width="0.9"/>
<text transform="translate(633.25 1066) scale(1.06 1)" font-size="10.9" fill="#ffffff" text-anchor="middle" font-weight="bold">S</text>
<rect x="615.7" y="1076.6" width="35.1" height="22.7" rx="3" fill="url(#gBtn)" stroke="#3a3a3a" stroke-width="0.9"/>
<text transform="translate(633.25 1091.8) scale(1.03 1)" font-size="10.9" fill="#ffffff" text-anchor="middle" font-weight="bold">M</text>
<rect x="653.6" y="991.2" width="36.6" height="108.1" rx="2.6" fill="#1c1c1c"/>
<rect x="655.2" y="1002" width="33.4" height="83.3" fill="#6b421a"/>
<rect x="655.2" y="1002" width="33.4" height="1.9" fill="#ff8c1a"/>
<text transform="translate(671.9 1095.8) scale(0.96 1)" font-size="10.3" fill="#dcdcdc" text-anchor="middle" stroke="#dcdcdc" stroke-width="0.22">+3.3</text>
<rect x="597.9" y="1102.7" width="109.8" height="2.7" fill="#d99d10"/>
<rect x="597.9" y="1105.3" width="109.8" height="3.2" fill="#473305"/>
<rect x="708.8" y="935.4" width="109.8" height="166.8" fill="#545454"/>
<text transform="translate(749.2 952.8) scale(0.895 1)" font-size="9" fill="#ececec" text-anchor="middle" stroke="#ececec" stroke-width="0.22">Plate Reverb</text>
<text transform="translate(749.2 977.7) scale(0.92 1)" font-size="9" fill="#ececec" text-anchor="middle" stroke="#ececec" stroke-width="0.22">Dark Delay</text>
<path d="M793.77 959.93A12.2 12.2 0 1 1 811.03 959.93" fill="none" stroke="#707070" stroke-width="1.9"/>
<circle cx="802.4" cy="951.3" r="8.4" fill="url(#gKnobL)" stroke="#2b2b2b" stroke-width="0.7"/>
<line x1="800.02" y1="953.68" x2="796.76" y2="956.94" stroke="#f4f4f4" stroke-width="2.2"/>
<path d="M793.77 984.83A12.2 12.2 0 1 1 811.03 984.83" fill="none" stroke="#707070" stroke-width="1.9"/>
<circle cx="802.4" cy="976.2" r="8.4" fill="url(#gKnobL)" stroke="#2b2b2b" stroke-width="0.7"/>
<line x1="800.02" y1="978.58" x2="796.76" y2="981.84" stroke="#f4f4f4" stroke-width="2.2"/>
<path d="M732.42 1019.38A16.1 16.1 0 1 1 755.18 1019.38" fill="none" stroke="#707070" stroke-width="1.6"/>
<path d="M743.8 991.9A16.1 16.1 0 0 1 751.85 994.06" fill="none" stroke="#ff8a1a" stroke-width="1.9"/>
<circle cx="743.8" cy="1008" r="12.1" fill="url(#gPan)" stroke="#333" stroke-width="1"/>
<line x1="745.9" y1="1004.36" x2="749.1" y2="998.82" stroke="#fafafa" stroke-width="2"/>
<rect x="726.6" y="1024.4" width="35.1" height="23.1" rx="3" fill="url(#gBtn)" stroke="#3a3a3a" stroke-width="0.9"/>
<circle cx="744.15" cy="1036" r="4.4" fill="#ffffff"/>
<rect x="726.6" y="1050.6" width="35.1" height="22.8" rx="3" fill="url(#gBtn)" stroke="#3a3a3a" stroke-width="0.9"/>
<text transform="translate(744.15 1066) scale(1.06 1)" font-size="10.9" fill="#ffffff" text-anchor="middle" font-weight="bold">S</text>
<rect x="726.6" y="1076.6" width="35.1" height="22.7" rx="3" fill="url(#gBtn)" stroke="#3a3a3a" stroke-width="0.9"/>
<text transform="translate(744.15 1091.8) scale(1.03 1)" font-size="10.9" fill="#ffffff" text-anchor="middle" font-weight="bold">M</text>
<rect x="764.5" y="991.2" width="36.6" height="108.1" rx="2.6" fill="#1c1c1c"/>
<rect x="766.1" y="1035.3" width="33.4" height="50" fill="#6b421a"/>
<rect x="766.1" y="1035.3" width="33.4" height="1.9" fill="#ff8c1a"/>
<text transform="translate(782.8 1095.8) scale(0.96 1)" font-size="10.3" fill="#dcdcdc" text-anchor="middle" stroke="#dcdcdc" stroke-width="0.22">−10.0</text>
<rect x="708.8" y="1102.7" width="109.8" height="2.7" fill="#73981a"/>
<rect x="708.8" y="1105.3" width="109.8" height="3.2" fill="#253208"/>
<rect x="819.7" y="935.4" width="109.8" height="166.8" fill="#545454"/>
<text transform="translate(860.1 952.8) scale(0.895 1)" font-size="9" fill="#ececec" text-anchor="middle" stroke="#ececec" stroke-width="0.22">Plate Reverb</text>
<text transform="translate(860.1 977.7) scale(0.92 1)" font-size="9" fill="#ececec" text-anchor="middle" stroke="#ececec" stroke-width="0.22">Dark Delay</text>
<path d="M904.67 959.93A12.2 12.2 0 1 1 921.93 959.93" fill="none" stroke="#707070" stroke-width="1.9"/>
<circle cx="913.3" cy="951.3" r="8.4" fill="url(#gKnobL)" stroke="#2b2b2b" stroke-width="0.7"/>
<line x1="910.92" y1="953.68" x2="907.66" y2="956.94" stroke="#f4f4f4" stroke-width="2.2"/>
<path d="M904.67 984.83A12.2 12.2 0 1 1 921.93 984.83" fill="none" stroke="#707070" stroke-width="1.9"/>
<path d="M904.67 984.83A12.2 12.2 0 0 1 908.14 965.14" fill="none" stroke="#ffe22e" stroke-width="2.2"/>
<circle cx="913.3" cy="976.2" r="8.4" fill="url(#gKnobL)" stroke="#2b2b2b" stroke-width="0.7"/>
<line x1="911.88" y1="973.15" x2="909.93" y2="968.97" stroke="#f4f4f4" stroke-width="2.2"/>
<path d="M843.32 1019.38A16.1 16.1 0 1 1 866.08 1019.38" fill="none" stroke="#707070" stroke-width="1.6"/>
<path d="M849.19 992.87A16.1 16.1 0 0 1 854.7 991.9" fill="none" stroke="#ff8a1a" stroke-width="1.9"/>
<circle cx="854.7" cy="1008" r="12.1" fill="url(#gPan)" stroke="#333" stroke-width="1"/>
<line x1="853.26" y1="1004.05" x2="851.07" y2="998.04" stroke="#fafafa" stroke-width="2"/>
<rect x="837.5" y="1024.4" width="35.1" height="23.1" rx="3" fill="url(#gBtn)" stroke="#3a3a3a" stroke-width="0.9"/>
<circle cx="855.05" cy="1036" r="4.4" fill="#ffffff"/>
<rect x="837.5" y="1050.6" width="35.1" height="22.8" rx="3" fill="url(#gBtn)" stroke="#3a3a3a" stroke-width="0.9"/>
<text transform="translate(855.05 1066) scale(1.06 1)" font-size="10.9" fill="#ffffff" text-anchor="middle" font-weight="bold">S</text>
<rect x="837.5" y="1076.6" width="35.1" height="22.7" rx="3" fill="url(#gBtn)" stroke="#3a3a3a" stroke-width="0.9"/>
<text transform="translate(855.05 1091.8) scale(1.03 1)" font-size="10.9" fill="#ffffff" text-anchor="middle" font-weight="bold">M</text>
<rect x="875.4" y="991.2" width="36.6" height="108.1" rx="2.6" fill="#1c1c1c"/>
<rect x="877" y="1006" width="33.4" height="79.3" fill="#6b421a"/>
<rect x="877" y="1006" width="33.4" height="1.9" fill="#ff8c1a"/>
<text transform="translate(893.7 1095.8) scale(0.96 1)" font-size="10.3" fill="#dcdcdc" text-anchor="middle" stroke="#dcdcdc" stroke-width="0.22">+2.0</text>
<rect x="819.7" y="1102.7" width="109.8" height="2.7" fill="#3cbb60"/>
<rect x="819.7" y="1105.3" width="109.8" height="3.2" fill="#133d1f"/>
<rect x="930.6" y="935.4" width="109.8" height="166.8" fill="#545454"/>
<text transform="translate(971 952.8) scale(0.895 1)" font-size="9" fill="#ececec" text-anchor="middle" stroke="#ececec" stroke-width="0.22">Plate Reverb</text>
<text transform="translate(971 977.7) scale(0.92 1)" font-size="9" fill="#ececec" text-anchor="middle" stroke="#ececec" stroke-width="0.22">Dark Delay</text>
<path d="M1015.57 959.93A12.2 12.2 0 1 1 1032.83 959.93" fill="none" stroke="#707070" stroke-width="1.9"/>
<circle cx="1024.2" cy="951.3" r="8.4" fill="url(#gKnobL)" stroke="#2b2b2b" stroke-width="0.7"/>
<line x1="1021.82" y1="953.68" x2="1018.56" y2="956.94" stroke="#f4f4f4" stroke-width="2.2"/>
<path d="M1015.57 984.83A12.2 12.2 0 1 1 1032.83 984.83" fill="none" stroke="#707070" stroke-width="1.9"/>
<path d="M1015.57 984.83A12.2 12.2 0 0 1 1013.85 982.67" fill="none" stroke="#ffe22e" stroke-width="2.2"/>
<circle cx="1024.2" cy="976.2" r="8.4" fill="url(#gKnobL)" stroke="#2b2b2b" stroke-width="0.7"/>
<line x1="1021.35" y1="977.98" x2="1017.43" y2="980.43" stroke="#f4f4f4" stroke-width="2.2"/>
<path d="M954.22 1019.38A16.1 16.1 0 1 1 976.98 1019.38" fill="none" stroke="#707070" stroke-width="1.6"/>
<path d="M965.6 991.9A16.1 16.1 0 0 1 975.95 995.67" fill="none" stroke="#ff8a1a" stroke-width="1.9"/>
<circle cx="965.6" cy="1008" r="12.1" fill="url(#gPan)" stroke="#333" stroke-width="1"/>
<line x1="968.3" y1="1004.78" x2="972.41" y2="999.88" stroke="#fafafa" stroke-width="2"/>
<rect x="948.4" y="1024.4" width="35.1" height="23.1" rx="3" fill="url(#gBtn)" stroke="#3a3a3a" stroke-width="0.9"/>
<circle cx="965.95" cy="1036" r="3.9" fill="#9a9a9a"/>
<rect x="948.4" y="1050.6" width="35.1" height="22.8" rx="3" fill="url(#gBtn)" stroke="#3a3a3a" stroke-width="0.9"/>
<text transform="translate(965.95 1066) scale(1.06 1)" font-size="10.9" fill="#ffffff" text-anchor="middle" font-weight="bold">S</text>
<rect x="948.4" y="1076.6" width="35.1" height="22.7" rx="3" fill="url(#gBtn)" stroke="#3a3a3a" stroke-width="0.9"/>
<text transform="translate(965.95 1091.8) scale(1.03 1)" font-size="10.9" fill="#ffffff" text-anchor="middle" font-weight="bold">M</text>
<rect x="986.3" y="991.2" width="36.6" height="108.1" rx="2.6" fill="#1c1c1c"/>
<rect x="987.9" y="1023.3" width="33.4" height="62" fill="#6b421a"/>
<rect x="987.9" y="1023.3" width="33.4" height="1.9" fill="#ff8c1a"/>
<text transform="translate(1004.6 1095.8) scale(0.96 1)" font-size="10.3" fill="#dcdcdc" text-anchor="middle" stroke="#dcdcdc" stroke-width="0.22">−4.4</text>
<rect x="930.6" y="1102.7" width="109.8" height="2.7" fill="#4cd6bb"/>
<rect x="930.6" y="1105.3" width="109.8" height="3.2" fill="#19463d"/>
<rect x="1041.5" y="935.4" width="109.8" height="166.8" fill="#545454"/>
<text transform="translate(1081.9 952.8) scale(0.895 1)" font-size="9" fill="#ececec" text-anchor="middle" stroke="#ececec" stroke-width="0.22">Plate Reverb</text>
<text transform="translate(1081.9 977.7) scale(0.92 1)" font-size="9" fill="#ececec" text-anchor="middle" stroke="#ececec" stroke-width="0.22">Dark Delay</text>
<path d="M1126.47 959.93A12.2 12.2 0 1 1 1143.73 959.93" fill="none" stroke="#707070" stroke-width="1.9"/>
<circle cx="1135.1" cy="951.3" r="8.4" fill="url(#gKnobL)" stroke="#2b2b2b" stroke-width="0.7"/>
<line x1="1132.72" y1="953.68" x2="1129.46" y2="956.94" stroke="#f4f4f4" stroke-width="2.2"/>
<path d="M1126.47 984.83A12.2 12.2 0 1 1 1143.73 984.83" fill="none" stroke="#707070" stroke-width="1.9"/>
<circle cx="1135.1" cy="976.2" r="8.4" fill="url(#gKnobL)" stroke="#2b2b2b" stroke-width="0.7"/>
<line x1="1132.72" y1="978.58" x2="1129.46" y2="981.84" stroke="#f4f4f4" stroke-width="2.2"/>
<path d="M1065.12 1019.38A16.1 16.1 0 1 1 1087.88 1019.38" fill="none" stroke="#707070" stroke-width="1.6"/>
<path d="M1075.66 991.92A16.1 16.1 0 0 1 1077.34 991.92" fill="none" stroke="#ff8a1a" stroke-width="1.9"/>
<circle cx="1076.5" cy="1008" r="12.1" fill="url(#gPan)" stroke="#333" stroke-width="1"/>
<line x1="1076.5" y1="1003.8" x2="1076.5" y2="997.4" stroke="#fafafa" stroke-width="2"/>
<rect x="1059.3" y="1024.4" width="35.1" height="23.1" rx="3" fill="#e81010" stroke="#7a1010" stroke-width="0.9"/>
<circle cx="1076.85" cy="1036" r="4.3" fill="#1a0a0a"/>
<rect x="1059.3" y="1050.6" width="35.1" height="22.8" rx="3" fill="url(#gBtn)" stroke="#3a3a3a" stroke-width="0.9"/>
<text transform="translate(1076.85 1066) scale(1.06 1)" font-size="10.9" fill="#ffffff" text-anchor="middle" font-weight="bold">S</text>
<rect x="1059.3" y="1076.6" width="35.1" height="22.7" rx="3" fill="url(#gBtn)" stroke="#3a3a3a" stroke-width="0.9"/>
<text transform="translate(1076.85 1091.8) scale(1.03 1)" font-size="10.9" fill="#ffffff" text-anchor="middle" font-weight="bold">M</text>
<rect x="1097.2" y="991.2" width="36.6" height="108.1" rx="2.6" fill="#1c1c1c"/>
<rect x="1098.8" y="1011.9" width="33.4" height="73.4" fill="#6b421a"/>
<rect x="1098.8" y="1011.9" width="33.4" height="1.9" fill="#ff8c1a"/>
<text transform="translate(1115.5 1095.8) scale(0.96 1)" font-size="10.3" fill="#dcdcdc" text-anchor="middle" stroke="#dcdcdc" stroke-width="0.22">0.0</text>
<rect x="1041.5" y="1102.7" width="109.8" height="2.7" fill="#44c8ff"/>
<rect x="1041.5" y="1105.3" width="109.8" height="3.2" fill="#164254"/>
<rect x="1152.4" y="935.4" width="109.8" height="166.8" fill="#545454"/>
<text transform="translate(1192.8 952.8) scale(0.895 1)" font-size="9" fill="#ececec" text-anchor="middle" stroke="#ececec" stroke-width="0.22">Plate Reverb</text>
<text transform="translate(1192.8 977.7) scale(0.92 1)" font-size="9" fill="#ececec" text-anchor="middle" stroke="#ececec" stroke-width="0.22">Dark Delay</text>
<path d="M1237.37 959.93A12.2 12.2 0 1 1 1254.63 959.93" fill="none" stroke="#707070" stroke-width="1.9"/>
<circle cx="1246" cy="951.3" r="8.4" fill="url(#gKnobL)" stroke="#2b2b2b" stroke-width="0.7"/>
<line x1="1243.62" y1="953.68" x2="1240.36" y2="956.94" stroke="#f4f4f4" stroke-width="2.2"/>
<path d="M1237.37 984.83A12.2 12.2 0 1 1 1254.63 984.83" fill="none" stroke="#707070" stroke-width="1.9"/>
<circle cx="1246" cy="976.2" r="8.4" fill="url(#gKnobL)" stroke="#2b2b2b" stroke-width="0.7"/>
<line x1="1243.62" y1="978.58" x2="1240.36" y2="981.84" stroke="#f4f4f4" stroke-width="2.2"/>
<path d="M1176.02 1019.38A16.1 16.1 0 1 1 1198.78 1019.38" fill="none" stroke="#707070" stroke-width="1.6"/>
<path d="M1178.17 994.81A16.1 16.1 0 0 1 1187.4 991.9" fill="none" stroke="#ff8a1a" stroke-width="1.9"/>
<circle cx="1187.4" cy="1008" r="12.1" fill="url(#gPan)" stroke="#333" stroke-width="1"/>
<line x1="1184.99" y1="1004.56" x2="1181.32" y2="999.32" stroke="#fafafa" stroke-width="2"/>
<rect x="1170.2" y="1024.4" width="35.1" height="23.1" rx="3" fill="url(#gBtn)" stroke="#3a3a3a" stroke-width="0.9"/>
<circle cx="1187.75" cy="1036" r="3.9" fill="#9a9a9a"/>
<rect x="1170.2" y="1050.6" width="35.1" height="22.8" rx="3" fill="url(#gBtn)" stroke="#3a3a3a" stroke-width="0.9"/>
<text transform="translate(1187.75 1066) scale(1.06 1)" font-size="10.9" fill="#ffffff" text-anchor="middle" font-weight="bold">S</text>
<rect x="1170.2" y="1076.6" width="35.1" height="22.7" rx="3" fill="url(#gBtn)" stroke="#3a3a3a" stroke-width="0.9"/>
<text transform="translate(1187.75 1091.8) scale(1.03 1)" font-size="10.9" fill="#ffffff" text-anchor="middle" font-weight="bold">M</text>
<rect x="1208.1" y="991.2" width="36.6" height="108.1" rx="2.6" fill="#1c1c1c"/>
<rect x="1209.7" y="1035" width="33.4" height="50.3" fill="#6b421a"/>
<rect x="1209.7" y="1035" width="33.4" height="1.9" fill="#ff8c1a"/>
<text transform="translate(1226.4 1095.8) scale(0.96 1)" font-size="10.3" fill="#dcdcdc" text-anchor="middle" stroke="#dcdcdc" stroke-width="0.22">−10.0</text>
<rect x="1152.4" y="1102.7" width="109.8" height="2.7" fill="#d99d10"/>
<rect x="1152.4" y="1105.3" width="109.8" height="3.2" fill="#473305"/>
<rect x="1283.6" y="935.4" width="51.4" height="166.8" fill="#545454"/>
<g clip-path="url(#cpPR)">
<path d="M1306.4 955.6H1303.4V946.2H1314.8V955.6H1312.8" fill="none" stroke="#7c7c7c" stroke-width="1.1"/>
<path d="M1312 950.4V953.4H1307.6M1309.6 951.4L1307.4 953.4L1309.6 955.4" fill="none" stroke="#7c7c7c" stroke-width="1.1"/>
<text transform="translate(1309.4 977.9) scale(0.93 1)" font-size="9" fill="#7e7e7e" text-anchor="middle" stroke="#7e7e7e" stroke-width="0.22">Dark Delay</text>
<path d="M1292.32 1019.38A16.1 16.1 0 1 1 1315.08 1019.38" fill="none" stroke="#707070" stroke-width="1.6"/>
<path d="M1302.86 991.92A16.1 16.1 0 0 1 1304.54 991.92" fill="none" stroke="#ff8a1a" stroke-width="1.9"/>
<circle cx="1303.7" cy="1008" r="12.1" fill="url(#gPan)" stroke="#333" stroke-width="1"/>
<line x1="1303.7" y1="1003.8" x2="1303.7" y2="997.4" stroke="#fafafa" stroke-width="2"/>
<rect x="1286.5" y="1024.4" width="35.1" height="23.1" rx="3" fill="url(#gBtn)" stroke="#3a3a3a" stroke-width="0.9"/>
<circle cx="1304.05" cy="1036" r="3.9" fill="#9a9a9a"/>
<rect x="1286.5" y="1050.6" width="35.1" height="22.8" rx="3" fill="url(#gBtn)" stroke="#3a3a3a" stroke-width="0.9"/>
<text transform="translate(1304.05 1066) scale(1.06 1)" font-size="10.9" fill="#ffffff" text-anchor="middle" font-weight="bold">S</text>
<rect x="1286.5" y="1076.6" width="35.1" height="22.7" rx="3" fill="url(#gBtn)" stroke="#3a3a3a" stroke-width="0.9"/>
<text transform="translate(1304.05 1091.8) scale(1.03 1)" font-size="10.9" fill="#ffffff" text-anchor="middle" font-weight="bold">M</text>
<rect x="1324.4" y="991.2" width="36.6" height="108.1" rx="2.6" fill="#1c1c1c"/>
<rect x="1326" y="1011.9" width="33.4" height="73.4" fill="#6b421a"/>
<rect x="1326" y="1011.9" width="33.4" height="1.9" fill="#ff8c1a"/>
<text transform="translate(1342.7 1095.8) scale(0.96 1)" font-size="10.3" fill="#dcdcdc" text-anchor="middle" stroke="#dcdcdc" stroke-width="0.22">0.0</text>
</g>
<rect x="1283.6" y="1102.7" width="51.4" height="2.7" fill="#868686"/>
<rect x="1283.6" y="1105.3" width="51.4" height="3.2" fill="#868686"/>
<rect x="1336.3" y="935.4" width="80.1" height="166.8" fill="#545454"/>
<path d="M1345.02 1019.38A16.1 16.1 0 1 1 1367.78 1019.38" fill="none" stroke="#707070" stroke-width="1.6"/>
<path d="M1355.56 991.92A16.1 16.1 0 0 1 1357.24 991.92" fill="none" stroke="#ff8a1a" stroke-width="1.9"/>
<circle cx="1356.4" cy="1008" r="12.1" fill="url(#gPan)" stroke="#333" stroke-width="1"/>
<line x1="1356.4" y1="1003.8" x2="1356.4" y2="997.4" stroke="#fafafa" stroke-width="2"/>
<rect x="1339.2" y="1024.4" width="35.1" height="23.1" rx="3" fill="url(#gBtn)" stroke="#3a3a3a" stroke-width="0.9"/>
<circle cx="1356.75" cy="1036" r="3.9" fill="#9a9a9a"/>
<rect x="1339.2" y="1050.6" width="35.1" height="22.8" rx="3" fill="url(#gBtn)" stroke="#3a3a3a" stroke-width="0.9"/>
<text transform="translate(1356.75 1066) scale(1.06 1)" font-size="10.9" fill="#ffffff" text-anchor="middle" font-weight="bold">S</text>
<rect x="1339.2" y="1076.6" width="35.1" height="22.7" rx="3" fill="url(#gBtn)" stroke="#3a3a3a" stroke-width="0.9"/>
<text transform="translate(1356.75 1091.8) scale(1.03 1)" font-size="10.9" fill="#ffffff" text-anchor="middle" font-weight="bold">M</text>
<rect x="1377.1" y="991.2" width="36.6" height="108.1" rx="2.6" fill="#1c1c1c"/>
<rect x="1378.7" y="1011.9" width="33.4" height="73.4" fill="#6b421a"/>
<rect x="1378.7" y="1011.9" width="33.4" height="1.9" fill="#ff8c1a"/>
<text transform="translate(1395.4 1095.8) scale(0.96 1)" font-size="10.3" fill="#dcdcdc" text-anchor="middle" stroke="#dcdcdc" stroke-width="0.22">0.0</text>
<rect x="1336.3" y="1102.7" width="80.1" height="2.7" fill="#868686"/>
<rect x="1336.3" y="1105.3" width="80.1" height="3.2" fill="#868686"/>
<rect x="1235.5" y="1102.7" width="27.1" height="5.8" fill="#d99d10"/>
<rect x="1321" y="368.9" width="14" height="739.7" fill="url(#gShadR)"/>
<line x1="1335.6" y1="368.9" x2="1335.6" y2="1108.6" stroke="#141414" stroke-width="1.3"/>
</g>
<path d="M1424.4 879.8H1432.8L1428.6 886.2Z" fill="#8c8c8c"/>
<path d="M1424.2 899H1433Q1434.6 899 1434.6 900.6V906.2Q1434.6 907.8 1433 907.8H1429.2L1425.8 911V907.8H1424.2Q1422.6 907.8 1422.6 906.2V900.6Q1422.6 899 1424.2 899Z" fill="#e4e4e4"/>
<line x1="1425" y1="901.9" x2="1432.2" y2="901.9" stroke="#444" stroke-width="1"/>
<line x1="1425" y1="904.7" x2="1432.2" y2="904.7" stroke="#444" stroke-width="1"/>
<rect x="1421" y="915.7" width="15.2" height="15.2" rx="3" fill="#383838"/>
<rect x="1423.3" y="919.8" width="3" height="3.3" fill="#ff8c1a"/>
<rect x="1423.3" y="923.7" width="3" height="3.3" fill="#ff8c1a"/>
<rect x="1427.05" y="919.8" width="3" height="3.3" fill="#ff8c1a"/>
<rect x="1427.05" y="923.7" width="3" height="3.3" fill="#ff8c1a"/>
<rect x="1430.8" y="919.8" width="3" height="3.3" fill="#ff8c1a"/>
<rect x="1430.8" y="923.7" width="3" height="3.3" fill="#ff8c1a"/>
<rect x="1421" y="933.8" width="15.2" height="15.2" rx="3" fill="#383838"/>
<rect x="1428.6" y="937.4" width="5.5" height="3.6" fill="#ff8c1a"/>
<rect x="1428.6" y="941.8" width="5.5" height="3.6" fill="#ff8c1a"/>
<rect x="1423" y="937.4" width="4.6" height="1.5" fill="#e07a18"/>
<rect x="1423" y="939.55" width="4.6" height="1.5" fill="#e07a18"/>
<rect x="1423" y="941.7" width="4.6" height="1.5" fill="#e07a18"/>
<rect x="1423" y="943.85" width="4.6" height="1.5" fill="#e07a18"/>
<rect x="1421" y="952.4" width="15.2" height="15.2" rx="3" fill="#383838"/>
<rect x="1426.6" y="955.5" width="2.3" height="9.2" fill="#ff8c1a"/>
<rect x="1430" y="955.5" width="2.3" height="9.2" fill="#ff8c1a"/>
<line x1="1425.1" y1="955.5" x2="1425.1" y2="964.7" stroke="#ff8c1a" stroke-width="0.8" stroke-dasharray="0.9 0.9"/>
<rect x="1421" y="971.2" width="15.2" height="15.2" rx="3" fill="#383838"/>
<circle cx="1428.6" cy="978.8" r="4.5" fill="#ff8c1a"/>
<line x1="1428.6" y1="978.6" x2="1428.6" y2="975.2" stroke="#383838" stroke-width="1.3"/>
<rect x="1421" y="989.4" width="15.2" height="15.2" rx="3" fill="#383838"/>
<rect x="1423.3" y="992.9" width="10.6" height="8.2" rx="2.2" fill="#8f4d10" stroke="#ff8c1a" stroke-width="1.3"/>
<path d="M1427 992.9H1425Q1423.3 992.9 1423.3 994.6V999.4Q1423.3 1001.1 1425 1001.1H1427Z" fill="#ff8c1a"/>
<rect x="1421" y="1007.9" width="15.2" height="15.2" rx="3" fill="#383838"/>
<path d="M1423.4 1018.2C1428 1018.4 1430.2 1016.6 1433 1013.2" fill="none" stroke="#ff8c1a" stroke-width="1.5"/>
<path d="M1429 1012.4H1433.6V1017" fill="none" stroke="#ff8c1a" stroke-width="1.5"/>
<path d="M1433.2 1031.8H1426.6M1424 1036.4H1430.6" fill="none" stroke="#e2e2e2" stroke-width="1.5"/>
<path d="M1423.6 1031.8L1427.4 1029V1034.6ZM1433.6 1036.4L1429.8 1033.6V1039.2Z" fill="#e2e2e2"/>
<text transform="translate(1428.4 1055.6) scale(0.88 1)" font-size="8.7" fill="#e6e6e6" text-anchor="middle" font-weight="bold" font-style="italic">AB</text>
<line x1="1423" y1="1065.8" x2="1434.2" y2="1065.8" stroke="#6a6a6a" stroke-width="1"/>
<rect x="1421" y="1071.9" width="15.2" height="15.2" rx="3" fill="#383838"/>
<path d="M1424.2 1076.6H1427.6C1430.2 1076.6 1430.2 1078.4 1430.2 1082.6" fill="none" stroke="#ff8c1a" stroke-width="1.5"/>
<path d="M1427 1080L1430.2 1083.4L1433.4 1080" fill="none" stroke="#ff8c1a" stroke-width="1.5"/>
<rect x="1421" y="1090.2" width="15.2" height="15.2" rx="3" fill="#383838"/>
<path d="M1424.8 1093.8L1432.4 1101.6M1432.4 1093.8L1424.8 1101.6" fill="none" stroke="#ff8c1a" stroke-width="1.9"/>
<rect x="19.2" y="1124.6" width="2.4" height="7" fill="#e2e2e2"/>
<circle cx="20.4" cy="1121.6" r="1.5" fill="#e2e2e2"/>
<line x1="40.1" y1="1118" x2="40.1" y2="1136.4" stroke="#8c8c8c" stroke-width="1.4"/>
<text transform="translate(55 1131.2) scale(0.9 1)" font-size="11.1" fill="#dcdcdc" stroke="#dcdcdc" stroke-width="0.22">ARRANGE</text>
<text transform="translate(117.6 1131.2) scale(0.9 1)" font-size="11.1" fill="#ff8c1a" stroke="#ff8c1a" stroke-width="0.22">MIX</text>
<text transform="translate(151 1131.2) scale(0.9 1)" font-size="11.1" fill="#dcdcdc" stroke="#dcdcdc" stroke-width="0.22">EDIT</text>
<line x1="188.3" y1="1118" x2="188.3" y2="1136.4" stroke="#8c8c8c" stroke-width="1.4"/>
<rect x="202.4" y="1123.1" width="2.4" height="1.5" fill="#dcdcdc"/>
<rect x="206" y="1124.5" width="2.4" height="1.5" fill="#dcdcdc"/>
<rect x="209.8" y="1127.1" width="2.6" height="1.5" fill="#dcdcdc"/>
<rect x="205.8" y="1128.1" width="2.4" height="1.5" fill="#dcdcdc"/>
<rect x="202.4" y="1130.9" width="2.4" height="1.5" fill="#dcdcdc"/>
<rect x="206.2" y="1130.9" width="2.4" height="1.5" fill="#dcdcdc"/>
<rect x="210" y="1129.7" width="2" height="1.5" fill="#dcdcdc"/>
<circle cx="232.8" cy="1130.2" r="2.4" fill="none" stroke="#dcdcdc" stroke-width="1.3"/>
<circle cx="239.6" cy="1124" r="2.4" fill="none" stroke="#dcdcdc" stroke-width="1.3"/>
<line x1="234.4" y1="1128.6" x2="238" y2="1125.6" stroke="#dcdcdc" stroke-width="1.3"/>
<rect x="258.8" y="1120.6" width="12.6" height="13.4" rx="2.2" fill="#5c5c5c" stroke="#dcdcdc" stroke-width="1.3"/>
<rect x="259.2" y="1121" width="4.8" height="12.6" rx="1.2" fill="#dcdcdc"/>
<circle cx="1296.9" cy="1126" r="4.2" fill="none" stroke="#dcdcdc" stroke-width="1.6"/>
<line x1="1300" y1="1129.2" x2="1303.6" y2="1132.6" stroke="#dcdcdc" stroke-width="1.9"/>
<path d="M1321.8 1121.2H1328.2L1332 1125V1133H1321.8Z" fill="#dcdcdc"/>
<path d="M1328 1121.4V1125.2H1331.8" fill="none" stroke="#8a8a8a" stroke-width="0.8"/>
<rect x="1349.5" y="1120" width="12.7" height="15.1" rx="3.6" fill="#dcdcdc"/>
<circle cx="1355.9" cy="1129.2" r="3.7" fill="#2d2d2d"/>
<circle cx="1355.9" cy="1129.2" r="1.5" fill="#dcdcdc"/>
<circle cx="1355.9" cy="1122.9" r="1.2" fill="#2d2d2d"/>
<g transform="translate(0 0.9)">
<path d="M1380.2 1120.4Q1381.4 1119.2 1382.2 1120.4V1126.2L1383.2 1125.2Q1384.2 1124.6 1384.8 1125.6Q1385.8 1124.8 1386.6 1126Q1387.8 1125.4 1388.4 1126.6Q1389.8 1126.4 1390 1127.8V1131.2Q1390 1134.2 1388.4 1135.2H1382.4Q1380.8 1134.4 1379.6 1132.2L1377.4 1128.4Q1377.4 1127 1379 1127.4L1380.2 1128.6Z" fill="#dcdcdc"/>
</g>
<line x1="1404.7" y1="1118" x2="1404.7" y2="1136.4" stroke="#8c8c8c" stroke-width="1.4"/>
<rect x="1418.4" y="1120.8" width="12.7" height="12.3" rx="0.8" fill="#dcdcdc"/>
<rect x="1422.3" y="1120.6" width="0.9" height="12.4" fill="#2d2d2d"/>
<rect x="1426.4" y="1120.6" width="0.9" height="12.4" fill="#2d2d2d"/>
<rect x="1421.3" y="1120.6" width="2.9" height="7.4" fill="#2d2d2d"/>
<rect x="1425.4" y="1120.6" width="2.9" height="7.4" fill="#2d2d2d"/>
</svg>
</body></html>
